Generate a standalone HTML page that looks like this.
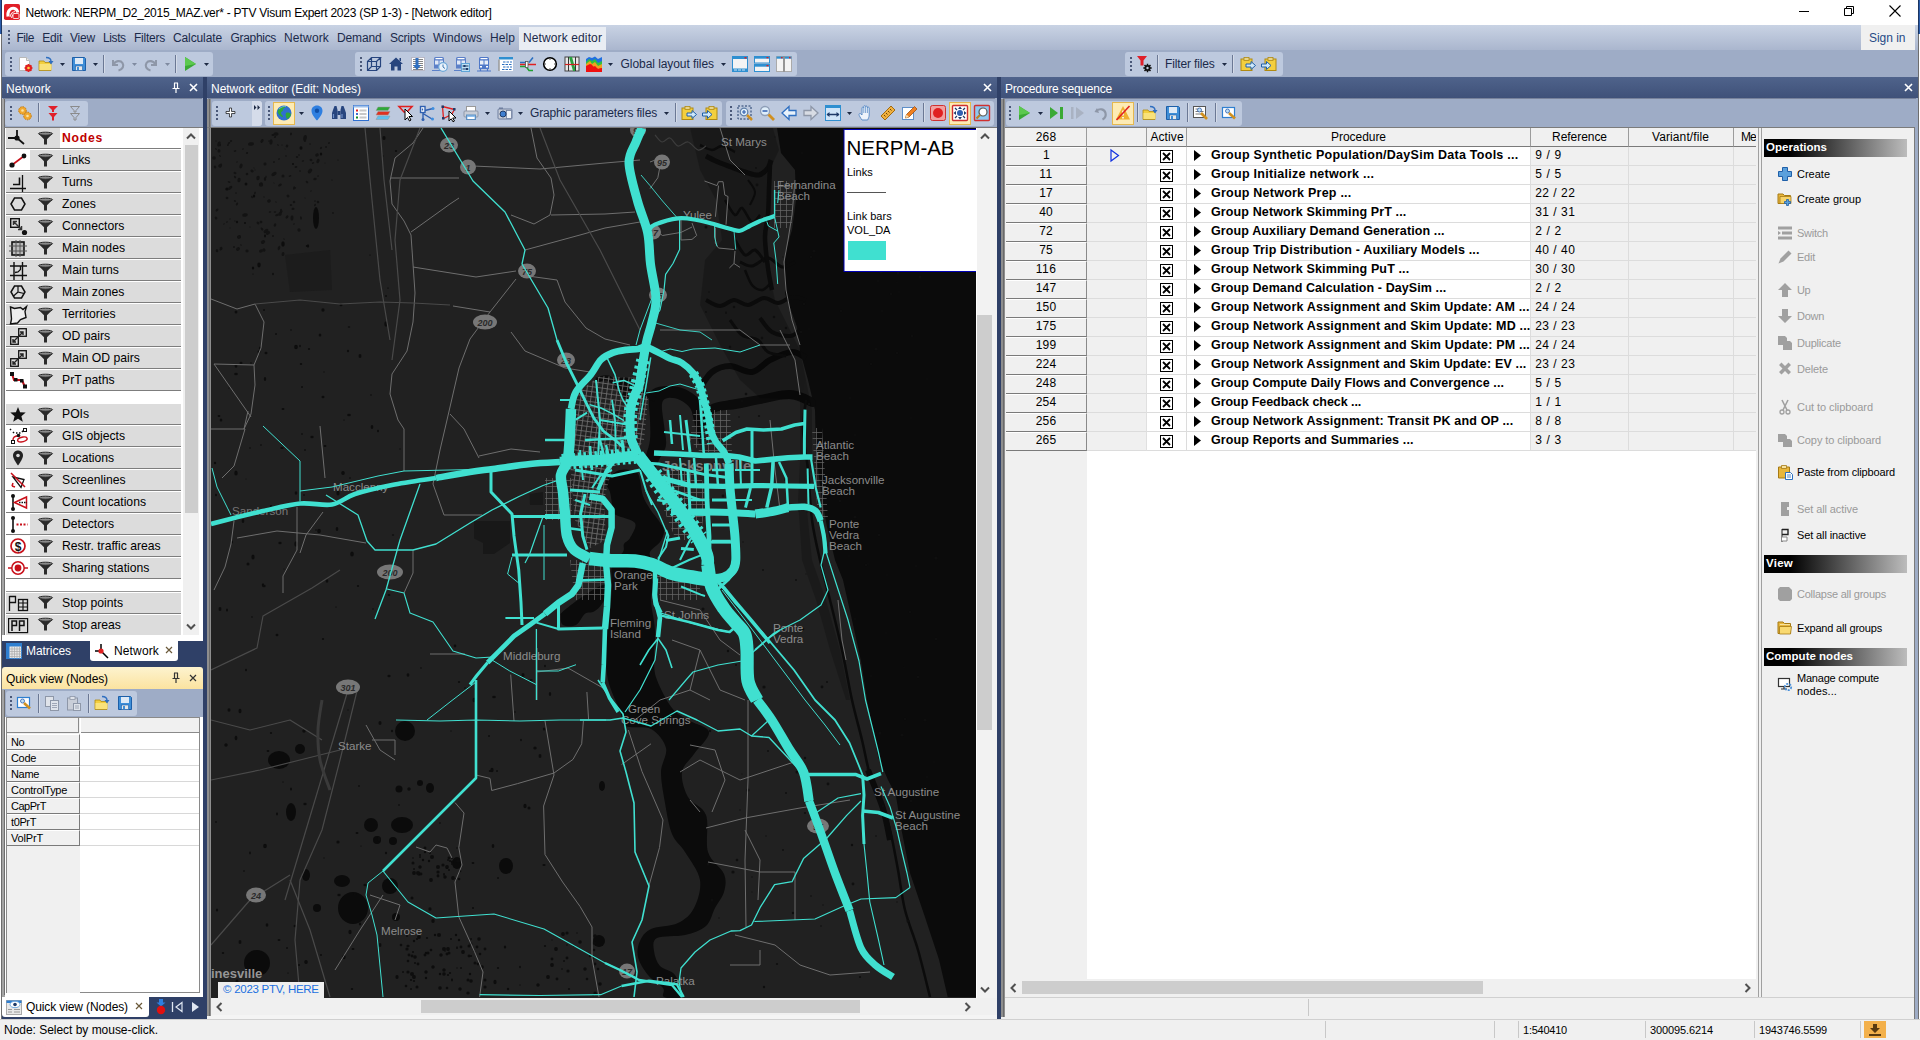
<!DOCTYPE html><html><head><meta charset="utf-8"><title>PTV Visum</title><style>
*{margin:0;padding:0;box-sizing:border-box}
html,body{width:1920px;height:1040px;overflow:hidden;background:#f0f0f0;font-family:"Liberation Sans",sans-serif;}
.t{position:absolute;white-space:pre;line-height:16px;height:16px;}
.r{position:absolute;}
.abs{position:absolute;}
svg{position:absolute;overflow:visible}
.ptitle{position:absolute;height:21px;top:77px;background:linear-gradient(#4f638b,#3f5179);}
.grp{position:absolute;background:#bdc9de;border-radius:3px;}
</style></head><body>
<div class="r" style="left:0px;top:0px;width:1920px;height:25px;background:#fff;"></div>
<div class="r" style="left:0px;top:0px;width:2px;height:33.5px;background:linear-gradient(90deg,#2a5caa 0,#2a5caa 65%,#1c3560 65%);"></div>
<div class="r" style="left:0px;top:33.5px;width:2px;height:1006.5px;background:linear-gradient(90deg,#fff 0,#fff 60%,#6e6e6e 60%);"></div>
<div class="r" style="left:1918px;top:0px;width:2px;height:33.5px;background:linear-gradient(90deg,#1c3560 0,#1c3560 30%,#2a5caa 30%);"></div>
<div class="r" style="left:1918px;top:33.5px;width:2px;height:1006.5px;background:linear-gradient(90deg,#6e6e6e 0,#6e6e6e 40%,#fff 40%);"></div>
<span class="t" style="left:25.50px;top:4.84px;font-size:12px;color:#000;letter-spacing:-0.254px;">Network: NERPM_D2_2015_MAZ.ver* - PTV Visum Expert 2023 (SP 1-3) - [Network editor]</span>
<svg style="left:4px;top:4px" width="17" height="17" viewBox="0 0 17 17"><rect x="0" y="0" width="16" height="16" rx="1.8" fill="#e01f27"/><path d="M4 12.5 C3 7 7 3.500 10.500 4.500 C12.500 5.200 13.500 6.500 13.800 8.500" stroke="#fff" stroke-width="3" fill="none"/><path d="M6 13 C6.500 10 8.500 8 11 7.500M7.500 14 C8 11.500 9.500 10 11.500 9.500" stroke="#fff" stroke-width="1.100" fill="none" opacity=".85"/><rect x="9" y="9.500" width="6" height="5" rx="1" fill="#e01f27" stroke="#fff" stroke-width=".9" opacity=".9"/></svg>
<svg style="left:1795px;top:0" width="120" height="25"><path d="M4 11.5h10" stroke="#000" stroke-width="1"/><path d="M49.5 8.5h7v7h-7z M51.5 8.5v-2h7v7h-2" stroke="#000" fill="none" stroke-width="1"/><path d="M94.5 5.5l11 11M105.5 5.5l-11 11" stroke="#000" stroke-width="1.1"/></svg>
<div class="r" style="left:2px;top:25px;width:1916px;height:25px;background:linear-gradient(#c9d3e4,#aab6ce);"></div>
<div class="r" style="left:519px;top:27px;width:87px;height:23px;background:#e9edf3;"></div>
<div class="r" style="left:1861px;top:25px;width:54px;height:25px;background:#f0f0f0;"></div>
<span class="t" style="left:16.50px;top:29.84px;font-size:12px;color:#1b2a4a;letter-spacing:-0.459px;">File</span>
<span class="t" style="left:42.30px;top:29.84px;font-size:12px;color:#1b2a4a;letter-spacing:-0.244px;">Edit</span>
<span class="t" style="left:70.00px;top:29.84px;font-size:12px;color:#1b2a4a;letter-spacing:-0.198px;">View</span>
<span class="t" style="left:103.00px;top:29.84px;font-size:12px;color:#1b2a4a;letter-spacing:-0.395px;">Lists</span>
<span class="t" style="left:134.00px;top:29.84px;font-size:12px;color:#1b2a4a;letter-spacing:-0.238px;">Filters</span>
<span class="t" style="left:173.00px;top:29.84px;font-size:12px;color:#1b2a4a;letter-spacing:-0.114px;">Calculate</span>
<span class="t" style="left:230.50px;top:29.84px;font-size:12px;color:#1b2a4a;letter-spacing:-0.315px;">Graphics</span>
<span class="t" style="left:284.00px;top:29.84px;font-size:12px;color:#1b2a4a;letter-spacing:0.141px;">Network</span>
<span class="t" style="left:337.00px;top:29.84px;font-size:12px;color:#1b2a4a;letter-spacing:-0.143px;">Demand</span>
<span class="t" style="left:390.00px;top:29.84px;font-size:12px;color:#1b2a4a;letter-spacing:-0.239px;">Scripts</span>
<span class="t" style="left:433.00px;top:29.84px;font-size:12px;color:#1b2a4a;letter-spacing:0.046px;">Windows</span>
<span class="t" style="left:490.00px;top:29.84px;font-size:12px;color:#1b2a4a;letter-spacing:0.080px;">Help</span>
<span class="t" style="left:523.00px;top:29.84px;font-size:12px;color:#1b2a4a;letter-spacing:0.117px;">Network editor</span>
<span class="t" style="left:1869.00px;top:29.84px;font-size:12px;color:#274b86;letter-spacing:-0.027px;">Sign in</span>
<div class="r" style="left:8px;top:30px;width:2px;height:2px;background:#4a5878;"></div><div class="r" style="left:8px;top:34px;width:2px;height:2px;background:#4a5878;"></div><div class="r" style="left:8px;top:38px;width:2px;height:2px;background:#4a5878;"></div><div class="r" style="left:8px;top:42px;width:2px;height:2px;background:#4a5878;"></div>
<div class="r" style="left:2px;top:50px;width:1916px;height:27px;background:#9eacc6;"></div>
<div class="grp" style="left:5px;top:52px;width:208px;height:24px"></div>
<div class="grp" style="left:355px;top:52px;width:442px;height:24px"></div>
<div class="grp" style="left:1125px;top:52px;width:158px;height:24px"></div>
<div class="r" style="left:10px;top:57px;width:2px;height:2px;background:#4a5878;"></div><div class="r" style="left:10px;top:61px;width:2px;height:2px;background:#4a5878;"></div><div class="r" style="left:10px;top:65px;width:2px;height:2px;background:#4a5878;"></div><div class="r" style="left:10px;top:69px;width:2px;height:2px;background:#4a5878;"></div>
<div class="r" style="left:360px;top:57px;width:2px;height:2px;background:#4a5878;"></div><div class="r" style="left:360px;top:61px;width:2px;height:2px;background:#4a5878;"></div><div class="r" style="left:360px;top:65px;width:2px;height:2px;background:#4a5878;"></div><div class="r" style="left:360px;top:69px;width:2px;height:2px;background:#4a5878;"></div>
<div class="r" style="left:1130px;top:57px;width:2px;height:2px;background:#4a5878;"></div><div class="r" style="left:1130px;top:61px;width:2px;height:2px;background:#4a5878;"></div><div class="r" style="left:1130px;top:65px;width:2px;height:2px;background:#4a5878;"></div><div class="r" style="left:1130px;top:69px;width:2px;height:2px;background:#4a5878;"></div>
<svg style="left:16.5px;top:56px" width="16" height="16" viewBox="0 0 16 16"><path d="M2.500 1.500h7l3 3v10h-10z" fill="#fff" stroke="#b8b8b8"/><path d="M9.500 1.500v3h3" fill="#e8e8e8" stroke="#b8b8b8"/><circle cx="11.500" cy="12" r="3.500" fill="#e02020"/><path d="M11.500 8v8M7.500 12h8M8.700 9.200l5.600 5.600M14.300 9.200l-5.600 5.600" stroke="#e02020" stroke-width="1.400"/><circle cx="11.500" cy="12" r="1.300" fill="#ffd040"/></svg>
<svg style="left:38px;top:56px" width="16" height="16" viewBox="0 0 16 16"><path d="M1 5h5l1 1.500h6v8h-12z" fill="#f3cf3f" stroke="#b08a12" stroke-width=".8"/><path d="M1.500 8h12v6h-12z" fill="#f9e27a"/><path d="M8 1.500c3 0 5 1 5 4" stroke="#2f6fc0" stroke-width="1.500" fill="none"/><path d="M10.500 5h5l-2.500 3.500z" fill="#2f6fc0"/></svg>
<svg style="left:60px;top:63px" width="5" height="3"><path d="M0 0h5l-2.500 3z" fill="#1e2a44"/></svg>
<svg style="left:71px;top:56px" width="16" height="16" viewBox="0 0 16 16"><path d="M1.500 1.500h12l1 1v12h-13z" fill="#3f8fd8" stroke="#1d5fa8"/><rect x="4" y="2" width="8" height="6" fill="#dfeaf6"/><rect x="4.500" y="10" width="7" height="4.500" fill="#e8e8e8" stroke="#1d5fa8" stroke-width=".6"/><rect x="6" y="11" width="2" height="3" fill="#3f8fd8"/></svg>
<svg style="left:93px;top:63px" width="5" height="3"><path d="M0 0h5l-2.500 3z" fill="#1e2a44"/></svg>
<div class="r" style="left:103px;top:55px;width:1px;height:18px;background:#6b7894"></div><div class="r" style="left:104px;top:55px;width:1px;height:18px;background:#d4dbe8"></div>
<svg style="left:109.5px;top:56px" width="16" height="16" viewBox="0 0 16 16"><path d="M3 4v5h5" stroke="#8e97a8" stroke-width="2" fill="none"/><path d="M3.500 8.500c2-4 7-4.500 9-1.500s0 6.500-4 7.500" stroke="#8e97a8" stroke-width="2.200" fill="none"/></svg>
<svg style="left:132px;top:63px" width="5" height="3"><path d="M0 0h5l-2.500 3z" fill="#7f8aa0"/></svg>
<svg style="left:142.5px;top:56px" width="16" height="16" viewBox="0 0 16 16"><path d="M13 4v5h-5" stroke="#8e97a8" stroke-width="2" fill="none"/><path d="M12.500 8.500c-2-4-7-4.500-9-1.500s0 6.500 4 7.500" stroke="#8e97a8" stroke-width="2.200" fill="none"/></svg>
<svg style="left:165px;top:63px" width="5" height="3"><path d="M0 0h5l-2.500 3z" fill="#7f8aa0"/></svg>
<div class="r" style="left:175px;top:55px;width:1px;height:18px;background:#6b7894"></div><div class="r" style="left:176px;top:55px;width:1px;height:18px;background:#d4dbe8"></div>
<svg style="left:182px;top:56px" width="16" height="16" viewBox="0 0 16 16"><path d="M3 1l11 7-11 7z" fill="#3aa935"/><path d="M3 1l11 7-11 2z" fill="#5cc94f"/></svg>
<svg style="left:204px;top:63px" width="5" height="3"><path d="M0 0h5l-2.500 3z" fill="#1e2a44"/></svg>
<svg style="left:366px;top:56px" width="16" height="16" viewBox="0 0 16 16"><path d="M1.500 5.500h9v9h-9zM1.500 5.500l4-4h9l-4 4M14.500 1.500v9l-4 4M1.500 14.500l4-4h9M5.500 1.500v9" stroke="#27457e" stroke-width="1.200" fill="none"/></svg>
<svg style="left:388px;top:56px" width="16" height="16" viewBox="0 0 16 16"><path d="M8 1.500l7 6.500h-2v6.500h-3.500v-4h-3v4h-3.500v-6.500h-2z" fill="#27457e"/><rect x="11.500" y="2" width="1.500" height="3" fill="#27457e"/></svg>
<svg style="left:410px;top:56px" width="16" height="16" viewBox="0 0 16 16"><rect x="1.500" y="1.500" width="13" height="13" fill="#fff" stroke="#b9b9c6"/><path d="M3 3.500h10M3 5.500h10M3 7.500h10M3 9.500h10M3 11.500h10M3 13.500h10" stroke="#666" stroke-width=".8"/><path d="M5.500 2h3v7h2.500l-4 5-4-5h2.500z" fill="#2f6fc0"/></svg>
<svg style="left:432px;top:56px" width="16" height="16" viewBox="0 0 16 16"><path d="M2 2.500q0-1.500 1.500-1.500h7q1.500 0 1.500 1.500v10h-10z" fill="#5c80c8"/><rect x="3.500" y="2" width="7" height="1.200" fill="#fff"/><rect x="3" y="4.500" width="3.500" height="4" fill="#dfe8f6"/><rect x="7.500" y="4.500" width="3.500" height="4" fill="#dfe8f6"/><path d="M0 14.500h9" stroke="#5c80c8"/><circle cx="11" cy="11" r="4.300" fill="#eaf3fb" stroke="#6fa8d8" stroke-width="1.200"/><path d="M11 8.500v2.500l2 1.500" stroke="#3f78b0" stroke-width="1" fill="none"/></svg>
<svg style="left:454px;top:56px" width="16" height="16" viewBox="0 0 16 16"><path d="M2 2.500q0-1.500 1.500-1.500h7q1.500 0 1.500 1.500v10h-10z" fill="#5c80c8"/><rect x="3.500" y="2" width="7" height="1.200" fill="#fff"/><rect x="3" y="4.500" width="3.500" height="4" fill="#dfe8f6"/><rect x="7.500" y="4.500" width="3.500" height="4" fill="#dfe8f6"/><path d="M0 14.500h9" stroke="#5c80c8"/><rect x="7.500" y="7.500" width="8" height="8" fill="#bfe0f4" stroke="#5fa4d6"/><path d="M8.500 10h6M8.500 13h6" stroke="#1e3a68" stroke-width="1"/><rect x="9.500" y="9" width="2" height="2" fill="#1e3a68"/><rect x="12" y="12" width="2" height="2" fill="#1e3a68"/></svg>
<svg style="left:476px;top:56px" width="16" height="16" viewBox="0 0 16 16"><path d="M3 2.500q0-1.500 1.500-1.500h7q1.500 0 1.500 1.500v10.500h-10z" fill="#4f78c8"/><rect x="4.500" y="2" width="7" height="1.200" fill="#fff"/><rect x="4" y="4.500" width="3.500" height="4" fill="#e8eef8"/><rect x="8.500" y="4.500" width="3.500" height="4" fill="#e8eef8"/><rect x="4" y="10" width="2" height="1.500" fill="#fff"/><rect x="10" y="10" width="2" height="1.500" fill="#fff"/><path d="M4.500 13v1.500M11.500 13v1.500M1 15h14" stroke="#4f78c8" stroke-width="1.200"/></svg>
<svg style="left:498px;top:56px" width="16" height="16" viewBox="0 0 16 16"><rect x="1" y="1" width="14" height="14" fill="#fff"/><rect x="1" y="1" width="14" height="2.500" fill="#2f8fd0"/><path d="M1 3.500v11.500" stroke="#999" stroke-width="1.500"/><path d="M5 6h9M4 8.500h10M5 11h9M4 13.500h10" stroke="#2a6fc0" stroke-width="1" stroke-dasharray="2.500 1"/></svg>
<svg style="left:520px;top:56px" width="16" height="16" viewBox="0 0 16 16"><path d="M0 6.500h6M9 6.500l4-5" stroke="#2a6fc0" stroke-width="1.500" fill="none"/><path d="M0 8.500h16" stroke="#e02020" stroke-width="1.500"/><path d="M0 10.500h6l3 4h4" stroke="#20a030" stroke-width="1.500" fill="none"/><rect x="5.500" y="5.500" width="2.500" height="6" fill="#fff" stroke="#555" stroke-width=".8"/></svg>
<svg style="left:542px;top:56px" width="16" height="16" viewBox="0 0 16 16"><circle cx="8" cy="8" r="6.300" fill="#fff" stroke="#000" stroke-width="1.600"/><path d="M8 2.500v1.500M8 12v1.500M2.500 8h1.500M12 8h1.500" stroke="#555" stroke-width="1"/></svg>
<svg style="left:564px;top:56px" width="16" height="16" viewBox="0 0 16 16"><rect x="1" y="1" width="14" height="14" fill="#e8e8e8" stroke="#444"/><path d="M5 1l4 14h3l-4-14z" fill="#2aa040"/><path d="M4.500 1v14M11.500 1v14" stroke="#333" stroke-width="1"/><path d="M1 8.500h14" stroke="#d02020" stroke-width="1.200"/></svg>
<svg style="left:586px;top:56px" width="16" height="16" viewBox="0 0 16 16"><path d="M0 3l3-2 3 1 3-1.500 3 2.500 4-2v15h-16z" fill="#1f6fe0"/><path d="M0 6l3-3 3 2 3-2 3 4 4-2v11h-16z" fill="#30c040"/><path d="M0 8l4-3 2 3 3-2 3 4 4-2v8h-16z" fill="#f0a020"/><path d="M0 10l4-2 3 3 2-1 3 3 4-1v4h-16z" fill="#f01010"/><path d="M0 11l5-3 3 3 4 2 4-1v4h-16z" fill="#f01010"/></svg>
<svg style="left:608px;top:62.5px" width="5" height="3"><path d="M0 0h5l-2.500 3z" fill="#1e2a44"/></svg>
<span class="t" style="left:620.60px;top:55.84px;font-size:12px;color:#1b2a4a;letter-spacing:-0.069px;">Global layout files</span>
<svg style="left:721px;top:62.5px" width="5" height="3"><path d="M0 0h5l-2.500 3z" fill="#1e2a44"/></svg>
<svg style="left:732px;top:56px" width="16" height="16" viewBox="0 0 16 16"><rect x=".500" y=".500" width="15" height="15" fill="#f4f4f4" stroke="#2f8fd0"/><rect x=".500" y=".500" width="15" height="2.500" fill="#2f8fd0"/><rect x="12.500" y="1" width="2" height="1.500" fill="#e02020"/><rect x=".500" y="12.500" width="15" height="3" fill="#2f8fd0"/><path d="M2 14h3M6 14h3M10 14h3" stroke="#cfe6f6" stroke-width="1"/></svg>
<svg style="left:754px;top:56px" width="16" height="16" viewBox="0 0 16 16"><rect x=".500" y=".500" width="15" height="6.500" fill="#f4f4f4" stroke="#2f8fd0"/><rect x=".500" y=".500" width="15" height="2.200" fill="#2f8fd0"/><rect x="12.500" y="1" width="2" height="1.300" fill="#e02020"/><rect x=".500" y="8.500" width="15" height="7" fill="#f4f4f4" stroke="#2f8fd0"/><rect x=".500" y="8.500" width="15" height="2.200" fill="#2f8fd0"/><rect x="12.500" y="9" width="2" height="1.300" fill="#e02020"/></svg>
<svg style="left:776px;top:56px" width="16" height="16" viewBox="0 0 16 16"><rect x=".500" y=".500" width="7" height="15" fill="#f4f4f4" stroke="#aaa"/><rect x="8.500" y=".500" width="7" height="15" fill="#f4f4f4" stroke="#aaa"/><rect x=".500" y=".500" width="7" height="2.200" fill="#2f8fd0"/><rect x="8.500" y=".500" width="7" height="2.200" fill="#2f8fd0"/><rect x="5" y="1" width="1.500" height="1.300" fill="#e02020"/><rect x="13" y="1" width="1.500" height="1.300" fill="#e02020"/><path d="M8 0v16" stroke="#888" stroke-width="1.200"/></svg>
<svg style="left:1136px;top:56px" width="16" height="16" viewBox="0 0 16 16"><path d="M1 0h10l-3.500 4.500v5h-3v-5z" fill="#e0202a"/><circle cx="11.500" cy="12" r="3" fill="#111"/><path d="M11.500 7.800v8.400M7.300 12h8.400M8.500 9l6 6M14.500 9l-6 6" stroke="#111" stroke-width="1.500"/><circle cx="11.500" cy="12" r="1.200" fill="#bdc9de"/></svg>
<div class="r" style="left:1157px;top:55px;width:1px;height:18px;background:#6b7894"></div><div class="r" style="left:1158px;top:55px;width:1px;height:18px;background:#d4dbe8"></div>
<span class="t" style="left:1165.00px;top:55.84px;font-size:12px;color:#1b2a4a;letter-spacing:-0.137px;">Filter files</span>
<svg style="left:1222px;top:62.5px" width="5" height="3"><path d="M0 0h5l-2.500 3z" fill="#1e2a44"/></svg>
<div class="r" style="left:1232px;top:55px;width:1px;height:18px;background:#6b7894"></div><div class="r" style="left:1233px;top:55px;width:1px;height:18px;background:#d4dbe8"></div>
<svg style="left:1239.5px;top:56px" width="16" height="16" viewBox="0 0 16 16"><rect x="1" y="3" width="11" height="11.500" fill="#f3cf3f" stroke="#b08a12"/><rect x="4" y="1.500" width="5" height="3" fill="#e8d48a" stroke="#b08a12" stroke-width=".8"/><path d="M6 8h5v-2.500l4.500 4-4.500 4v-2.500h-5z" fill="#cfe8fa" stroke="#1f5fa8" stroke-width="1"/></svg>
<svg style="left:1260.5px;top:56px" width="16" height="16" viewBox="0 0 16 16"><rect x="4" y="3" width="11" height="11.500" fill="#f3cf3f" stroke="#b08a12"/><rect x="7" y="1.500" width="5" height="3" fill="#e8d48a" stroke="#b08a12" stroke-width=".8"/><path d="M.500 8h5v-2.500l4.500 4-4.500 4v-2.500h-5z" fill="#cfe8fa" stroke="#1f5fa8" stroke-width="1"/></svg>
<div class="r" style="left:2px;top:77px;width:1916px;height:942px;background:#2f4067;"></div>
<div class="ptitle" style="left:2px;width:201px"></div>
<div class="ptitle" style="left:207px;width:790px"></div>
<div class="ptitle" style="left:1001px;width:917px"></div>
<span class="t" style="left:6.00px;top:81.34px;font-size:12px;color:#fff;letter-spacing:0.141px;">Network</span>
<span class="t" style="left:211.00px;top:81.34px;font-size:12px;color:#fff;letter-spacing:-0.026px;">Network editor (Edit: Nodes)</span>
<span class="t" style="left:1005.00px;top:81.34px;font-size:12px;color:#fff;letter-spacing:-0.208px;">Procedure sequence</span>
<svg style="left:171px;top:82px" width="10" height="12"><path d="M3 1h4M3.5 1v5M6.5 1v5M1.5 6.5h7M5 7v4" stroke="#fff" stroke-width="1.2" fill="none"/></svg>
<svg style="left:189px;top:83px" width="9" height="9"><path d="M1 1l7 7M8 1l-7 7" stroke="#fff" stroke-width="1.6" fill="none"/></svg>
<svg style="left:983px;top:83px" width="9" height="9"><path d="M1 1l7 7M8 1l-7 7" stroke="#fff" stroke-width="1.6" fill="none"/></svg>
<svg style="left:1904px;top:83px" width="9" height="9"><path d="M1 1l7 7M8 1l-7 7" stroke="#fff" stroke-width="1.6" fill="none"/></svg>
<div class="r" style="left:2px;top:98px;width:201px;height:540px;background:#9eacc6;"></div>
<div class="r" style="left:3px;top:98px;width:199px;height:1px;background:#77829b;"></div>
<div class="grp" style="left:5px;top:101px;width:83px;height:25px"></div>
<div class="r" style="left:10px;top:106px;width:2px;height:2px;background:#4a5878;"></div><div class="r" style="left:10px;top:110px;width:2px;height:2px;background:#4a5878;"></div><div class="r" style="left:10px;top:114px;width:2px;height:2px;background:#4a5878;"></div><div class="r" style="left:10px;top:118px;width:2px;height:2px;background:#4a5878;"></div>
<svg style="left:16.5px;top:104.5px" width="16" height="16" viewBox="0 0 16 16"><circle cx="5.500" cy="5.500" r="3.800" fill="#f0a830" stroke="#c07810" stroke-width="1" stroke-dasharray="1.500 1"/><circle cx="5.500" cy="5.500" r="1.300" fill="#fbe3a0"/><circle cx="10.500" cy="11" r="3.800" fill="#f0a830" stroke="#c07810" stroke-width="1" stroke-dasharray="1.500 1"/><circle cx="10.500" cy="11" r="1.300" fill="#fbe3a0"/></svg>
<div class="r" style="left:38px;top:103px;width:1px;height:19px;background:#6b7894"></div><div class="r" style="left:39px;top:103px;width:1px;height:19px;background:#d4dbe8"></div>
<svg style="left:45px;top:104.5px" width="16" height="16" viewBox="0 0 16 16"><path d="M3 1h10l-4 4v2h-2v-2z" fill="#e0202a"/><path d="M3.500 8h9l-3.500 4v3.500h-2v-3.500z" fill="#e0202a"/></svg>
<svg style="left:67px;top:104.5px" width="16" height="16" viewBox="0 0 16 16"><path d="M3.500 1.500h9l-3.500 4v1.500h-2v-1.500z" fill="none" stroke="#8a8a8a" stroke-width="1"/><path d="M3.500 8.500h9l-3.500 4v2.500h-2v-2.500z" fill="none" stroke="#8a8a8a" stroke-width="1"/></svg>
<div class="r" style="left:2px;top:127px;width:201px;height:511px;background:#fff;"></div>
<div class="r" style="left:2px;top:99px;width:3px;height:539px;background:#a4a4a4;"></div>
<div class="r" style="left:4px;top:99px;width:1px;height:537px;background:#6e6e6e;"></div>
<div class="r" style="left:5px;top:127px;width:1px;height:509px;background:#fff;"></div>
<div class="r" style="left:4px;top:127px;width:199px;height:1px;background:#7b7b7b;"></div>
<div class="r" style="left:6px;top:635px;width:197px;height:1px;background:#d0d0d0;"></div>
<div class="r" style="left:183px;top:128px;width:16px;height:507px;background:#f0f0f0;"></div>
<div class="r" style="left:185px;top:145px;width:13px;height:368px;background:#cdcdcd;"></div>
<svg style="left:186px;top:133px" width="10" height="7"><path d="M1 5.5l4-4 4 4" stroke="#505050" stroke-width="2" fill="none"/></svg>
<svg style="left:186px;top:623px" width="10" height="7"><path d="M1 1.5l4 4 4-4" stroke="#505050" stroke-width="2" fill="none"/></svg>
<div class="r" style="left:6px;top:128px;width:175px;height:20px;background:#dcdcdc;"></div>
<div class="r" style="left:6px;top:148px;width:175px;height:1px;background:#7d7d7d;"></div>
<div class="r" style="left:60px;top:128px;width:121px;height:20px;background:#fff;"></div>
<svg style="left:6px;top:128px" width="24" height="20" viewBox="0 0 24 20"><path d="M2 10h9M11 2v8M11 10l7 6" stroke="#111" stroke-width="1.8" fill="none"/><circle cx="11" cy="10" r="2.6" fill="#111"/></svg>
<svg style="left:37.5px;top:131.5px" width="15" height="13" viewBox="0 0 15 13"><path d="M0.3 1.6 L6 7.2 V12.5 H9 V7.2 L14.7 1.6 Z" fill="#2a2a2a"/><ellipse cx="7.5" cy="1.7" rx="7" ry="1.5" fill="#8a8a8a" stroke="#2a2a2a" stroke-width="1"/></svg>
<span class="t" style="left:62.00px;top:130.07px;font-size:12.2px;color:#c00000;letter-spacing:0.743px;font-weight:bold;">Nodes</span>
<div class="r" style="left:6px;top:150px;width:175px;height:20px;background:#dcdcdc;"></div>
<div class="r" style="left:6px;top:170px;width:175px;height:1px;background:#7d7d7d;"></div>
<div class="r" style="left:6px;top:150px;width:24px;height:20px;background:#fff;"></div>
<svg style="left:6px;top:150px" width="24" height="20" viewBox="0 0 24 20"><path d="M6 15l12-9" stroke="#c8101a" stroke-width="1.6"/><circle cx="6" cy="15" r="2.6" fill="#111"/><circle cx="18" cy="6" r="2.4" fill="#111"/></svg>
<svg style="left:37.5px;top:153.5px" width="15" height="13" viewBox="0 0 15 13"><path d="M0.3 1.6 L6 7.2 V12.5 H9 V7.2 L14.7 1.6 Z" fill="#2a2a2a"/><ellipse cx="7.5" cy="1.7" rx="7" ry="1.5" fill="#8a8a8a" stroke="#2a2a2a" stroke-width="1"/></svg>
<span class="t" style="left:62.00px;top:152.07px;font-size:12.2px;color:#000;">Links</span>
<div class="r" style="left:6px;top:172px;width:175px;height:20px;background:#dcdcdc;"></div>
<div class="r" style="left:6px;top:192px;width:175px;height:1px;background:#7d7d7d;"></div>
<svg style="left:6px;top:172px" width="24" height="20" viewBox="0 0 24 20"><path d="M4 16.5h16M16.5 3v17" stroke="#111" stroke-width="1.3" fill="none"/><path d="M7 12.5h6.5v-7" stroke="#111" stroke-width="1.6" fill="none"/></svg>
<svg style="left:37.5px;top:175.5px" width="15" height="13" viewBox="0 0 15 13"><path d="M0.3 1.6 L6 7.2 V12.5 H9 V7.2 L14.7 1.6 Z" fill="#2a2a2a"/><ellipse cx="7.5" cy="1.7" rx="7" ry="1.5" fill="#8a8a8a" stroke="#2a2a2a" stroke-width="1"/></svg>
<span class="t" style="left:62.00px;top:174.07px;font-size:12.2px;color:#000;">Turns</span>
<div class="r" style="left:6px;top:194px;width:175px;height:20px;background:#dcdcdc;"></div>
<div class="r" style="left:6px;top:214px;width:175px;height:1px;background:#7d7d7d;"></div>
<svg style="left:6px;top:194px" width="24" height="20" viewBox="0 0 24 20"><path d="M5 10l3.5-6h7l3.5 6-3.5 6h-7z" stroke="#111" stroke-width="1.5" fill="none"/></svg>
<svg style="left:37.5px;top:197.5px" width="15" height="13" viewBox="0 0 15 13"><path d="M0.3 1.6 L6 7.2 V12.5 H9 V7.2 L14.7 1.6 Z" fill="#2a2a2a"/><ellipse cx="7.5" cy="1.7" rx="7" ry="1.5" fill="#8a8a8a" stroke="#2a2a2a" stroke-width="1"/></svg>
<span class="t" style="left:62.00px;top:196.07px;font-size:12.2px;color:#000;">Zones</span>
<div class="r" style="left:6px;top:216px;width:175px;height:20px;background:#dcdcdc;"></div>
<div class="r" style="left:6px;top:236px;width:175px;height:1px;background:#7d7d7d;"></div>
<svg style="left:6px;top:216px" width="24" height="20" viewBox="0 0 24 20"><rect x="4.7" y="2.7" width="8.6" height="8.6" stroke="#111" stroke-width="1.4" fill="none"/><path d="M7.5 5.5l8 8M7.5 9v-3.5h3.5M15.5 10v3.5h-3.5" stroke="#333" stroke-width="1.5" fill="none"/><circle cx="18.5" cy="16.5" r="2.6" fill="#111"/></svg>
<svg style="left:37.5px;top:219.5px" width="15" height="13" viewBox="0 0 15 13"><path d="M0.3 1.6 L6 7.2 V12.5 H9 V7.2 L14.7 1.6 Z" fill="#2a2a2a"/><ellipse cx="7.5" cy="1.7" rx="7" ry="1.5" fill="#8a8a8a" stroke="#2a2a2a" stroke-width="1"/></svg>
<span class="t" style="left:62.00px;top:218.07px;font-size:12.2px;color:#000;">Connectors</span>
<div class="r" style="left:6px;top:238px;width:175px;height:20px;background:#dcdcdc;"></div>
<div class="r" style="left:6px;top:258px;width:175px;height:1px;background:#7d7d7d;"></div>
<svg style="left:6px;top:238px" width="24" height="20" viewBox="0 0 24 20"><rect x="6" y="4" width="12" height="13" stroke="#111" stroke-width="1.6" fill="#bbb"/><path d="M3 8h18M3 13h18M10 2v17M14 2v17" stroke="#555" stroke-width="1" fill="none"/></svg>
<svg style="left:37.5px;top:241.5px" width="15" height="13" viewBox="0 0 15 13"><path d="M0.3 1.6 L6 7.2 V12.5 H9 V7.2 L14.7 1.6 Z" fill="#2a2a2a"/><ellipse cx="7.5" cy="1.7" rx="7" ry="1.5" fill="#8a8a8a" stroke="#2a2a2a" stroke-width="1"/></svg>
<span class="t" style="left:62.00px;top:240.07px;font-size:12.2px;color:#000;">Main nodes</span>
<div class="r" style="left:6px;top:260px;width:175px;height:20px;background:#dcdcdc;"></div>
<div class="r" style="left:6px;top:280px;width:175px;height:1px;background:#7d7d7d;"></div>
<svg style="left:6px;top:260px" width="24" height="20" viewBox="0 0 24 20"><path d="M4 6h17M4 15.5h17M8 2v18M16.5 2v18" stroke="#111" stroke-width="1.4" fill="none"/><path d="M9 12.5l3-.5 2.5-2.5V6" stroke="#111" stroke-width="1.3" fill="none"/></svg>
<svg style="left:37.5px;top:263.5px" width="15" height="13" viewBox="0 0 15 13"><path d="M0.3 1.6 L6 7.2 V12.5 H9 V7.2 L14.7 1.6 Z" fill="#2a2a2a"/><ellipse cx="7.5" cy="1.7" rx="7" ry="1.5" fill="#8a8a8a" stroke="#2a2a2a" stroke-width="1"/></svg>
<span class="t" style="left:62.00px;top:262.07px;font-size:12.2px;color:#000;">Main turns</span>
<div class="r" style="left:6px;top:282px;width:175px;height:20px;background:#dcdcdc;"></div>
<div class="r" style="left:6px;top:302px;width:175px;height:1px;background:#7d7d7d;"></div>
<svg style="left:6px;top:282px" width="24" height="20" viewBox="0 0 24 20"><path d="M5 10l3.5-6h7l3.5 6-3.5 6h-7z" stroke="#111" stroke-width="1.5" fill="none"/><path d="M12 4v6l6 1.5M12 10l-5 4.5" stroke="#111" stroke-width="1.2" fill="none"/></svg>
<svg style="left:37.5px;top:285.5px" width="15" height="13" viewBox="0 0 15 13"><path d="M0.3 1.6 L6 7.2 V12.5 H9 V7.2 L14.7 1.6 Z" fill="#2a2a2a"/><ellipse cx="7.5" cy="1.7" rx="7" ry="1.5" fill="#8a8a8a" stroke="#2a2a2a" stroke-width="1"/></svg>
<span class="t" style="left:62.00px;top:284.07px;font-size:12.2px;color:#000;">Main zones</span>
<div class="r" style="left:6px;top:304px;width:175px;height:20px;background:#dcdcdc;"></div>
<div class="r" style="left:6px;top:324px;width:175px;height:1px;background:#7d7d7d;"></div>
<svg style="left:6px;top:304px" width="24" height="20" viewBox="0 0 24 20"><path d="M4.500 3l4 1.500 6-1 2.500 2 3.500-3-1.500 5 1 6-5.500 2-3 3.500-7 1 1-5z" stroke="#111" stroke-width="1.4" fill="#eee"/></svg>
<svg style="left:37.5px;top:307.5px" width="15" height="13" viewBox="0 0 15 13"><path d="M0.3 1.6 L6 7.2 V12.5 H9 V7.2 L14.7 1.6 Z" fill="#2a2a2a"/><ellipse cx="7.5" cy="1.7" rx="7" ry="1.5" fill="#8a8a8a" stroke="#2a2a2a" stroke-width="1"/></svg>
<span class="t" style="left:62.00px;top:306.07px;font-size:12.2px;color:#000;">Territories</span>
<div class="r" style="left:6px;top:326px;width:175px;height:20px;background:#dcdcdc;"></div>
<div class="r" style="left:6px;top:346px;width:175px;height:1px;background:#7d7d7d;"></div>
<svg style="left:6px;top:326px" width="24" height="20" viewBox="0 0 24 20"><rect x="4.700" y="10.700" width="7.600" height="7.600" stroke="#111" stroke-width="1.300" fill="none"/><rect x="12.700" y="2.700" width="7.600" height="7.600" stroke="#111" stroke-width="1.300" fill="none"/><path d="M7 16l10-10M14 6h3v3M10 16h-3v-3" stroke="#222" stroke-width="1.400" fill="none"/></svg>
<svg style="left:37.5px;top:329.5px" width="15" height="13" viewBox="0 0 15 13"><path d="M0.3 1.6 L6 7.2 V12.5 H9 V7.2 L14.7 1.6 Z" fill="#2a2a2a"/><ellipse cx="7.5" cy="1.7" rx="7" ry="1.5" fill="#8a8a8a" stroke="#2a2a2a" stroke-width="1"/></svg>
<span class="t" style="left:62.00px;top:328.07px;font-size:12.2px;color:#000;">OD pairs</span>
<div class="r" style="left:6px;top:348px;width:175px;height:20px;background:#dcdcdc;"></div>
<div class="r" style="left:6px;top:368px;width:175px;height:1px;background:#7d7d7d;"></div>
<svg style="left:6px;top:348px" width="24" height="20" viewBox="0 0 24 20"><rect x="4.700" y="10.700" width="7.600" height="7.600" stroke="#111" stroke-width="1.300" fill="none"/><rect x="12.700" y="2.700" width="7.600" height="7.600" stroke="#111" stroke-width="1.300" fill="none"/><path d="M7 16l10-10M14 6h3v3M10 16h-3v-3" stroke="#222" stroke-width="1.400" fill="none"/></svg>
<svg style="left:37.5px;top:351.5px" width="15" height="13" viewBox="0 0 15 13"><path d="M0.3 1.6 L6 7.2 V12.5 H9 V7.2 L14.7 1.6 Z" fill="#2a2a2a"/><ellipse cx="7.5" cy="1.7" rx="7" ry="1.5" fill="#8a8a8a" stroke="#2a2a2a" stroke-width="1"/></svg>
<span class="t" style="left:62.00px;top:350.07px;font-size:12.2px;color:#000;">Main OD pairs</span>
<div class="r" style="left:6px;top:370px;width:175px;height:20px;background:#dcdcdc;"></div>
<div class="r" style="left:6px;top:390px;width:175px;height:1px;background:#7d7d7d;"></div>
<div class="r" style="left:6px;top:370px;width:24px;height:20px;background:#fff;"></div>
<svg style="left:6px;top:370px" width="24" height="20" viewBox="0 0 24 20"><path d="M6 4l2 6h8l2.500 6" stroke="#c8101a" stroke-width="2" fill="none"/><rect x="4" y="2" width="4" height="4" fill="#111"/><rect x="8" y="8" width="3.500" height="3.500" fill="#111"/><rect x="14" y="9" width="3.500" height="3.500" fill="#111"/><rect x="17" y="14.500" width="4" height="4" fill="#111"/></svg>
<svg style="left:37.5px;top:373.5px" width="15" height="13" viewBox="0 0 15 13"><path d="M0.3 1.6 L6 7.2 V12.5 H9 V7.2 L14.7 1.6 Z" fill="#2a2a2a"/><ellipse cx="7.5" cy="1.7" rx="7" ry="1.5" fill="#8a8a8a" stroke="#2a2a2a" stroke-width="1"/></svg>
<span class="t" style="left:62.00px;top:372.07px;font-size:12.2px;color:#000;">PrT paths</span>
<div class="r" style="left:6px;top:404px;width:175px;height:20px;background:#dcdcdc;"></div>
<div class="r" style="left:6px;top:424px;width:175px;height:1px;background:#7d7d7d;"></div>
<svg style="left:6px;top:404px" width="24" height="20" viewBox="0 0 24 20"><path d="M12 3l2.100 5.200 5.600.400-4.300 3.600 1.400 5.500L12 14.700 7.200 17.700l1.400-5.500L4.300 8.600l5.600-.400z" fill="#111"/></svg>
<svg style="left:37.5px;top:407.5px" width="15" height="13" viewBox="0 0 15 13"><path d="M0.3 1.6 L6 7.2 V12.5 H9 V7.2 L14.7 1.6 Z" fill="#2a2a2a"/><ellipse cx="7.5" cy="1.7" rx="7" ry="1.5" fill="#8a8a8a" stroke="#2a2a2a" stroke-width="1"/></svg>
<span class="t" style="left:62.00px;top:406.07px;font-size:12.2px;color:#000;">POIs</span>
<div class="r" style="left:6px;top:426px;width:175px;height:20px;background:#dcdcdc;"></div>
<div class="r" style="left:6px;top:446px;width:175px;height:1px;background:#7d7d7d;"></div>
<div class="r" style="left:6px;top:426px;width:24px;height:20px;background:#fff;"></div>
<svg style="left:6px;top:426px" width="24" height="20" viewBox="0 0 24 20"><path d="M4 3l1 1M7 6l1 1M10 7h5M16 6l2-2" stroke="#111" stroke-width="1.6" stroke-dasharray="1.5 1.5" fill="none"/><rect x="17.500" y="2.500" width="3" height="3" fill="#fff" stroke="#111"/><rect x="5.500" y="14.500" width="3" height="3" fill="#fff" stroke="#111"/><path d="M7 14c0-3 2-4 5-4" stroke="#c8101a" stroke-width="1.400" fill="none"/><path d="M12 13c2-2 8-3 9-1s-3 4-6 4-4-1-3-3z" stroke="#c8101a" stroke-width="1.400" fill="none"/><circle cx="12.500" cy="9.500" r="1.800" fill="#111"/></svg>
<svg style="left:37.5px;top:429.5px" width="15" height="13" viewBox="0 0 15 13"><path d="M0.3 1.6 L6 7.2 V12.5 H9 V7.2 L14.7 1.6 Z" fill="#2a2a2a"/><ellipse cx="7.5" cy="1.7" rx="7" ry="1.5" fill="#8a8a8a" stroke="#2a2a2a" stroke-width="1"/></svg>
<span class="t" style="left:62.00px;top:428.07px;font-size:12.2px;color:#000;">GIS objects</span>
<div class="r" style="left:6px;top:448px;width:175px;height:20px;background:#dcdcdc;"></div>
<div class="r" style="left:6px;top:468px;width:175px;height:1px;background:#7d7d7d;"></div>
<svg style="left:6px;top:448px" width="24" height="20" viewBox="0 0 24 20"><path d="M12 2.500c-3 0-5 2.200-5 5 0 3.500 5 10 5 10s5-6.500 5-10c0-2.800-2-5-5-5z" fill="#222"/><circle cx="12" cy="7.500" r="1.800" fill="#dcdcdc"/></svg>
<svg style="left:37.5px;top:451.5px" width="15" height="13" viewBox="0 0 15 13"><path d="M0.3 1.6 L6 7.2 V12.5 H9 V7.2 L14.7 1.6 Z" fill="#2a2a2a"/><ellipse cx="7.5" cy="1.7" rx="7" ry="1.5" fill="#8a8a8a" stroke="#2a2a2a" stroke-width="1"/></svg>
<span class="t" style="left:62.00px;top:450.07px;font-size:12.2px;color:#000;">Locations</span>
<div class="r" style="left:6px;top:470px;width:175px;height:20px;background:#dcdcdc;"></div>
<div class="r" style="left:6px;top:490px;width:175px;height:1px;background:#7d7d7d;"></div>
<div class="r" style="left:6px;top:470px;width:24px;height:20px;background:#fff;"></div>
<svg style="left:6px;top:470px" width="24" height="20" viewBox="0 0 24 20"><path d="M7 7l11 2.500-3 8z" stroke="#111" stroke-width="1.300" fill="none"/><path d="M5 3l14 14M9 17l-3-1M6 16l1-3" stroke="#c8101a" stroke-width="1.500" fill="none"/></svg>
<svg style="left:37.5px;top:473.5px" width="15" height="13" viewBox="0 0 15 13"><path d="M0.3 1.6 L6 7.2 V12.5 H9 V7.2 L14.7 1.6 Z" fill="#2a2a2a"/><ellipse cx="7.5" cy="1.7" rx="7" ry="1.5" fill="#8a8a8a" stroke="#2a2a2a" stroke-width="1"/></svg>
<span class="t" style="left:62.00px;top:472.07px;font-size:12.2px;color:#000;">Screenlines</span>
<div class="r" style="left:6px;top:492px;width:175px;height:20px;background:#dcdcdc;"></div>
<div class="r" style="left:6px;top:512px;width:175px;height:1px;background:#7d7d7d;"></div>
<div class="r" style="left:6px;top:492px;width:24px;height:20px;background:#fff;"></div>
<svg style="left:6px;top:492px" width="24" height="20" viewBox="0 0 24 20"><path d="M7 4v13" stroke="#111" stroke-width="1.600"/><circle cx="7" cy="4" r="2" fill="#111"/><circle cx="7" cy="17" r="2" fill="#111"/><path d="M8.500 10.500l12-5.500v11z" stroke="#c8101a" stroke-width="1.500" fill="none"/><path d="M13 10.500h8" stroke="#111" stroke-width="1.500" stroke-dasharray="1.500 1"/></svg>
<svg style="left:37.5px;top:495.5px" width="15" height="13" viewBox="0 0 15 13"><path d="M0.3 1.6 L6 7.2 V12.5 H9 V7.2 L14.7 1.6 Z" fill="#2a2a2a"/><ellipse cx="7.5" cy="1.7" rx="7" ry="1.5" fill="#8a8a8a" stroke="#2a2a2a" stroke-width="1"/></svg>
<span class="t" style="left:62.00px;top:494.07px;font-size:12.2px;color:#000;">Count locations</span>
<div class="r" style="left:6px;top:514px;width:175px;height:20px;background:#dcdcdc;"></div>
<div class="r" style="left:6px;top:534px;width:175px;height:1px;background:#7d7d7d;"></div>
<div class="r" style="left:6px;top:514px;width:24px;height:20px;background:#fff;"></div>
<svg style="left:6px;top:514px" width="24" height="20" viewBox="0 0 24 20"><path d="M7 4v13" stroke="#111" stroke-width="1.600"/><circle cx="7" cy="4" r="2" fill="#111"/><circle cx="7" cy="17" r="2" fill="#111"/><path d="M10.500 10.500h11" stroke="#c8101a" stroke-width="1.800" stroke-dasharray="2 1.500"/></svg>
<svg style="left:37.5px;top:517.5px" width="15" height="13" viewBox="0 0 15 13"><path d="M0.3 1.6 L6 7.2 V12.5 H9 V7.2 L14.7 1.6 Z" fill="#2a2a2a"/><ellipse cx="7.5" cy="1.7" rx="7" ry="1.5" fill="#8a8a8a" stroke="#2a2a2a" stroke-width="1"/></svg>
<span class="t" style="left:62.00px;top:516.07px;font-size:12.2px;color:#000;">Detectors</span>
<div class="r" style="left:6px;top:536px;width:175px;height:20px;background:#dcdcdc;"></div>
<div class="r" style="left:6px;top:556px;width:175px;height:1px;background:#7d7d7d;"></div>
<div class="r" style="left:6px;top:536px;width:24px;height:20px;background:#fff;"></div>
<svg style="left:6px;top:536px" width="24" height="20" viewBox="0 0 24 20"><circle cx="12" cy="10" r="7" stroke="#c8101a" stroke-width="1.700" fill="#fff"/><text x="12" y="14.500" font-size="12" font-weight="bold" text-anchor="middle" font-family="Liberation Sans" fill="#111">$</text></svg>
<svg style="left:37.5px;top:539.5px" width="15" height="13" viewBox="0 0 15 13"><path d="M0.3 1.6 L6 7.2 V12.5 H9 V7.2 L14.7 1.6 Z" fill="#2a2a2a"/><ellipse cx="7.5" cy="1.7" rx="7" ry="1.5" fill="#8a8a8a" stroke="#2a2a2a" stroke-width="1"/></svg>
<span class="t" style="left:62.00px;top:538.07px;font-size:12.2px;color:#000;">Restr. traffic areas</span>
<div class="r" style="left:6px;top:558px;width:175px;height:20px;background:#dcdcdc;"></div>
<div class="r" style="left:6px;top:578px;width:175px;height:1px;background:#7d7d7d;"></div>
<div class="r" style="left:6px;top:558px;width:24px;height:20px;background:#fff;"></div>
<svg style="left:6px;top:558px" width="24" height="20" viewBox="0 0 24 20"><path d="M2 10h20" stroke="#c8101a" stroke-width="1.500"/><circle cx="12" cy="10" r="6.200" stroke="#c8101a" stroke-width="1.500" fill="#fff"/><circle cx="12" cy="10" r="3.400" fill="#c8101a"/></svg>
<svg style="left:37.5px;top:561.5px" width="15" height="13" viewBox="0 0 15 13"><path d="M0.3 1.6 L6 7.2 V12.5 H9 V7.2 L14.7 1.6 Z" fill="#2a2a2a"/><ellipse cx="7.5" cy="1.7" rx="7" ry="1.5" fill="#8a8a8a" stroke="#2a2a2a" stroke-width="1"/></svg>
<span class="t" style="left:62.00px;top:560.07px;font-size:12.2px;color:#000;">Sharing stations</span>
<div class="r" style="left:6px;top:592.5px;width:175px;height:20px;background:#dcdcdc;"></div>
<div class="r" style="left:6px;top:612.5px;width:175px;height:1px;background:#7d7d7d;"></div>
<svg style="left:6px;top:592.5px" width="24" height="20" viewBox="0 0 24 20"><path d="M3.500 3v15M3.500 3.500h6v6h-6" stroke="#111" stroke-width="1.300" fill="none"/><rect x="12.500" y="6.500" width="9" height="11" stroke="#111" stroke-width="1.300" fill="none"/><path d="M12.500 10h9M12.500 14h9M17 6.500v11" stroke="#111" stroke-width="1.200"/></svg>
<svg style="left:37.5px;top:596.0px" width="15" height="13" viewBox="0 0 15 13"><path d="M0.3 1.6 L6 7.2 V12.5 H9 V7.2 L14.7 1.6 Z" fill="#2a2a2a"/><ellipse cx="7.5" cy="1.7" rx="7" ry="1.5" fill="#8a8a8a" stroke="#2a2a2a" stroke-width="1"/></svg>
<span class="t" style="left:62.00px;top:594.57px;font-size:12.2px;color:#000;">Stop points</span>
<div class="r" style="left:6px;top:614.5px;width:175px;height:20px;background:#dcdcdc;"></div>
<div class="r" style="left:6px;top:634.5px;width:175px;height:1px;background:#7d7d7d;"></div>
<svg style="left:6px;top:614.5px" width="24" height="20" viewBox="0 0 24 20"><rect x="2.600" y="3.600" width="19" height="14" stroke="#111" stroke-width="1.200" fill="none"/><path d="M6 16v-10h4.500v4.500h-4.500M13.500 16v-10h4.500v4.500h-4.500" stroke="#111" stroke-width="1.500" fill="none"/></svg>
<svg style="left:37.5px;top:618.0px" width="15" height="13" viewBox="0 0 15 13"><path d="M0.3 1.6 L6 7.2 V12.5 H9 V7.2 L14.7 1.6 Z" fill="#2a2a2a"/><ellipse cx="7.5" cy="1.7" rx="7" ry="1.5" fill="#8a8a8a" stroke="#2a2a2a" stroke-width="1"/></svg>
<span class="t" style="left:62.00px;top:616.57px;font-size:12.2px;color:#000;">Stop areas</span>
<div class="r" style="left:6px;top:591px;width:175px;height:1px;background:#9a9a9a;"></div>
<div class="r" style="left:2px;top:635px;width:201px;height:6px;background:#fff;"></div>
<div class="r" style="left:2px;top:641px;width:201px;height:26px;background:#2f4067;"></div>
<div class="r" style="left:90px;top:641px;width:88px;height:20px;background:#fff;border-radius:0 0 3px 3px"></div>
<span class="t" style="left:26.00px;top:642.84px;font-size:12px;color:#fff;letter-spacing:-0.043px;">Matrices</span>
<span class="t" style="left:114.00px;top:642.84px;font-size:12px;color:#000;letter-spacing:0.141px;">Network</span>
<svg style="left:165px;top:646px" width="8" height="8"><path d="M1 1l6 6M7 1l-6 6" stroke="#6b5a3a" stroke-width="1.2" fill="none"/></svg>
<svg style="left:6px;top:642.5px" width="16" height="16" viewBox="0 0 16 16"><rect x=".500" y=".500" width="15" height="15" fill="#e8e8e8" stroke="#2f7fd0"/><rect x=".500" y=".500" width="15" height="3" fill="#2f7fd0"/><rect x=".500" y=".500" width="3" height="15" fill="#2f7fd0"/><path d="M3.500 6h12M3.500 8.500h12M3.500 11h12M3.500 13.500h12M6 3.500v12M8.500 3.500v12M11 3.500v12M13.500 3.500v12" stroke="#aaa" stroke-width=".7"/></svg>
<svg style="left:94px;top:643px" width="16" height="16" viewBox="0 0 16 16"><path d="M1 8h6M7 1v7M7 8l7 7" stroke="#000" stroke-width="1.500" fill="none"/><circle cx="7" cy="8" r="2.600" fill="#e02020"/></svg>
<div class="r" style="left:2px;top:667px;width:201px;height:22px;background:linear-gradient(#fdf3cf,#fbe3a0);border-radius:3px 3px 0 0"></div>
<span class="t" style="left:6.00px;top:670.84px;font-size:12px;color:#000;letter-spacing:-0.113px;">Quick view (Nodes)</span>
<svg style="left:171px;top:672px" width="10" height="12"><path d="M3 1h4M3.5 1v5M6.5 1v5M1.5 6.5h7M5 7v4" stroke="#333" stroke-width="1.2" fill="none"/></svg>
<svg style="left:189px;top:674px" width="8" height="8"><path d="M1 1l6 6M7 1l-6 6" stroke="#333" stroke-width="1.2" fill="none"/></svg>
<div class="r" style="left:2px;top:688.5px;width:201px;height:28.5px;background:#9eacc6;"></div>
<div class="r" style="left:2px;top:717px;width:201px;height:280px;background:#fff;"></div>
<div class="r" style="left:2px;top:690px;width:3px;height:307px;background:#a4a4a4;"></div>
<div class="r" style="left:4px;top:690px;width:1px;height:305px;background:#6e6e6e;"></div>
<div class="grp" style="left:6px;top:691px;width:131px;height:25px"></div>
<div class="r" style="left:10px;top:696px;width:2px;height:2px;background:#4a5878;"></div><div class="r" style="left:10px;top:700px;width:2px;height:2px;background:#4a5878;"></div><div class="r" style="left:10px;top:704px;width:2px;height:2px;background:#4a5878;"></div><div class="r" style="left:10px;top:708px;width:2px;height:2px;background:#4a5878;"></div>
<svg style="left:17px;top:695px" width="16" height="16" viewBox="0 0 16 16"><rect x=".500" y="2.500" width="12" height="10" fill="#fff" stroke="#2f7fd0" stroke-width="1.200"/><circle cx="5.500" cy="6" r="2" fill="#bfe0f4" stroke="#2f5fb0" stroke-width=".8"/><path d="M7 8l6 5.500" stroke="#d09020" stroke-width="2.600"/></svg>
<div class="r" style="left:38px;top:694px;width:1px;height:19px;background:#6b7894"></div><div class="r" style="left:39px;top:694px;width:1px;height:19px;background:#d4dbe8"></div>
<svg style="left:44px;top:695px" width="16" height="16" viewBox="0 0 16 16"><rect x="1.500" y="1.500" width="8" height="10" fill="#dfe3ea" stroke="#8e97a8"/><rect x="6.500" y="5.500" width="8" height="10" fill="#dfe3ea" stroke="#8e97a8"/><path d="M8 8.500h5M8 10.500h5M8 12.500h5" stroke="#8e97a8" stroke-width=".8"/></svg>
<svg style="left:66px;top:695px" width="16" height="16" viewBox="0 0 16 16"><rect x="1.500" y="3" width="10" height="12" fill="#c9ced8" stroke="#8e97a8"/><rect x="4" y="1.500" width="5" height="3" fill="#dfe3ea" stroke="#8e97a8" stroke-width=".8"/><rect x="7.500" y="8.500" width="7" height="7" fill="#dfe3ea" stroke="#8e97a8"/><path d="M9 11h4M9 13h4" stroke="#8e97a8" stroke-width=".8"/></svg>
<div class="r" style="left:88px;top:694px;width:1px;height:19px;background:#6b7894"></div><div class="r" style="left:89px;top:694px;width:1px;height:19px;background:#d4dbe8"></div>
<svg style="left:94px;top:695px" width="16" height="16" viewBox="0 0 16 16"><path d="M1 5h5l1 1.500h6v8h-12z" fill="#f3cf3f" stroke="#b08a12" stroke-width=".8"/><path d="M1.500 8h12v6h-12z" fill="#f9e27a"/><path d="M8 1.500c3 0 5 1 5 4" stroke="#2f6fc0" stroke-width="1.500" fill="none"/><path d="M10.500 5h5l-2.500 3.500z" fill="#2f6fc0"/></svg>
<svg style="left:117px;top:695px" width="16" height="16" viewBox="0 0 16 16"><path d="M1.500 1.500h12l1 1v12h-13z" fill="#3f8fd8" stroke="#1d5fa8"/><rect x="4" y="2" width="8" height="6" fill="#dfeaf6"/><rect x="4.500" y="10" width="7" height="4.500" fill="#e8e8e8" stroke="#1d5fa8" stroke-width=".6"/><rect x="6" y="11" width="2" height="3" fill="#3f8fd8"/></svg>
<div class="r" style="left:6px;top:717px;width:194px;height:276px;background:#fff;border:1px solid #8a8a8a"></div>
<div class="r" style="left:7px;top:718px;width:73px;height:275px;background:#f0f0f0;"></div>
<div class="r" style="left:7px;top:718px;width:72px;height:15px;background:#f0f0f0;border-right:1px solid #8a8a8a;border-bottom:1px solid #8a8a8a"></div>
<div class="r" style="left:81px;top:718px;width:118px;height:15px;background:#f0f0f0;border-bottom:1px solid #8a8a8a"></div>
<div class="r" style="left:7px;top:734px;width:73px;height:16px;background:#f0f0f0;border-right:1px solid #7a7a7a;border-bottom:1px solid #7a7a7a;border-top:1px solid #fff"></div>
<div class="r" style="left:80px;top:749px;width:119px;height:1px;background:#d8d8d8;"></div>
<span class="t" style="left:11.00px;top:734.19px;font-size:11px;color:#000;letter-spacing:-0.531px;">No</span>
<div class="r" style="left:7px;top:750px;width:73px;height:16px;background:#f0f0f0;border-right:1px solid #7a7a7a;border-bottom:1px solid #7a7a7a;border-top:1px solid #fff"></div>
<div class="r" style="left:80px;top:765px;width:119px;height:1px;background:#d8d8d8;"></div>
<span class="t" style="left:11.00px;top:750.19px;font-size:11px;color:#000;letter-spacing:-0.324px;">Code</span>
<div class="r" style="left:7px;top:766px;width:73px;height:16px;background:#f0f0f0;border-right:1px solid #7a7a7a;border-bottom:1px solid #7a7a7a;border-top:1px solid #fff"></div>
<div class="r" style="left:80px;top:781px;width:119px;height:1px;background:#d8d8d8;"></div>
<span class="t" style="left:11.00px;top:766.19px;font-size:11px;color:#000;letter-spacing:-0.336px;">Name</span>
<div class="r" style="left:7px;top:782px;width:73px;height:16px;background:#f0f0f0;border-right:1px solid #7a7a7a;border-bottom:1px solid #7a7a7a;border-top:1px solid #fff"></div>
<div class="r" style="left:80px;top:797px;width:119px;height:1px;background:#d8d8d8;"></div>
<span class="t" style="left:11.00px;top:782.19px;font-size:11px;color:#000;letter-spacing:-0.301px;">ControlType</span>
<div class="r" style="left:7px;top:798px;width:73px;height:16px;background:#f0f0f0;border-right:1px solid #7a7a7a;border-bottom:1px solid #7a7a7a;border-top:1px solid #fff"></div>
<div class="r" style="left:80px;top:813px;width:119px;height:1px;background:#d8d8d8;"></div>
<span class="t" style="left:11.00px;top:798.19px;font-size:11px;color:#000;letter-spacing:-0.483px;">CapPrT</span>
<div class="r" style="left:7px;top:814px;width:73px;height:16px;background:#f0f0f0;border-right:1px solid #7a7a7a;border-bottom:1px solid #7a7a7a;border-top:1px solid #fff"></div>
<div class="r" style="left:80px;top:829px;width:119px;height:1px;background:#d8d8d8;"></div>
<span class="t" style="left:11.00px;top:814.19px;font-size:11px;color:#000;letter-spacing:-0.379px;">t0PrT</span>
<div class="r" style="left:7px;top:830px;width:73px;height:16px;background:#f0f0f0;border-right:1px solid #7a7a7a;border-bottom:1px solid #7a7a7a;border-top:1px solid #fff"></div>
<div class="r" style="left:80px;top:845px;width:119px;height:1px;background:#d8d8d8;"></div>
<span class="t" style="left:11.00px;top:830.19px;font-size:11px;color:#000;letter-spacing:-0.169px;">VolPrT</span>
<div class="r" style="left:2px;top:997px;width:205px;height:22px;background:#2f4067;"></div>
<div class="r" style="left:2px;top:997px;width:147px;height:20px;background:#fff;border-radius:0 0 3px 3px"></div>
<span class="t" style="left:26.00px;top:998.84px;font-size:12px;color:#000;letter-spacing:-0.113px;">Quick view (Nodes)</span>
<svg style="left:135px;top:1002px" width="8" height="8"><path d="M1 1l6 6M7 1l-6 6" stroke="#6b5a3a" stroke-width="1.2" fill="none"/></svg>
<svg style="left:6px;top:999px" width="16" height="16" viewBox="0 0 16 16"><rect x=".500" y="1.500" width="15" height="14" fill="#e8e8e8" stroke="#aaa"/><rect x=".500" y="1.500" width="15" height="2.500" fill="#2f7fd0"/><ellipse cx="9" cy="5.500" rx="5" ry="3.200" fill="#fff" stroke="#6fa8e0"/><circle cx="9" cy="5.500" r="1.800" fill="#1e3a68"/><path d="M2 10.500h4M8 10.500h6M2 13h4M8 13h6" stroke="#999" stroke-width="1.200"/></svg>
<svg style="left:154px;top:999px" width="14" height="16" viewBox="0 0 14 16"><path d="M5 0h4v3.500h2.500l-4.500 4-4.500-4h2.500z" fill="#2f7fe0"/><circle cx="7" cy="11" r="4.200" fill="#e01010"/></svg>
<svg style="left:171px;top:1001px" width="32" height="12"><path d="M1.500 1v10" stroke="#dfe6f2" stroke-width="1.300"/><path d="M11 1.500v9l-6-4.500z" fill="none" stroke="#dfe6f2" stroke-width="1.200"/><path d="M21 1l7 5-7 5z" fill="#dfe6f2"/></svg>
<div class="r" style="left:207px;top:98px;width:790px;height:921px;background:#9eacc6;"></div>
<div class="r" style="left:208px;top:98px;width:787px;height:1px;background:#77829b;"></div>
<div class="grp" style="left:212px;top:101px;width:50px;height:25px"></div>
<div class="r" style="left:252px;top:101px;width:10px;height:25px;background:#d5dcea;border-radius:0 3px 3px 0"></div>
<div class="grp" style="left:265px;top:101px;width:457px;height:25px"></div>
<div class="grp" style="left:726px;top:101px;width:268px;height:25px"></div>
<div class="r" style="left:216px;top:106px;width:2px;height:2px;background:#4a5878;"></div><div class="r" style="left:216px;top:110px;width:2px;height:2px;background:#4a5878;"></div><div class="r" style="left:216px;top:114px;width:2px;height:2px;background:#4a5878;"></div><div class="r" style="left:216px;top:118px;width:2px;height:2px;background:#4a5878;"></div>
<div class="r" style="left:268px;top:106px;width:2px;height:2px;background:#4a5878;"></div><div class="r" style="left:268px;top:110px;width:2px;height:2px;background:#4a5878;"></div><div class="r" style="left:268px;top:114px;width:2px;height:2px;background:#4a5878;"></div><div class="r" style="left:268px;top:118px;width:2px;height:2px;background:#4a5878;"></div>
<div class="r" style="left:730px;top:106px;width:2px;height:2px;background:#4a5878;"></div><div class="r" style="left:730px;top:110px;width:2px;height:2px;background:#4a5878;"></div><div class="r" style="left:730px;top:114px;width:2px;height:2px;background:#4a5878;"></div><div class="r" style="left:730px;top:118px;width:2px;height:2px;background:#4a5878;"></div>
<svg style="left:225px;top:107px" width="11" height="11" viewBox="0 0 16 16"><path d="M6.500 1.500h3v5h5v3h-5v5h-3v-5h-5v-3h5z" fill="#fff" stroke="#000" stroke-width="1"/></svg>
<svg style="left:254px;top:105px" width="7" height="5"><path d="M0 0l2.500 2.500-2.500 2.500zM3.500 0l2.500 2.500-2.500 2.500z" fill="#1e2a44"/></svg>
<div class="r" style="left:273px;top:102px;width:22px;height:23px;background:#fdebb5;border:1px solid #e5b84f"></div>
<svg style="left:276px;top:104.5px" width="16" height="16" viewBox="0 0 16 16"><circle cx="8" cy="8" r="7.500" fill="#2f6fd0"/><path d="M3 4c2-2 5-3 7-2.500-1 1.500-3 1.500-3 3.500s-2 1-2 3 2 2 2 4c-2 0-4-2-5-4s0-3 1-4zM10 8c2-1 4 0 5 1 0 2-2 4-4 5-1-2-2-4-1-6z" fill="#2fa83a"/><path d="M3 4c2-2 5-3 7-2.500" stroke="#8fd0ff" stroke-width=".6" fill="none"/></svg>
<svg style="left:299px;top:111.5px" width="5" height="3"><path d="M0 0h5l-2.500 3z" fill="#1e2a44"/></svg>
<svg style="left:309px;top:104.5px" width="16" height="16" viewBox="0 0 16 16"><path d="M8 .5c-3.300 0-5.500 2.400-5.500 5.400 0 4 5.500 9.600 5.500 9.600s5.500-5.600 5.500-9.600c0-3-2.200-5.400-5.500-5.400z" fill="#2f7fe0"/><circle cx="8" cy="5.800" r="2.200" fill="#0f4fa8"/></svg>
<svg style="left:331px;top:104.5px" width="16" height="16" viewBox="0 0 16 16"><path d="M2 5l1.500-4h2l1 4v9h-5.500v-6zM9.500 5l1-4h2l1.500 4 1 3v6h-5.500z" fill="#27457e"/><rect x="6.500" y="6" width="3" height="4" fill="#27457e"/><path d="M2.500 9v4M11 9v4" stroke="#6f8fc8" stroke-width="1.200"/></svg>
<svg style="left:353px;top:104.5px" width="16" height="16" viewBox="0 0 16 16"><rect x=".500" y=".500" width="15" height="15" fill="#fff" stroke="#2f6fd0"/><rect x=".500" y=".500" width="15" height="2" fill="#9fc0ea"/><rect x="3" y="4.500" width="2" height="2" fill="#e02020"/><rect x="3" y="8" width="2" height="2" fill="#3f6fd0"/><rect x="3" y="11.500" width="2" height="2" fill="#108a20"/><path d="M6.500 5.500h7M6.500 9h7M6.500 12.500h7" stroke="#c8c8c8" stroke-width="1.800"/></svg>
<svg style="left:375px;top:104.5px" width="16" height="16" viewBox="0 0 16 16"><path d="M3 2h12l-2 3.500h-12z" fill="#2fa83a" stroke="#999" stroke-width=".5"/><path d="M3 6.500h12l-2 3.500h-12z" fill="#e03020" stroke="#999" stroke-width=".5"/><path d="M3 11h12l-2 3.500h-12z" fill="#5fc0f0" stroke="#999" stroke-width=".5"/></svg>
<svg style="left:397.5px;top:104.5px" width="16" height="16" viewBox="0 0 16 16"><path d="M1 1.500h13l-5 5.500h-3z" fill="none" stroke="#e02020" stroke-width="1.600"/><path d="M7 4l7.500 7.500h-3.500l2 3.500-1.500 1-2-3.500-2.500 2.500z" fill="#fff" stroke="#000" stroke-width="1"/></svg>
<svg style="left:419px;top:104.5px" width="16" height="16" viewBox="0 0 16 16"><rect x="1.500" y="1.500" width="4.500" height="6" fill="#fff" stroke="#2f5fb0" stroke-width="1.400"/><path d="M3.500 3.500v2" stroke="#2f5fb0" stroke-width="1.400"/><path d="M4 8v7M4 8.500l9 5.500M6 5.500l8-2" stroke="#2f5fb0" stroke-width="1.400" fill="none"/><circle cx="4" cy="14.500" r="1.500" fill="#2f5fb0"/><circle cx="13.500" cy="14" r="1.500" fill="#3f8fe0"/><circle cx="14" cy="3.500" r="1.500" fill="#3f8fe0"/></svg>
<svg style="left:441px;top:104.5px" width="16" height="16" viewBox="0 0 16 16"><path d="M1.500 1.500l12 3-3 5-8 4z" fill="none" stroke="#e02020" stroke-width="1.300"/><rect x=".500" y=".500" width="2.500" height="2.500" fill="#1e3a68"/><rect x="12" y="3" width="2.500" height="2.500" fill="#1e3a68"/><rect x="1" y="12" width="2.500" height="2.500" fill="#1e3a68"/><path d="M8 6l7 7h-3.300l1.800 3-1.500.800-1.800-3-2.200 2.200z" fill="#fff" stroke="#000" stroke-width="1"/></svg>
<svg style="left:463px;top:104.5px" width="16" height="16" viewBox="0 0 16 16"><rect x="3.500" y="1.500" width="9" height="5" fill="#fff" stroke="#999"/><rect x="1" y="6" width="14" height="6" rx="1" fill="#c9ced8" stroke="#8e97a8"/><rect x="3.500" y="10" width="9" height="4.500" fill="#8fc0f0" stroke="#5f8fc0"/><rect x="4.500" y="12" width="7" height="2" fill="#fff"/></svg>
<svg style="left:485px;top:111.5px" width="5" height="3"><path d="M0 0h5l-2.500 3z" fill="#1e2a44"/></svg>
<svg style="left:497px;top:104.5px" width="16" height="16" viewBox="0 0 16 16"><rect x="1" y="4" width="14" height="10" rx="1" fill="#c9ced8" stroke="#6f7f9f"/><rect x="9.500" y="5.500" width="5" height="8" fill="#eef2f8" stroke="#6f7f9f" stroke-width=".8"/><circle cx="6" cy="9" r="3" fill="#3f7fd0" stroke="#1e3a68"/><rect x="2" y="2.500" width="4" height="1.500" fill="#6f7f9f"/></svg>
<svg style="left:518px;top:111.5px" width="5" height="3"><path d="M0 0h5l-2.500 3z" fill="#1e2a44"/></svg>
<span class="t" style="left:530.00px;top:105.34px;font-size:12px;color:#1b2a4a;letter-spacing:-0.155px;">Graphic parameters files</span>
<svg style="left:664px;top:111.5px" width="5" height="3"><path d="M0 0h5l-2.500 3z" fill="#1e2a44"/></svg>
<div class="r" style="left:675px;top:103px;width:1px;height:19px;background:#6b7894"></div><div class="r" style="left:676px;top:103px;width:1px;height:19px;background:#d4dbe8"></div>
<svg style="left:681px;top:104.5px" width="16" height="16" viewBox="0 0 16 16"><rect x="1" y="3" width="11" height="11.500" fill="#f3cf3f" stroke="#b08a12"/><rect x="4" y="1.500" width="5" height="3" fill="#e8d48a" stroke="#b08a12" stroke-width=".8"/><path d="M6 8h5v-2.500l4.500 4-4.500 4v-2.500h-5z" fill="#cfe8fa" stroke="#1f5fa8" stroke-width="1"/></svg>
<svg style="left:702px;top:104.5px" width="16" height="16" viewBox="0 0 16 16"><rect x="4" y="3" width="11" height="11.500" fill="#f3cf3f" stroke="#b08a12"/><rect x="7" y="1.500" width="5" height="3" fill="#e8d48a" stroke="#b08a12" stroke-width=".8"/><path d="M.500 8h5v-2.500l4.500 4-4.500 4v-2.500h-5z" fill="#cfe8fa" stroke="#1f5fa8" stroke-width="1"/></svg>
<svg style="left:736.5px;top:104.5px" width="16" height="16" viewBox="0 0 16 16"><rect x="1" y="1" width="13" height="13" fill="none" stroke="#1e3a68" stroke-width="1" stroke-dasharray="2 1.500"/><circle cx="7" cy="7" r="3.800" fill="#dfeefa" stroke="#5f7fa8" stroke-width="1.200"/><path d="M5 7h4M7 5v4" stroke="#2f5fb0" stroke-width="1.200"/><path d="M10 10l5 5" stroke="#d09020" stroke-width="2.500"/></svg>
<svg style="left:759px;top:104.5px" width="16" height="16" viewBox="0 0 16 16"><circle cx="6" cy="6" r="4.500" fill="#dfeefa" stroke="#8f9fb8" stroke-width="1.300"/><path d="M3.500 6h5" stroke="#2f5fb0" stroke-width="1.500"/><path d="M9.500 9.500l5.500 5.500" stroke="#d09020" stroke-width="2.800"/></svg>
<svg style="left:781px;top:104.5px" width="16" height="16" viewBox="0 0 16 16"><path d="M1 8l7-6.500v4h7v5h-7v4z" fill="#e8f2fb" stroke="#2f6fc0" stroke-width="1.300"/></svg>
<svg style="left:803px;top:104.5px" width="16" height="16" viewBox="0 0 16 16"><path d="M15 8l-7-6.500v4h-7v5h7v4z" fill="#d8dce4" stroke="#8e97a8" stroke-width="1.300"/></svg>
<svg style="left:825px;top:104.5px" width="16" height="16" viewBox="0 0 16 16"><rect x=".500" y=".500" width="15" height="15" fill="#cfe4f8" stroke="#2f8fd0"/><rect x=".500" y=".500" width="15" height="2.500" fill="#2f8fd0"/><path d="M2 9.500h12" stroke="#1e3a68" stroke-width="1.500"/><path d="M1.500 9.500l3-2.500v5zM14.500 9.500l-3-2.500v5z" fill="#1e3a68"/></svg>
<svg style="left:847px;top:111.5px" width="5" height="3"><path d="M0 0h5l-2.500 3z" fill="#1e2a44"/></svg>
<svg style="left:858px;top:104.5px" width="16" height="16" viewBox="0 0 16 16"><path d="M4 15c-1.500-2-3-4.500-3-5.500s1-1.500 2-.500l1 1v-7c0-1.200 1.800-1.200 1.800 0v-1.500c0-1.200 1.800-1.200 1.800 0v.500c0-1.200 1.800-1.200 1.800 0v1c0-1.200 1.800-1.200 1.800 0v7c0 2-1 3.500-1.500 5z" fill="#eef4fb" stroke="#5f8fc8" stroke-width="1"/><path d="M5.800 3v5M7.600 2v6M9.400 2.500v5.500" stroke="#5f8fc8" stroke-width=".8"/></svg>
<svg style="left:880px;top:104.5px" width="16" height="16" viewBox="0 0 16 16"><path d="M1 11l10-10 4 4-10 10z" fill="#f0b040" stroke="#a06a10"/><path d="M4 10l1.500 1.500M6 8l1.500 1.500M8 6l1.500 1.500M10 4l1.500 1.500" stroke="#6a4400" stroke-width="1"/></svg>
<svg style="left:902px;top:104.5px" width="16" height="16" viewBox="0 0 16 16"><rect x=".500" y="2.500" width="11" height="12" fill="#fff" stroke="#5f8fc8"/><path d="M3.500 13l1-3.500 8-8 2.500 2.500-8 8z" fill="#f08020" stroke="#a05010" stroke-width=".8"/><path d="M3.500 13l1-3.500 2.500 2.500z" fill="#f8e0b0"/></svg>
<div class="r" style="left:923px;top:103px;width:1px;height:19px;background:#6b7894"></div><div class="r" style="left:924px;top:103px;width:1px;height:19px;background:#d4dbe8"></div>
<svg style="left:930px;top:104.5px" width="16" height="16" viewBox="0 0 16 16"><rect x=".500" y=".500" width="15" height="15" rx="2" fill="#f0a0a0" stroke="#d03030"/><circle cx="8" cy="8" r="5" fill="#e02020"/></svg>
<div class="r" style="left:949px;top:102px;width:22px;height:23px;background:#fdebb5;border:1px solid #e5b84f"></div>
<svg style="left:952px;top:104.5px" width="16" height="16" viewBox="0 0 16 16"><rect x=".500" y=".500" width="15" height="15" rx="1" fill="#fff" stroke="#d03030" stroke-width="1.400"/><circle cx="8" cy="8" r="3" fill="#2f5fb0"/><path d="M8 1.500l2 2.500h-4zM8 14.500l2-2.500h-4zM1.500 8l2.500-2v4zM14.500 8l-2.500-2v4z" fill="#1e3a68"/><path d="M3 3l2 2M13 3l-2 2M3 13l2-2M13 13l-2-2" stroke="#1e3a68" stroke-width="1.200"/></svg>
<svg style="left:974px;top:104.5px" width="16" height="16" viewBox="0 0 16 16"><rect x=".500" y=".500" width="15" height="15" rx="1" fill="#8fc8f0" stroke="#d03030" stroke-width="1.400"/><circle cx="9" cy="7" r="4" fill="#fff" stroke="#555" stroke-width="1.200"/><path d="M6 10l-3.500 3.500" stroke="#c08020" stroke-width="2.200"/></svg>
<div class="r" style="left:207px;top:127px;width:790px;height:892px;background:#f4f4f4;"></div>
<div class="r" style="left:207px;top:99px;width:4px;height:917px;background:#8e8e8e;"></div>
<div class="r" style="left:209px;top:99px;width:1px;height:917px;background:#6a6a6a;"></div>
<div class="r" style="left:207px;top:127px;width:790px;height:1px;background:#7b7b7b;"></div>
<svg style="left:211px;top:128px" width="765" height="870" viewBox="211 128 765 870"><g clip-path="url(#mc)"><clipPath id="mc"><rect x="211" y="128" width="765" height="870"/></clipPath><rect x="211" y="128" width="765" height="870" fill="#212121"/>
<path d="M777.0 128.0 L781.0 153.0 L795.0 170.0 L796.0 200.0 L792.0 230.0 L785.0 253.0 L785.0 294.0 L797.0 327.0 L800.0 351.0 L808.0 380.0 L815.0 410.0 L816.0 452.0 L821.0 493.0 L827.0 527.0 L835.0 560.0 L843.0 580.0 L852.0 620.0 L861.0 661.0 L867.0 700.0 L878.4 757.7 L888.0 780.0 L895.8 795.0 L901.5 829.8 L910.0 873.0 L924.6 916.0 L939.0 959.6 L947.7 997.0 L976.0 997.0 L976.0 128.0Z" fill="#0b0b0b"/>
<path d="M606.0 481.0 C607.7 477.3 615.0 471.5 620.0 470.0 C625.0 468.5 632.7 470.3 636.0 472.0 C639.3 473.7 638.8 476.0 640.0 480.0 C641.2 484.0 641.3 491.2 643.0 496.0 C644.7 500.8 647.3 504.8 650.0 509.0 C652.7 513.2 656.7 517.3 659.0 521.0 C661.3 524.7 663.8 527.5 664.0 531.0 C664.2 534.5 662.3 538.5 660.0 542.0 C657.7 545.5 651.3 548.7 650.0 552.0 C648.7 555.3 651.2 557.3 652.0 562.0 C652.8 566.7 655.2 573.7 655.0 580.0 C654.8 586.3 651.0 591.7 651.0 600.0 C651.0 608.3 654.5 620.0 655.0 630.0 C655.5 640.0 653.7 651.7 654.0 660.0 C654.3 668.3 654.0 672.0 657.0 680.0 C660.0 688.0 666.8 701.3 672.0 708.0 C677.2 714.7 681.8 716.0 688.0 720.0 C694.2 724.0 708.0 726.3 709.0 732.0 C710.0 737.7 698.5 747.3 694.0 754.0 C689.5 760.7 683.0 764.8 682.0 772.0 C681.0 779.2 684.0 789.8 688.0 797.0 C692.0 804.2 702.7 805.8 706.0 815.0 C709.3 824.2 705.0 842.2 708.0 852.0 C711.0 861.8 721.3 867.3 724.0 874.0 C726.7 880.7 725.5 886.3 724.0 892.0 C722.5 897.7 718.0 902.3 715.0 908.0 C712.0 913.7 711.0 921.5 706.0 926.0 C701.0 930.5 693.2 933.0 685.0 935.0 C676.8 937.0 662.2 935.3 657.0 938.0 C651.8 940.7 653.5 946.3 654.0 951.0 C654.5 955.7 656.5 962.0 660.0 966.0 C663.5 970.0 671.3 969.8 675.0 975.0 C678.7 980.2 683.8 993.3 682.0 997.0 C680.2 1000.7 667.2 998.5 664.0 997.0 C660.8 995.5 665.7 991.7 663.0 988.0 C660.3 984.3 652.2 980.2 648.0 975.0 C643.8 969.8 639.3 962.7 638.0 957.0 C636.7 951.3 637.8 945.7 640.0 941.0 C642.2 936.3 644.7 932.0 651.0 929.0 C657.3 926.0 670.8 926.5 678.0 923.0 C685.2 919.5 690.3 915.2 694.0 908.0 C697.7 900.8 701.5 889.3 700.0 880.0 C698.5 870.7 689.7 859.7 685.0 852.0 C680.3 844.3 675.3 842.2 672.0 834.0 C668.7 825.8 666.8 813.3 665.0 803.0 C663.2 792.7 660.8 781.2 661.0 772.0 C661.2 762.8 667.7 755.2 666.0 748.0 C664.3 740.8 657.7 732.7 651.0 729.0 C644.3 725.3 631.2 729.0 626.0 726.0 C620.8 723.0 623.0 718.7 620.0 711.0 C617.0 703.3 610.3 690.2 608.0 680.0 C605.7 669.8 606.0 660.0 606.0 650.0 C606.0 640.0 607.0 630.0 608.0 620.0 C609.0 610.0 611.3 599.2 612.0 590.0 C612.7 580.8 610.2 571.3 612.0 565.0 C613.8 558.7 621.0 555.5 623.0 552.0 C625.0 548.5 622.8 546.3 624.0 544.0 C625.2 541.7 628.2 541.5 630.0 538.0 C631.8 534.5 637.3 526.8 635.0 523.0 C632.7 519.2 619.7 517.3 616.0 515.0 C612.3 512.7 614.0 512.8 613.0 509.0 C612.0 505.2 611.2 496.7 610.0 492.0 C608.8 487.3 604.3 484.7 606.0 481.0Z" fill="#0b0b0b"/>
<path d="M640.0 470.0 C639.0 467.2 644.3 460.0 646.0 455.0 C647.7 450.0 649.3 445.8 650.0 440.0 C650.7 434.2 650.2 426.7 650.0 420.0 C649.8 413.3 648.7 405.0 649.0 400.0 C649.3 395.0 649.3 392.3 652.0 390.0 C654.7 387.7 660.0 386.3 665.0 386.0 C670.0 385.7 676.5 386.0 682.0 388.0 C687.5 390.0 694.0 394.0 698.0 398.0 C702.0 402.0 703.7 411.0 706.0 412.0 C708.3 413.0 707.0 406.2 712.0 404.0 C717.0 401.8 728.0 400.5 736.0 399.0 C744.0 397.5 751.0 396.5 760.0 395.0 C769.0 393.5 781.2 389.5 790.0 390.0 C798.8 390.5 809.2 395.2 813.0 398.0 C816.8 400.8 816.8 406.8 813.0 407.0 C809.2 407.2 798.8 399.5 790.0 399.0 C781.2 398.5 769.0 402.3 760.0 404.0 C751.0 405.7 743.3 407.7 736.0 409.0 C728.7 410.3 721.0 409.5 716.0 412.0 C711.0 414.5 708.7 418.7 706.0 424.0 C703.3 429.3 702.0 444.7 700.0 444.0 C698.0 443.3 695.7 426.0 694.0 420.0 C692.3 414.0 692.3 411.3 690.0 408.0 C687.7 404.7 683.7 401.7 680.0 400.0 C676.3 398.3 671.0 397.3 668.0 398.0 C665.0 398.7 662.7 399.5 662.0 404.0 C661.3 408.5 663.3 418.2 664.0 425.0 C664.7 431.8 666.7 439.5 666.0 445.0 C665.3 450.5 662.3 453.5 660.0 458.0 C657.7 462.5 655.3 470.0 652.0 472.0 C648.7 474.0 641.0 472.8 640.0 470.0Z" fill="#0b0b0b"/>
<path d="M615.0 380.0 C616.7 377.7 623.8 377.0 628.0 378.0 C632.2 379.0 638.3 382.7 640.0 386.0 C641.7 389.3 640.0 395.7 638.0 398.0 C636.0 400.3 631.3 401.0 628.0 400.0 C624.7 399.0 620.2 395.3 618.0 392.0 C615.8 388.7 613.3 382.3 615.0 380.0Z" fill="#0b0b0b"/>
<path d="M655.0 400.0 C652.5 398.3 645.5 392.0 640.0 390.0 C634.5 388.0 627.3 390.0 622.0 388.0 C616.7 386.0 612.3 379.3 608.0 378.0 C603.7 376.7 598.0 379.7 596.0 380.0" stroke="#0b0b0b" stroke-width="5" fill="none" stroke-linejoin="round" />
<path d="M700.0 388.0 C702.0 385.3 707.0 375.7 712.0 372.0 C717.0 368.3 723.3 366.0 730.0 366.0 C736.7 366.0 745.3 373.0 752.0 372.0 C758.7 371.0 763.3 363.3 770.0 360.0 C776.7 356.7 786.0 352.3 792.0 352.0 C798.0 351.7 803.7 357.0 806.0 358.0" stroke="#0b0b0b" stroke-width="6" fill="none" stroke-linejoin="round" />
<path d="M563.0 611.6 C566.3 608.6 574.0 602.4 580.6 598.0 C587.2 593.6 598.3 586.4 602.7 585.0 C607.1 583.6 607.0 586.5 607.0 589.5 C607.0 592.5 604.9 599.0 602.7 602.7 C600.5 606.4 597.0 609.8 594.0 611.6 C591.0 613.5 588.0 611.6 585.0 613.8 C582.0 616.0 579.7 623.1 576.0 625.0 C572.3 626.9 565.5 626.5 563.0 625.0 C560.5 623.5 560.7 618.2 560.7 616.0 C560.7 613.8 559.7 614.6 563.0 611.6Z" fill="#0b0b0b"/>
<path d="M690.0 128.0 L773.0 128.0 L779.0 150.0 L772.0 165.0 L770.0 215.0 L765.0 240.0 L768.0 268.0 L775.0 300.0 L790.0 330.0 L800.0 350.0 L806.0 380.0 L800.0 400.0 L760.0 398.0 L740.0 380.0 L720.0 345.0 L700.0 305.0 L705.0 260.0 L722.0 240.0 L716.0 200.0 L700.0 170.0Z" fill="rgba(0,0,0,0.22)"/>
<path d="M800.0 400.0 L806.0 380.0 L812.0 410.0 L812.0 460.0 L806.0 500.0 L812.0 560.0 L826.0 600.0 L840.0 650.0 L850.0 700.0 L846.0 700.0 L830.0 650.0 L816.0 600.0 L802.0 560.0 L798.0 500.0 L800.0 460.0Z" fill="rgba(0,0,0,0.2)"/>
<path d="M806.0 300.0 C803.7 299.5 796.7 296.5 792.0 297.0 C787.3 297.5 782.7 302.8 778.0 303.0 C773.3 303.2 769.0 297.7 764.0 298.0 C759.0 298.3 753.0 304.7 748.0 305.0 C743.0 305.3 738.7 299.8 734.0 300.0 C729.3 300.2 724.7 306.0 720.0 306.0 C715.3 306.0 708.3 301.0 706.0 300.0" stroke="#0b0b0b" stroke-width="4" fill="none" stroke-linejoin="round" />
<path d="M795.0 262.0 C792.8 262.8 786.5 267.7 782.0 267.0 C777.5 266.3 773.0 258.2 768.0 258.0 C763.0 257.8 756.7 265.3 752.0 266.0 C747.3 266.7 742.0 262.7 740.0 262.0" stroke="#0b0b0b" stroke-width="3" fill="none" stroke-linejoin="round" />
<path d="M706.0 156.0 C708.0 157.0 713.8 160.2 718.0 162.0 C722.2 163.8 726.5 165.3 731.0 167.0 C735.5 168.7 740.3 170.7 745.0 172.0 C749.7 173.3 755.2 175.7 759.0 175.0 C762.8 174.3 766.0 170.5 768.0 168.0 C770.0 165.5 770.5 161.3 771.0 160.0" stroke="#0b0b0b" stroke-width="5" fill="none" stroke-linejoin="round" />
<path d="M700.0 145.0 C702.0 145.8 708.3 149.8 712.0 150.0 C715.7 150.2 718.2 145.7 722.0 146.0 C725.8 146.3 732.8 151.0 735.0 152.0" stroke="#0b0b0b" stroke-width="2.5" fill="none" stroke-linejoin="round" />
<path d="M770.0 164.0 C769.8 168.3 769.3 181.5 769.0 190.0 C768.7 198.5 768.7 207.2 768.0 215.0 C767.3 222.8 765.0 228.2 765.0 237.0 C765.0 245.8 766.8 259.2 768.0 268.0 C769.2 276.8 771.3 286.3 772.0 290.0" stroke="#0b0b0b" stroke-width="4.5" fill="none" stroke-linejoin="round" />
<path d="M725.0 200.0 C726.7 202.5 732.2 213.7 735.0 215.0 C737.8 216.3 739.2 206.8 742.0 208.0 C744.8 209.2 749.0 220.8 752.0 222.0 C755.0 223.2 758.7 216.2 760.0 215.0" stroke="#0b0b0b" stroke-width="2.5" fill="none" stroke-linejoin="round" />
<path d="M735.0 240.0 C736.7 242.5 741.7 253.3 745.0 255.0 C748.3 256.7 751.7 248.8 755.0 250.0 C758.3 251.2 763.3 260.0 765.0 262.0" stroke="#0b0b0b" stroke-width="3" fill="none" stroke-linejoin="round" />
<path d="M745.0 270.0 C746.2 272.5 749.2 281.7 752.0 285.0 C754.8 288.3 759.0 290.2 762.0 290.0 C765.0 289.8 768.7 285.0 770.0 284.0" stroke="#0b0b0b" stroke-width="2.5" fill="none" stroke-linejoin="round" />
<path d="M760.0 318.0 C762.0 320.3 767.0 329.0 772.0 332.0 C777.0 335.0 785.3 336.3 790.0 336.0 C794.7 335.7 798.3 331.0 800.0 330.0" stroke="#0b0b0b" stroke-width="4" fill="none" stroke-linejoin="round" />
<path d="M730.0 320.0 C732.0 322.5 737.3 331.7 742.0 335.0 C746.7 338.3 753.7 337.2 758.0 340.0 C762.3 342.8 763.3 349.3 768.0 352.0 C772.7 354.7 783.0 355.3 786.0 356.0" stroke="#0b0b0b" stroke-width="3" fill="none" stroke-linejoin="round" />
<path d="M748.0 180.0 C749.2 182.0 754.7 187.8 755.0 192.0 C755.3 196.2 750.8 202.8 750.0 205.0" stroke="#0b0b0b" stroke-width="2" fill="none" stroke-linejoin="round" />
<path d="M655.0 135.0 C656.2 136.2 659.5 141.5 662.0 142.0 C664.5 142.5 667.3 137.3 670.0 138.0 C672.7 138.7 675.0 145.3 678.0 146.0 C681.0 146.7 684.7 141.3 688.0 142.0 C691.3 142.7 695.0 149.3 698.0 150.0 C701.0 150.7 704.7 146.7 706.0 146.0" stroke="#3c3c3c" stroke-width="1.2" fill="none" stroke-linejoin="round" />
<path d="M806.0 400.0 C805.5 405.0 802.7 418.3 803.0 430.0 C803.3 441.7 806.5 455.0 808.0 470.0 C809.5 485.0 810.0 505.0 812.0 520.0 C814.0 535.0 817.0 546.7 820.0 560.0 C823.0 573.3 826.3 585.0 830.0 600.0 C833.7 615.0 838.3 633.3 842.0 650.0 C845.7 666.7 848.7 685.0 852.0 700.0 C855.3 715.0 859.0 727.5 862.0 740.0 C865.0 752.5 867.0 765.0 870.0 775.0 C873.0 785.0 876.7 790.8 880.0 800.0 C883.3 809.2 887.0 818.3 890.0 830.0 C893.0 841.7 895.5 856.7 898.0 870.0 C900.5 883.3 901.7 896.7 905.0 910.0 C908.3 923.3 913.8 935.5 918.0 950.0 C922.2 964.5 928.0 989.2 930.0 997.0" stroke="#0b0b0b" stroke-width="2.5" fill="none" stroke-linejoin="round" />
<path d="M868.0 770.0 C869.3 773.3 873.3 783.0 876.0 790.0 C878.7 797.0 881.7 803.7 884.0 812.0 C886.3 820.3 889.0 835.3 890.0 840.0" stroke="#0b0b0b" stroke-width="6" fill="none" stroke-linejoin="round" />
<ellipse cx="316" cy="218" rx="3" ry="11" fill="#0b0b0b"/>
<ellipse cx="279" cy="760" rx="11" ry="9" fill="#0b0b0b"/>
<ellipse cx="300" cy="749" rx="5" ry="5" fill="#0b0b0b"/>
<ellipse cx="291" cy="812" rx="5" ry="9" fill="#0b0b0b"/>
<ellipse cx="405" cy="731" rx="10" ry="10" fill="#0b0b0b"/>
<ellipse cx="402" cy="825" rx="11" ry="8" fill="#0b0b0b"/>
<ellipse cx="371" cy="825" rx="7" ry="7" fill="#0b0b0b"/>
<ellipse cx="430" cy="788" rx="4" ry="5" fill="#0b0b0b"/>
<ellipse cx="420" cy="783" rx="3" ry="3" fill="#0b0b0b"/>
<ellipse cx="399" cy="789" rx="3.5" ry="3.5" fill="#0b0b0b"/>
<ellipse cx="377" cy="840" rx="4" ry="4" fill="#0b0b0b"/>
<ellipse cx="393" cy="841" rx="4" ry="4" fill="#0b0b0b"/>
<ellipse cx="353" cy="908" rx="15" ry="16" fill="#0b0b0b"/>
<ellipse cx="342" cy="881" rx="8" ry="6" fill="#0b0b0b"/>
<ellipse cx="306" cy="875" rx="4" ry="6" fill="#0b0b0b"/>
<ellipse cx="390" cy="886" rx="8" ry="8" fill="#0b0b0b"/>
<ellipse cx="257" cy="963" rx="13" ry="13" fill="#0b0b0b"/>
<ellipse cx="506" cy="866" rx="7" ry="8" fill="#0b0b0b"/>
<ellipse cx="457" cy="863" rx="5" ry="6" fill="#0b0b0b"/>
<ellipse cx="599" cy="941" rx="6" ry="6" fill="#0b0b0b"/>
<ellipse cx="602" cy="786" rx="3" ry="5" fill="#0b0b0b"/>
<ellipse cx="396" cy="917" rx="4" ry="4" fill="#0b0b0b"/>
<ellipse cx="317" cy="908" rx="4" ry="4" fill="#0b0b0b"/>
<ellipse cx="327" cy="265" rx="1.4" ry="0.9" fill="#0d0d0d"/>
<ellipse cx="400" cy="449" rx="0.7" ry="0.7" fill="#0d0d0d"/>
<ellipse cx="228" cy="508" rx="0.7" ry="0.5" fill="#0d0d0d"/>
<ellipse cx="361" cy="846" rx="0.7" ry="0.6" fill="#0d0d0d"/>
<ellipse cx="431" cy="950" rx="1.3" ry="1.3" fill="#0d0d0d"/>
<ellipse cx="265" cy="236" rx="1.0" ry="1.4" fill="#0d0d0d"/>
<ellipse cx="277" cy="635" rx="1.4" ry="1.3" fill="#0d0d0d"/>
<ellipse cx="236" cy="312" rx="1.4" ry="1.5" fill="#0d0d0d"/>
<ellipse cx="323" cy="639" rx="1.1" ry="1.0" fill="#0d0d0d"/>
<ellipse cx="489" cy="736" rx="0.9" ry="1.0" fill="#0d0d0d"/>
<ellipse cx="396" cy="888" rx="1.5" ry="1.3" fill="#0d0d0d"/>
<ellipse cx="359" cy="786" rx="0.8" ry="0.9" fill="#0d0d0d"/>
<ellipse cx="229" cy="710" rx="1.5" ry="1.8" fill="#0d0d0d"/>
<ellipse cx="455" cy="646" rx="1.3" ry="1.4" fill="#0d0d0d"/>
<ellipse cx="505" cy="947" rx="1.2" ry="1.5" fill="#0d0d0d"/>
<ellipse cx="236" cy="738" rx="1.4" ry="2.2" fill="#0d0d0d"/>
<ellipse cx="348" cy="710" rx="0.6" ry="0.7" fill="#0d0d0d"/>
<ellipse cx="273" cy="236" rx="0.7" ry="0.9" fill="#0d0d0d"/>
<ellipse cx="260" cy="348" rx="1.1" ry="1.6" fill="#0d0d0d"/>
<ellipse cx="243" cy="521" rx="1.3" ry="1.9" fill="#0d0d0d"/>
<ellipse cx="498" cy="878" rx="0.9" ry="0.9" fill="#0d0d0d"/>
<ellipse cx="339" cy="895" rx="1.7" ry="1.3" fill="#0d0d0d"/>
<ellipse cx="276" cy="334" rx="0.9" ry="1.0" fill="#0d0d0d"/>
<ellipse cx="216" cy="495" rx="1.0" ry="1.2" fill="#0d0d0d"/>
<ellipse cx="544" cy="729" rx="1.2" ry="1.5" fill="#0d0d0d"/>
<ellipse cx="525" cy="806" rx="1.6" ry="2.3" fill="#0d0d0d"/>
<ellipse cx="350" cy="478" rx="0.7" ry="0.9" fill="#0d0d0d"/>
<ellipse cx="236" cy="193" rx="0.9" ry="0.6" fill="#0d0d0d"/>
<ellipse cx="332" cy="180" rx="0.6" ry="0.5" fill="#0d0d0d"/>
<ellipse cx="250" cy="448" rx="0.6" ry="0.9" fill="#0d0d0d"/>
<ellipse cx="302" cy="434" rx="1.0" ry="0.7" fill="#0d0d0d"/>
<ellipse cx="508" cy="989" rx="1.2" ry="1.3" fill="#0d0d0d"/>
<ellipse cx="245" cy="223" rx="1.0" ry="0.9" fill="#0d0d0d"/>
<ellipse cx="223" cy="953" rx="1.2" ry="0.9" fill="#0d0d0d"/>
<ellipse cx="397" cy="977" rx="1.6" ry="2.1" fill="#0d0d0d"/>
<ellipse cx="305" cy="450" rx="0.8" ry="1.1" fill="#0d0d0d"/>
<ellipse cx="399" cy="805" rx="1.0" ry="0.8" fill="#0d0d0d"/>
<ellipse cx="495" cy="982" rx="1.6" ry="2.3" fill="#0d0d0d"/>
<ellipse cx="497" cy="771" rx="0.9" ry="1.0" fill="#0d0d0d"/>
<ellipse cx="338" cy="160" rx="0.6" ry="0.6" fill="#0d0d0d"/>
<ellipse cx="304" cy="731" rx="1.7" ry="1.8" fill="#0d0d0d"/>
<ellipse cx="538" cy="985" rx="1.7" ry="1.7" fill="#0d0d0d"/>
<ellipse cx="291" cy="330" rx="0.8" ry="0.7" fill="#0d0d0d"/>
<ellipse cx="430" cy="909" rx="1.6" ry="1.7" fill="#0d0d0d"/>
<ellipse cx="440" cy="823" rx="0.7" ry="0.9" fill="#0d0d0d"/>
<ellipse cx="529" cy="808" rx="1.5" ry="1.6" fill="#0d0d0d"/>
<ellipse cx="277" cy="814" rx="1.0" ry="1.4" fill="#0d0d0d"/>
<ellipse cx="353" cy="949" rx="1.5" ry="1.1" fill="#0d0d0d"/>
<ellipse cx="259" cy="265" rx="1.7" ry="2.4" fill="#0d0d0d"/>
<ellipse cx="265" cy="846" rx="1.8" ry="2.2" fill="#0d0d0d"/>
<ellipse cx="336" cy="607" rx="0.8" ry="0.5" fill="#0d0d0d"/>
<ellipse cx="550" cy="694" rx="1.2" ry="1.9" fill="#0d0d0d"/>
<ellipse cx="365" cy="885" rx="1.6" ry="1.3" fill="#0d0d0d"/>
<ellipse cx="302" cy="387" rx="0.9" ry="1.1" fill="#0d0d0d"/>
<ellipse cx="304" cy="495" rx="0.8" ry="1.1" fill="#0d0d0d"/>
<ellipse cx="337" cy="529" rx="1.3" ry="2.0" fill="#0d0d0d"/>
<ellipse cx="360" cy="924" rx="1.2" ry="1.4" fill="#0d0d0d"/>
<ellipse cx="396" cy="151" rx="1.1" ry="0.9" fill="#0d0d0d"/>
<ellipse cx="216" cy="822" rx="0.8" ry="0.9" fill="#0d0d0d"/>
<ellipse cx="327" cy="581" rx="1.3" ry="1.8" fill="#0d0d0d"/>
<ellipse cx="252" cy="617" rx="0.9" ry="0.8" fill="#0d0d0d"/>
<ellipse cx="409" cy="789" rx="1.7" ry="1.8" fill="#0d0d0d"/>
<ellipse cx="392" cy="731" rx="1.1" ry="1.3" fill="#0d0d0d"/>
<ellipse cx="380" cy="945" rx="1.4" ry="2.1" fill="#0d0d0d"/>
<ellipse cx="408" cy="946" rx="1.6" ry="1.2" fill="#0d0d0d"/>
<ellipse cx="257" cy="515" rx="0.7" ry="0.6" fill="#0d0d0d"/>
<ellipse cx="240" cy="711" rx="1.5" ry="2.3" fill="#0d0d0d"/>
<ellipse cx="268" cy="751" rx="1.4" ry="1.0" fill="#0d0d0d"/>
<ellipse cx="520" cy="967" rx="0.9" ry="1.3" fill="#0d0d0d"/>
<ellipse cx="352" cy="554" rx="1.8" ry="2.6" fill="#0d0d0d"/>
<ellipse cx="271" cy="506" rx="1.2" ry="1.1" fill="#0d0d0d"/>
<ellipse cx="283" cy="409" rx="1.5" ry="0.9" fill="#0d0d0d"/>
<ellipse cx="221" cy="420" rx="1.3" ry="1.5" fill="#0d0d0d"/>
<ellipse cx="237" cy="982" rx="1.5" ry="2.4" fill="#0d0d0d"/>
<ellipse cx="251" cy="363" rx="0.6" ry="0.9" fill="#0d0d0d"/>
<ellipse cx="308" cy="246" rx="1.1" ry="1.7" fill="#0d0d0d"/>
<ellipse cx="267" cy="925" rx="1.3" ry="1.7" fill="#0d0d0d"/>
<ellipse cx="246" cy="184" rx="1.4" ry="1.5" fill="#0d0d0d"/>
<ellipse cx="240" cy="942" rx="1.4" ry="1.9" fill="#0d0d0d"/>
<ellipse cx="244" cy="871" rx="0.7" ry="1.0" fill="#0d0d0d"/>
<ellipse cx="372" cy="427" rx="1.3" ry="1.9" fill="#0d0d0d"/>
<ellipse cx="307" cy="246" rx="1.2" ry="1.0" fill="#0d0d0d"/>
<ellipse cx="253" cy="274" rx="0.7" ry="0.5" fill="#0d0d0d"/>
<ellipse cx="323" cy="397" rx="1.5" ry="1.3" fill="#0d0d0d"/>
<ellipse cx="388" cy="288" rx="1.0" ry="0.6" fill="#0d0d0d"/>
<ellipse cx="301" cy="148" rx="1.5" ry="1.7" fill="#0d0d0d"/>
<ellipse cx="280" cy="543" rx="1.7" ry="1.2" fill="#0d0d0d"/>
<ellipse cx="386" cy="853" rx="1.1" ry="1.2" fill="#0d0d0d"/>
<ellipse cx="452" cy="980" rx="1.0" ry="1.4" fill="#0d0d0d"/>
<ellipse cx="459" cy="682" rx="1.1" ry="1.0" fill="#0d0d0d"/>
<ellipse cx="234" cy="247" rx="0.7" ry="0.9" fill="#0d0d0d"/>
<ellipse cx="303" cy="275" rx="0.7" ry="1.0" fill="#0d0d0d"/>
<ellipse cx="515" cy="712" rx="0.9" ry="0.8" fill="#0d0d0d"/>
<ellipse cx="316" cy="530" rx="0.8" ry="0.8" fill="#0d0d0d"/>
<ellipse cx="306" cy="962" rx="1.8" ry="2.0" fill="#0d0d0d"/>
<ellipse cx="299" cy="965" rx="1.0" ry="0.9" fill="#0d0d0d"/>
<ellipse cx="215" cy="463" rx="1.2" ry="1.3" fill="#0d0d0d"/>
<ellipse cx="284" cy="569" rx="0.6" ry="0.5" fill="#0d0d0d"/>
<ellipse cx="246" cy="479" rx="0.7" ry="0.4" fill="#0d0d0d"/>
<ellipse cx="320" cy="335" rx="1.3" ry="1.5" fill="#0d0d0d"/>
<ellipse cx="474" cy="700" rx="1.5" ry="2.2" fill="#0d0d0d"/>
<ellipse cx="349" cy="415" rx="1.8" ry="1.3" fill="#0d0d0d"/>
<ellipse cx="465" cy="688" rx="0.7" ry="0.9" fill="#0d0d0d"/>
<ellipse cx="523" cy="675" rx="1.5" ry="2.1" fill="#0d0d0d"/>
<ellipse cx="263" cy="585" rx="1.2" ry="1.7" fill="#0d0d0d"/>
<ellipse cx="493" cy="846" rx="1.3" ry="1.9" fill="#0d0d0d"/>
<ellipse cx="451" cy="731" rx="0.9" ry="0.6" fill="#0d0d0d"/>
<ellipse cx="261" cy="445" rx="0.7" ry="1.0" fill="#0d0d0d"/>
<ellipse cx="408" cy="675" rx="1.4" ry="1.7" fill="#0d0d0d"/>
<ellipse cx="384" cy="138" rx="1.6" ry="2.1" fill="#0d0d0d"/>
<ellipse cx="389" cy="595" rx="1.4" ry="0.9" fill="#0d0d0d"/>
<ellipse cx="241" cy="363" rx="1.5" ry="1.2" fill="#0d0d0d"/>
<ellipse cx="470" cy="974" rx="1.2" ry="1.2" fill="#0d0d0d"/>
<ellipse cx="380" cy="723" rx="1.5" ry="1.9" fill="#0d0d0d"/>
<ellipse cx="266" cy="353" rx="1.5" ry="1.3" fill="#0d0d0d"/>
<ellipse cx="236" cy="366" rx="1.4" ry="1.8" fill="#0d0d0d"/>
<ellipse cx="393" cy="535" rx="1.2" ry="0.8" fill="#0d0d0d"/>
<ellipse cx="552" cy="940" rx="0.6" ry="0.7" fill="#0d0d0d"/>
<ellipse cx="498" cy="968" rx="1.1" ry="1.0" fill="#0d0d0d"/>
<ellipse cx="287" cy="948" rx="0.9" ry="1.0" fill="#0d0d0d"/>
<ellipse cx="264" cy="586" rx="1.7" ry="1.3" fill="#0d0d0d"/>
<ellipse cx="521" cy="740" rx="0.9" ry="1.3" fill="#0d0d0d"/>
<ellipse cx="383" cy="156" rx="0.6" ry="0.7" fill="#0d0d0d"/>
<ellipse cx="371" cy="395" rx="0.8" ry="0.7" fill="#0d0d0d"/>
<ellipse cx="324" cy="858" rx="0.6" ry="0.8" fill="#0d0d0d"/>
<ellipse cx="535" cy="748" rx="1.7" ry="1.5" fill="#0d0d0d"/>
<ellipse cx="343" cy="473" rx="1.8" ry="2.1" fill="#0d0d0d"/>
<ellipse cx="339" cy="503" rx="0.9" ry="0.6" fill="#0d0d0d"/>
<ellipse cx="250" cy="853" rx="0.9" ry="1.4" fill="#0d0d0d"/>
<ellipse cx="301" cy="364" rx="1.2" ry="1.0" fill="#0d0d0d"/>
<ellipse cx="344" cy="957" rx="1.7" ry="2.3" fill="#0d0d0d"/>
<ellipse cx="433" cy="921" rx="1.7" ry="2.0" fill="#0d0d0d"/>
<ellipse cx="475" cy="689" rx="0.9" ry="0.6" fill="#0d0d0d"/>
<ellipse cx="378" cy="431" rx="1.0" ry="1.3" fill="#0d0d0d"/>
<ellipse cx="273" cy="274" rx="0.8" ry="1.3" fill="#0d0d0d"/>
<ellipse cx="386" cy="324" rx="1.7" ry="2.7" fill="#0d0d0d"/>
<ellipse cx="370" cy="255" rx="0.8" ry="0.6" fill="#0d0d0d"/>
<ellipse cx="333" cy="213" rx="0.9" ry="0.8" fill="#0d0d0d"/>
<ellipse cx="412" cy="898" rx="1.5" ry="1.5" fill="#0d0d0d"/>
<ellipse cx="358" cy="586" rx="1.1" ry="1.0" fill="#0d0d0d"/>
<ellipse cx="236" cy="374" rx="1.8" ry="1.3" fill="#0d0d0d"/>
<ellipse cx="389" cy="676" rx="1.6" ry="1.3" fill="#0d0d0d"/>
<ellipse cx="309" cy="349" rx="1.1" ry="1.1" fill="#0d0d0d"/>
<ellipse cx="544" cy="865" rx="1.6" ry="1.0" fill="#0d0d0d"/>
<ellipse cx="226" cy="745" rx="1.7" ry="1.8" fill="#0d0d0d"/>
<ellipse cx="350" cy="932" rx="1.6" ry="2.3" fill="#0d0d0d"/>
<ellipse cx="253" cy="268" rx="1.2" ry="1.6" fill="#0d0d0d"/>
<ellipse cx="540" cy="756" rx="1.4" ry="1.9" fill="#0d0d0d"/>
<ellipse cx="373" cy="609" rx="0.6" ry="0.9" fill="#0d0d0d"/>
<ellipse cx="295" cy="926" rx="1.4" ry="1.2" fill="#0d0d0d"/>
<ellipse cx="259" cy="352" rx="1.4" ry="1.8" fill="#0d0d0d"/>
<ellipse cx="254" cy="196" rx="1.2" ry="1.5" fill="#0d0d0d"/>
<ellipse cx="349" cy="327" rx="1.3" ry="0.8" fill="#0d0d0d"/>
<ellipse cx="319" cy="531" rx="1.8" ry="2.2" fill="#0d0d0d"/>
<ellipse cx="296" cy="347" rx="1.8" ry="2.3" fill="#0d0d0d"/>
<ellipse cx="321" cy="154" rx="1.2" ry="1.5" fill="#0d0d0d"/>
<ellipse cx="360" cy="356" rx="1.4" ry="2.1" fill="#0d0d0d"/>
<ellipse cx="293" cy="164" rx="1.0" ry="1.0" fill="#0d0d0d"/>
<ellipse cx="490" cy="771" rx="1.2" ry="1.0" fill="#0d0d0d"/>
<ellipse cx="291" cy="789" rx="1.0" ry="1.5" fill="#0d0d0d"/>
<ellipse cx="386" cy="296" rx="0.9" ry="0.9" fill="#0d0d0d"/>
<ellipse cx="445" cy="951" rx="0.8" ry="0.8" fill="#0d0d0d"/>
<ellipse cx="288" cy="973" rx="0.8" ry="0.5" fill="#0d0d0d"/>
<ellipse cx="236" cy="473" rx="1.7" ry="2.5" fill="#0d0d0d"/>
<ellipse cx="468" cy="993" rx="1.7" ry="1.6" fill="#0d0d0d"/>
<ellipse cx="279" cy="940" rx="1.5" ry="0.9" fill="#0d0d0d"/>
<ellipse cx="344" cy="420" rx="0.8" ry="0.5" fill="#0d0d0d"/>
<ellipse cx="312" cy="437" rx="1.7" ry="1.3" fill="#0d0d0d"/>
<ellipse cx="338" cy="842" rx="1.6" ry="1.6" fill="#0d0d0d"/>
<ellipse cx="232" cy="542" rx="1.0" ry="1.6" fill="#0d0d0d"/>
<ellipse cx="282" cy="448" rx="1.7" ry="1.1" fill="#0d0d0d"/>
<ellipse cx="357" cy="833" rx="1.5" ry="1.0" fill="#0d0d0d"/>
<ellipse cx="227" cy="189" rx="1.7" ry="1.5" fill="#0d0d0d"/>
<ellipse cx="473" cy="908" rx="1.0" ry="0.9" fill="#0d0d0d"/>
<ellipse cx="545" cy="666" rx="0.9" ry="1.2" fill="#0d0d0d"/>
<ellipse cx="324" cy="372" rx="0.6" ry="0.8" fill="#0d0d0d"/>
<ellipse cx="531" cy="680" rx="1.7" ry="1.1" fill="#0d0d0d"/>
<ellipse cx="296" cy="544" rx="1.7" ry="2.7" fill="#0d0d0d"/>
<ellipse cx="348" cy="351" rx="1.1" ry="1.2" fill="#0d0d0d"/>
<ellipse cx="492" cy="770" rx="1.6" ry="2.2" fill="#0d0d0d"/>
<ellipse cx="325" cy="446" rx="1.5" ry="1.0" fill="#0d0d0d"/>
<ellipse cx="283" cy="782" rx="0.9" ry="0.6" fill="#0d0d0d"/>
<ellipse cx="227" cy="610" rx="1.0" ry="1.6" fill="#0d0d0d"/>
<ellipse cx="520" cy="985" rx="0.9" ry="0.6" fill="#0d0d0d"/>
<ellipse cx="248" cy="564" rx="1.5" ry="1.5" fill="#0d0d0d"/>
<ellipse cx="296" cy="493" rx="1.3" ry="1.7" fill="#0d0d0d"/>
<ellipse cx="473" cy="863" rx="1.4" ry="1.0" fill="#0d0d0d"/>
<ellipse cx="300" cy="346" rx="0.8" ry="1.2" fill="#0d0d0d"/>
<ellipse cx="352" cy="989" rx="1.2" ry="1.0" fill="#0d0d0d"/>
<ellipse cx="494" cy="697" rx="1.8" ry="1.3" fill="#0d0d0d"/>
<ellipse cx="379" cy="839" rx="1.6" ry="2.4" fill="#0d0d0d"/>
<ellipse cx="229" cy="388" rx="0.7" ry="0.6" fill="#0d0d0d"/>
<ellipse cx="305" cy="804" rx="1.7" ry="1.2" fill="#0d0d0d"/>
<ellipse cx="421" cy="668" rx="0.9" ry="0.8" fill="#0d0d0d"/>
<ellipse cx="264" cy="310" rx="0.9" ry="1.1" fill="#0d0d0d"/>
<ellipse cx="219" cy="416" rx="1.4" ry="1.1" fill="#0d0d0d"/>
<ellipse cx="323" cy="310" rx="1.6" ry="1.8" fill="#0d0d0d"/>
<ellipse cx="237" cy="222" rx="1.1" ry="1.2" fill="#0d0d0d"/>
<ellipse cx="271" cy="733" rx="1.1" ry="1.0" fill="#0d0d0d"/>
<ellipse cx="321" cy="955" rx="1.0" ry="1.1" fill="#0d0d0d"/>
<ellipse cx="338" cy="493" rx="1.6" ry="2.6" fill="#0d0d0d"/>
<ellipse cx="341" cy="305" rx="1.5" ry="1.2" fill="#0d0d0d"/>
<ellipse cx="217" cy="910" rx="1.1" ry="1.6" fill="#0d0d0d"/>
<ellipse cx="355" cy="894" rx="1.2" ry="0.9" fill="#0d0d0d"/>
<ellipse cx="220" cy="609" rx="1.4" ry="2.1" fill="#0d0d0d"/>
<ellipse cx="246" cy="670" rx="1.0" ry="1.2" fill="#0d0d0d"/>
<ellipse cx="265" cy="379" rx="1.2" ry="1.9" fill="#0d0d0d"/>
<ellipse cx="253" cy="557" rx="1.6" ry="2.5" fill="#0d0d0d"/>
<ellipse cx="283" cy="244" rx="1.7" ry="2.7" fill="#0d0d0d"/>
<ellipse cx="816" cy="181" rx="1.5" ry="1.5" fill="#0f0f0f"/>
<ellipse cx="793" cy="913" rx="1.2" ry="1.2" fill="#0f0f0f"/>
<ellipse cx="898" cy="273" rx="1.4" ry="1.4" fill="#0f0f0f"/>
<ellipse cx="753" cy="483" rx="1.4" ry="1.4" fill="#0f0f0f"/>
<ellipse cx="899" cy="292" rx="0.8" ry="0.8" fill="#0f0f0f"/>
<ellipse cx="796" cy="580" rx="1.0" ry="1.0" fill="#0f0f0f"/>
<ellipse cx="730" cy="347" rx="1.3" ry="1.3" fill="#0f0f0f"/>
<ellipse cx="915" cy="170" rx="1.2" ry="1.2" fill="#0f0f0f"/>
<ellipse cx="882" cy="168" rx="1.4" ry="1.4" fill="#0f0f0f"/>
<ellipse cx="728" cy="651" rx="1.2" ry="1.2" fill="#0f0f0f"/>
<ellipse cx="850" cy="398" rx="1.0" ry="1.0" fill="#0f0f0f"/>
<ellipse cx="840" cy="501" rx="1.3" ry="1.3" fill="#0f0f0f"/>
<ellipse cx="807" cy="512" rx="0.6" ry="0.6" fill="#0f0f0f"/>
<ellipse cx="849" cy="556" rx="0.8" ry="0.8" fill="#0f0f0f"/>
<ellipse cx="883" cy="806" rx="1.1" ry="1.1" fill="#0f0f0f"/>
<ellipse cx="743" cy="542" rx="0.7" ry="0.7" fill="#0f0f0f"/>
<ellipse cx="731" cy="505" rx="0.7" ry="0.7" fill="#0f0f0f"/>
<ellipse cx="806" cy="574" rx="0.6" ry="0.6" fill="#0f0f0f"/>
<ellipse cx="853" cy="206" rx="1.3" ry="1.3" fill="#0f0f0f"/>
<ellipse cx="887" cy="575" rx="0.7" ry="0.7" fill="#0f0f0f"/>
<ellipse cx="821" cy="460" rx="1.6" ry="1.6" fill="#0f0f0f"/>
<ellipse cx="733" cy="872" rx="1.6" ry="1.6" fill="#0f0f0f"/>
<ellipse cx="876" cy="836" rx="0.8" ry="0.8" fill="#0f0f0f"/>
<ellipse cx="936" cy="558" rx="1.6" ry="1.6" fill="#0f0f0f"/>
<ellipse cx="920" cy="277" rx="1.4" ry="1.4" fill="#0f0f0f"/>
<ellipse cx="923" cy="191" rx="1.0" ry="1.0" fill="#0f0f0f"/>
<ellipse cx="881" cy="272" rx="1.5" ry="1.5" fill="#0f0f0f"/>
<ellipse cx="766" cy="836" rx="0.7" ry="0.7" fill="#0f0f0f"/>
<ellipse cx="821" cy="926" rx="0.8" ry="0.8" fill="#0f0f0f"/>
<ellipse cx="763" cy="570" rx="0.9" ry="0.9" fill="#0f0f0f"/>
<ellipse cx="709" cy="292" rx="0.8" ry="0.8" fill="#0f0f0f"/>
<ellipse cx="925" cy="720" rx="1.5" ry="1.5" fill="#0f0f0f"/>
<ellipse cx="740" cy="810" rx="0.7" ry="0.7" fill="#0f0f0f"/>
<ellipse cx="827" cy="682" rx="1.0" ry="1.0" fill="#0f0f0f"/>
<ellipse cx="910" cy="612" rx="1.2" ry="1.2" fill="#0f0f0f"/>
<ellipse cx="912" cy="225" rx="1.6" ry="1.6" fill="#0f0f0f"/>
<ellipse cx="851" cy="474" rx="1.4" ry="1.4" fill="#0f0f0f"/>
<ellipse cx="764" cy="987" rx="1.2" ry="1.2" fill="#0f0f0f"/>
<ellipse cx="786" cy="793" rx="1.0" ry="1.0" fill="#0f0f0f"/>
<ellipse cx="742" cy="774" rx="0.6" ry="0.6" fill="#0f0f0f"/>
<ellipse cx="897" cy="353" rx="1.2" ry="1.2" fill="#0f0f0f"/>
<ellipse cx="936" cy="639" rx="1.3" ry="1.3" fill="#0f0f0f"/>
<ellipse cx="775" cy="137" rx="0.6" ry="0.6" fill="#0f0f0f"/>
<ellipse cx="736" cy="665" rx="1.0" ry="1.0" fill="#0f0f0f"/>
<ellipse cx="823" cy="905" rx="0.7" ry="0.7" fill="#0f0f0f"/>
<ellipse cx="755" cy="697" rx="0.6" ry="0.6" fill="#0f0f0f"/>
<ellipse cx="701" cy="440" rx="0.7" ry="0.7" fill="#0f0f0f"/>
<ellipse cx="786" cy="328" rx="1.2" ry="1.2" fill="#0f0f0f"/>
<ellipse cx="841" cy="311" rx="1.2" ry="1.2" fill="#0f0f0f"/>
<ellipse cx="814" cy="251" rx="1.5" ry="1.5" fill="#0f0f0f"/>
<ellipse cx="758" cy="263" rx="0.7" ry="0.7" fill="#0f0f0f"/>
<ellipse cx="853" cy="884" rx="1.4" ry="1.4" fill="#0f0f0f"/>
<ellipse cx="796" cy="362" rx="0.6" ry="0.6" fill="#0f0f0f"/>
<ellipse cx="855" cy="619" rx="1.0" ry="1.0" fill="#0f0f0f"/>
<ellipse cx="855" cy="517" rx="1.5" ry="1.5" fill="#0f0f0f"/>
<ellipse cx="876" cy="349" rx="1.5" ry="1.5" fill="#0f0f0f"/>
<ellipse cx="711" cy="592" rx="1.0" ry="1.0" fill="#0f0f0f"/>
<ellipse cx="757" cy="185" rx="1.4" ry="1.4" fill="#0f0f0f"/>
<ellipse cx="703" cy="609" rx="1.5" ry="1.5" fill="#0f0f0f"/>
<ellipse cx="734" cy="307" rx="1.2" ry="1.2" fill="#0f0f0f"/>
<ellipse cx="822" cy="687" rx="1.4" ry="1.4" fill="#0f0f0f"/>
<ellipse cx="742" cy="401" rx="0.9" ry="0.9" fill="#0f0f0f"/>
<ellipse cx="712" cy="900" rx="1.4" ry="1.4" fill="#0f0f0f"/>
<ellipse cx="872" cy="140" rx="1.4" ry="1.4" fill="#0f0f0f"/>
<ellipse cx="879" cy="535" rx="1.3" ry="1.3" fill="#0f0f0f"/>
<ellipse cx="809" cy="329" rx="0.7" ry="0.7" fill="#0f0f0f"/>
<ellipse cx="756" cy="168" rx="0.9" ry="0.9" fill="#0f0f0f"/>
<ellipse cx="880" cy="733" rx="1.4" ry="1.4" fill="#0f0f0f"/>
<ellipse cx="871" cy="364" rx="1.2" ry="1.2" fill="#0f0f0f"/>
<ellipse cx="805" cy="813" rx="1.1" ry="1.1" fill="#0f0f0f"/>
<ellipse cx="764" cy="687" rx="1.6" ry="1.6" fill="#0f0f0f"/>
<ellipse cx="752" cy="892" rx="0.6" ry="0.6" fill="#0f0f0f"/>
<ellipse cx="762" cy="338" rx="1.3" ry="1.3" fill="#0f0f0f"/>
<ellipse cx="927" cy="777" rx="0.9" ry="0.9" fill="#0f0f0f"/>
<ellipse cx="911" cy="418" rx="0.8" ry="0.8" fill="#0f0f0f"/>
<ellipse cx="918" cy="677" rx="1.3" ry="1.3" fill="#0f0f0f"/>
<ellipse cx="860" cy="977" rx="1.1" ry="1.1" fill="#0f0f0f"/>
<ellipse cx="902" cy="735" rx="1.5" ry="1.5" fill="#0f0f0f"/>
<ellipse cx="805" cy="758" rx="1.2" ry="1.2" fill="#0f0f0f"/>
<ellipse cx="774" cy="317" rx="1.2" ry="1.2" fill="#0f0f0f"/>
<ellipse cx="719" cy="918" rx="0.7" ry="0.7" fill="#0f0f0f"/>
<ellipse cx="706" cy="227" rx="1.5" ry="1.5" fill="#0f0f0f"/>
<ellipse cx="783" cy="257" rx="0.6" ry="0.6" fill="#0f0f0f"/>
<ellipse cx="710" cy="731" rx="1.2" ry="1.2" fill="#0f0f0f"/>
<ellipse cx="867" cy="769" rx="0.7" ry="0.7" fill="#0f0f0f"/>
<ellipse cx="842" cy="448" rx="1.4" ry="1.4" fill="#0f0f0f"/>
<ellipse cx="897" cy="902" rx="0.7" ry="0.7" fill="#0f0f0f"/>
<ellipse cx="908" cy="921" rx="1.5" ry="1.5" fill="#0f0f0f"/>
<ellipse cx="726" cy="312" rx="0.7" ry="0.7" fill="#0f0f0f"/>
<ellipse cx="708" cy="864" rx="1.4" ry="1.4" fill="#0f0f0f"/>
<ellipse cx="852" cy="845" rx="1.2" ry="1.2" fill="#0f0f0f"/>
<ellipse cx="769" cy="221" rx="0.7" ry="0.7" fill="#0f0f0f"/>
<ellipse cx="882" cy="311" rx="0.9" ry="0.9" fill="#0f0f0f"/>
<ellipse cx="802" cy="153" rx="0.9" ry="0.9" fill="#0f0f0f"/>
<ellipse cx="768" cy="751" rx="1.0" ry="1.0" fill="#0f0f0f"/>
<ellipse cx="777" cy="964" rx="1.1" ry="1.1" fill="#0f0f0f"/>
<ellipse cx="904" cy="667" rx="0.6" ry="0.6" fill="#0f0f0f"/>
<ellipse cx="799" cy="510" rx="1.4" ry="1.4" fill="#0f0f0f"/>
<ellipse cx="783" cy="741" rx="1.1" ry="1.1" fill="#0f0f0f"/>
<ellipse cx="752" cy="877" rx="0.7" ry="0.7" fill="#0f0f0f"/>
<ellipse cx="897" cy="282" rx="0.6" ry="0.6" fill="#0f0f0f"/>
<ellipse cx="748" cy="790" rx="1.6" ry="1.6" fill="#0f0f0f"/>
<ellipse cx="701" cy="557" rx="1.1" ry="1.1" fill="#0f0f0f"/>
<ellipse cx="891" cy="294" rx="1.1" ry="1.1" fill="#0f0f0f"/>
<ellipse cx="783" cy="850" rx="0.9" ry="0.9" fill="#0f0f0f"/>
<ellipse cx="927" cy="379" rx="0.8" ry="0.8" fill="#0f0f0f"/>
<ellipse cx="868" cy="564" rx="0.7" ry="0.7" fill="#0f0f0f"/>
<ellipse cx="853" cy="205" rx="1.4" ry="1.4" fill="#0f0f0f"/>
<ellipse cx="867" cy="812" rx="1.2" ry="1.2" fill="#0f0f0f"/>
<ellipse cx="785" cy="480" rx="1.0" ry="1.0" fill="#0f0f0f"/>
<ellipse cx="914" cy="209" rx="1.5" ry="1.5" fill="#0f0f0f"/>
<ellipse cx="706" cy="312" rx="0.9" ry="0.9" fill="#0f0f0f"/>
<ellipse cx="916" cy="566" rx="1.0" ry="1.0" fill="#0f0f0f"/>
<ellipse cx="912" cy="336" rx="1.1" ry="1.1" fill="#0f0f0f"/>
<ellipse cx="828" cy="784" rx="1.4" ry="1.4" fill="#0f0f0f"/>
<ellipse cx="855" cy="435" rx="0.9" ry="0.9" fill="#0f0f0f"/>
<ellipse cx="737" cy="860" rx="1.3" ry="1.3" fill="#0f0f0f"/>
<ellipse cx="878" cy="281" rx="1.0" ry="1.0" fill="#0f0f0f"/>
<ellipse cx="886" cy="633" rx="0.7" ry="0.7" fill="#0f0f0f"/>
<ellipse cx="811" cy="896" rx="0.8" ry="0.8" fill="#0f0f0f"/>
<ellipse cx="746" cy="394" rx="1.3" ry="1.3" fill="#0f0f0f"/>
<ellipse cx="902" cy="268" rx="0.8" ry="0.8" fill="#0f0f0f"/>
<ellipse cx="759" cy="416" rx="1.1" ry="1.1" fill="#0f0f0f"/>
<ellipse cx="739" cy="417" rx="0.8" ry="0.8" fill="#0f0f0f"/>
<ellipse cx="934" cy="762" rx="0.7" ry="0.7" fill="#0f0f0f"/>
<ellipse cx="931" cy="222" rx="1.0" ry="1.0" fill="#0f0f0f"/>
<ellipse cx="936" cy="819" rx="1.3" ry="1.3" fill="#0f0f0f"/>
<ellipse cx="804" cy="304" rx="1.2" ry="1.2" fill="#0f0f0f"/>
<ellipse cx="726" cy="313" rx="1.0" ry="1.0" fill="#0f0f0f"/>
<ellipse cx="708" cy="478" rx="1.4" ry="1.4" fill="#0f0f0f"/>
<ellipse cx="866" cy="565" rx="1.2" ry="1.2" fill="#0f0f0f"/>
<ellipse cx="811" cy="257" rx="1.2" ry="1.2" fill="#0f0f0f"/>
<ellipse cx="797" cy="772" rx="1.5" ry="1.5" fill="#0f0f0f"/>
<ellipse cx="803" cy="629" rx="1.3" ry="1.3" fill="#0f0f0f"/>
<ellipse cx="801" cy="332" rx="1.3" ry="1.3" fill="#0f0f0f"/>
<ellipse cx="911" cy="801" rx="1.3" ry="1.3" fill="#0f0f0f"/>
<ellipse cx="905" cy="719" rx="1.2" ry="1.2" fill="#0f0f0f"/>
<ellipse cx="809" cy="404" rx="1.2" ry="1.2" fill="#0f0f0f"/>
<ellipse cx="723" cy="496" rx="1.4" ry="1.4" fill="#0f0f0f"/>
<ellipse cx="871" cy="676" rx="0.9" ry="0.9" fill="#0f0f0f"/>
<ellipse cx="269" cy="201" rx="1.7" ry="1.9" fill="#131313" transform="rotate(65 269 201)"/>
<ellipse cx="317" cy="155" rx="1.6" ry="1.8" fill="#131313" transform="rotate(78 317 155)"/>
<ellipse cx="310" cy="144" rx="1.0" ry="0.6" fill="#131313" transform="rotate(88 310 144)"/>
<ellipse cx="291" cy="205" rx="1.1" ry="1.2" fill="#131313" transform="rotate(78 291 205)"/>
<ellipse cx="293" cy="209" rx="1.6" ry="0.9" fill="#131313" transform="rotate(4 293 209)"/>
<ellipse cx="237" cy="162" rx="0.6" ry="0.7" fill="#131313" transform="rotate(56 237 162)"/>
<ellipse cx="286" cy="156" rx="0.9" ry="0.8" fill="#131313" transform="rotate(0 286 156)"/>
<ellipse cx="294" cy="188" rx="0.9" ry="1.7" fill="#131313" transform="rotate(10 294 188)"/>
<ellipse cx="300" cy="171" rx="0.9" ry="0.8" fill="#131313" transform="rotate(8 300 171)"/>
<ellipse cx="282" cy="145" rx="0.7" ry="0.6" fill="#131313" transform="rotate(8 282 145)"/>
<ellipse cx="214" cy="158" rx="1.7" ry="1.9" fill="#131313" transform="rotate(90 214 158)"/>
<ellipse cx="262" cy="141" rx="1.4" ry="2.0" fill="#131313" transform="rotate(34 262 141)"/>
<ellipse cx="255" cy="170" rx="0.6" ry="0.6" fill="#131313" transform="rotate(15 255 170)"/>
<ellipse cx="230" cy="219" rx="0.6" ry="0.7" fill="#131313" transform="rotate(62 230 219)"/>
<ellipse cx="235" cy="201" rx="1.1" ry="0.9" fill="#131313" transform="rotate(16 235 201)"/>
<ellipse cx="265" cy="179" rx="1.1" ry="1.9" fill="#131313" transform="rotate(0 265 179)"/>
<ellipse cx="247" cy="251" rx="1.6" ry="1.4" fill="#131313" transform="rotate(2 247 251)"/>
<ellipse cx="239" cy="180" rx="1.6" ry="2.2" fill="#131313" transform="rotate(12 239 180)"/>
<ellipse cx="219" cy="150" rx="1.1" ry="0.6" fill="#131313" transform="rotate(78 219 150)"/>
<ellipse cx="254" cy="168" rx="0.7" ry="0.4" fill="#131313" transform="rotate(74 254 168)"/>
<ellipse cx="291" cy="134" rx="1.0" ry="1.4" fill="#131313" transform="rotate(16 291 134)"/>
<ellipse cx="284" cy="239" rx="0.8" ry="0.6" fill="#131313" transform="rotate(29 284 239)"/>
<ellipse cx="313" cy="163" rx="0.8" ry="1.2" fill="#131313" transform="rotate(70 313 163)"/>
<ellipse cx="238" cy="249" rx="1.7" ry="2.1" fill="#131313" transform="rotate(53 238 249)"/>
<ellipse cx="220" cy="145" rx="1.2" ry="1.0" fill="#131313" transform="rotate(90 220 145)"/>
<ellipse cx="261" cy="184" rx="1.7" ry="1.9" fill="#131313" transform="rotate(66 261 184)"/>
<ellipse cx="235" cy="221" rx="0.7" ry="0.5" fill="#131313" transform="rotate(71 235 221)"/>
<ellipse cx="293" cy="208" rx="0.7" ry="0.5" fill="#131313" transform="rotate(26 293 208)"/>
<ellipse cx="305" cy="141" rx="1.1" ry="0.9" fill="#131313" transform="rotate(5 305 141)"/>
<ellipse cx="235" cy="177" rx="1.3" ry="0.9" fill="#131313" transform="rotate(46 235 177)"/>
<ellipse cx="231" cy="187" rx="1.0" ry="1.4" fill="#131313" transform="rotate(66 231 187)"/>
<ellipse cx="285" cy="149" rx="0.6" ry="0.3" fill="#131313" transform="rotate(45 285 149)"/>
<ellipse cx="217" cy="210" rx="1.2" ry="1.7" fill="#131313" transform="rotate(40 217 210)"/>
<ellipse cx="231" cy="141" rx="1.1" ry="1.1" fill="#131313" transform="rotate(5 231 141)"/>
<ellipse cx="299" cy="230" rx="1.7" ry="1.6" fill="#131313" transform="rotate(87 299 230)"/>
<ellipse cx="271" cy="142" rx="1.6" ry="2.8" fill="#131313" transform="rotate(3 271 142)"/>
<ellipse cx="318" cy="202" rx="1.3" ry="1.3" fill="#131313" transform="rotate(74 318 202)"/>
<ellipse cx="216" cy="141" rx="0.7" ry="0.5" fill="#131313" transform="rotate(32 216 141)"/>
<ellipse cx="261" cy="222" rx="1.3" ry="1.4" fill="#131313" transform="rotate(69 261 222)"/>
<ellipse cx="224" cy="224" rx="0.6" ry="0.8" fill="#131313" transform="rotate(61 224 224)"/>
<ellipse cx="217" cy="250" rx="0.7" ry="1.1" fill="#131313" transform="rotate(84 217 250)"/>
<ellipse cx="325" cy="163" rx="0.6" ry="0.5" fill="#131313" transform="rotate(86 325 163)"/>
<ellipse cx="288" cy="196" rx="1.5" ry="1.4" fill="#131313" transform="rotate(56 288 196)"/>
<ellipse cx="274" cy="162" rx="1.1" ry="0.9" fill="#131313" transform="rotate(81 274 162)"/>
<ellipse cx="266" cy="231" rx="1.7" ry="2.8" fill="#131313" transform="rotate(49 266 231)"/>
<ellipse cx="241" cy="245" rx="0.9" ry="0.6" fill="#131313" transform="rotate(44 241 245)"/>
<ellipse cx="247" cy="153" rx="1.1" ry="1.0" fill="#131313" transform="rotate(27 247 153)"/>
<ellipse cx="315" cy="179" rx="1.2" ry="1.7" fill="#131313" transform="rotate(79 315 179)"/>
<ellipse cx="269" cy="141" rx="0.6" ry="1.0" fill="#131313" transform="rotate(5 269 141)"/>
<ellipse cx="296" cy="167" rx="1.0" ry="1.4" fill="#131313" transform="rotate(72 296 167)"/>
<ellipse cx="216" cy="149" rx="1.1" ry="0.6" fill="#131313" transform="rotate(34 216 149)"/>
<ellipse cx="243" cy="149" rx="0.7" ry="0.9" fill="#131313" transform="rotate(57 243 149)"/>
<ellipse cx="227" cy="198" rx="1.4" ry="1.3" fill="#131313" transform="rotate(9 227 198)"/>
<ellipse cx="297" cy="157" rx="1.2" ry="0.9" fill="#131313" transform="rotate(1 297 157)"/>
<ellipse cx="305" cy="198" rx="0.6" ry="0.5" fill="#131313" transform="rotate(44 305 198)"/>
<ellipse cx="279" cy="248" rx="1.2" ry="2.2" fill="#131313" transform="rotate(20 279 248)"/>
<ellipse cx="262" cy="229" rx="1.7" ry="1.0" fill="#131313" transform="rotate(49 262 229)"/>
<ellipse cx="230" cy="188" rx="1.4" ry="2.3" fill="#131313" transform="rotate(48 230 188)"/>
<ellipse cx="281" cy="212" rx="1.2" ry="1.9" fill="#131313" transform="rotate(43 281 212)"/>
<ellipse cx="270" cy="212" rx="0.8" ry="1.2" fill="#131313" transform="rotate(82 270 212)"/>
<ellipse cx="326" cy="147" rx="0.9" ry="0.9" fill="#131313" transform="rotate(11 326 147)"/>
<ellipse cx="310" cy="171" rx="1.7" ry="2.7" fill="#131313" transform="rotate(44 310 171)"/>
<ellipse cx="275" cy="137" rx="1.0" ry="1.1" fill="#131313" transform="rotate(35 275 137)"/>
<ellipse cx="273" cy="135" rx="1.6" ry="0.9" fill="#131313" transform="rotate(4 273 135)"/>
<ellipse cx="235" cy="173" rx="1.5" ry="1.1" fill="#131313" transform="rotate(19 235 173)"/>
<ellipse cx="277" cy="215" rx="1.1" ry="1.9" fill="#131313" transform="rotate(74 277 215)"/>
<ellipse cx="329" cy="143" rx="0.9" ry="1.0" fill="#131313" transform="rotate(37 329 143)"/>
<ellipse cx="315" cy="201" rx="0.8" ry="0.9" fill="#131313" transform="rotate(71 315 201)"/>
<ellipse cx="245" cy="215" rx="1.7" ry="2.8" fill="#131313" transform="rotate(78 245 215)"/>
<ellipse cx="239" cy="237" rx="1.8" ry="2.1" fill="#131313" transform="rotate(73 239 237)"/>
<ellipse cx="274" cy="183" rx="0.7" ry="0.4" fill="#131313" transform="rotate(48 274 183)"/>
<ellipse cx="217" cy="251" rx="1.2" ry="1.2" fill="#131313" transform="rotate(72 217 251)"/>
<ellipse cx="229" cy="143" rx="0.8" ry="1.4" fill="#131313" transform="rotate(58 229 143)"/>
<ellipse cx="264" cy="250" rx="1.7" ry="1.5" fill="#131313" transform="rotate(60 264 250)"/>
<ellipse cx="274" cy="174" rx="1.7" ry="2.9" fill="#131313" transform="rotate(60 274 174)"/>
<ellipse cx="278" cy="145" rx="1.1" ry="0.6" fill="#131313" transform="rotate(33 278 145)"/>
<ellipse cx="230" cy="228" rx="0.6" ry="0.5" fill="#131313" transform="rotate(29 230 228)"/>
<ellipse cx="215" cy="167" rx="1.5" ry="1.2" fill="#131313" transform="rotate(63 215 167)"/>
<ellipse cx="227" cy="222" rx="0.7" ry="0.9" fill="#131313" transform="rotate(32 227 222)"/>
<ellipse cx="301" cy="218" rx="1.7" ry="0.9" fill="#131313" transform="rotate(81 301 218)"/>
<ellipse cx="264" cy="197" rx="0.8" ry="0.6" fill="#131313" transform="rotate(80 264 197)"/>
<ellipse cx="279" cy="159" rx="0.9" ry="1.0" fill="#131313" transform="rotate(75 279 159)"/>
<ellipse cx="318" cy="161" rx="1.5" ry="2.3" fill="#131313" transform="rotate(23 318 161)"/>
<ellipse cx="252" cy="171" rx="1.7" ry="1.3" fill="#131313" transform="rotate(24 252 171)"/>
<ellipse cx="321" cy="148" rx="0.9" ry="1.3" fill="#131313" transform="rotate(33 321 148)"/>
<ellipse cx="261" cy="185" rx="1.7" ry="2.1" fill="#131313" transform="rotate(90 261 185)"/>
<ellipse cx="229" cy="182" rx="1.4" ry="0.7" fill="#131313" transform="rotate(25 229 182)"/>
<ellipse cx="283" cy="176" rx="1.6" ry="1.5" fill="#131313" transform="rotate(90 283 176)"/>
<ellipse cx="275" cy="225" rx="1.2" ry="1.7" fill="#131313" transform="rotate(24 275 225)"/>
<ellipse cx="311" cy="191" rx="0.6" ry="0.9" fill="#131313" transform="rotate(78 311 191)"/>
<ellipse cx="276" cy="202" rx="0.8" ry="0.6" fill="#131313" transform="rotate(26 276 202)"/>
<ellipse cx="235" cy="151" rx="0.9" ry="1.3" fill="#131313" transform="rotate(74 235 151)"/>
<ellipse cx="221" cy="249" rx="1.2" ry="1.7" fill="#131313" transform="rotate(41 221 249)"/>
<ellipse cx="261" cy="184" rx="1.0" ry="0.8" fill="#131313" transform="rotate(47 261 184)"/>
<ellipse cx="216" cy="218" rx="1.6" ry="1.2" fill="#131313" transform="rotate(58 216 218)"/>
<ellipse cx="258" cy="178" rx="1.7" ry="2.2" fill="#131313" transform="rotate(12 258 178)"/>
<ellipse cx="276" cy="134" rx="1.7" ry="2.6" fill="#131313" transform="rotate(90 276 134)"/>
<ellipse cx="237" cy="204" rx="1.0" ry="1.5" fill="#131313" transform="rotate(35 237 204)"/>
<ellipse cx="263" cy="242" rx="1.7" ry="2.3" fill="#131313" transform="rotate(55 263 242)"/>
<ellipse cx="307" cy="182" rx="1.5" ry="0.9" fill="#131313" transform="rotate(43 307 182)"/>
<ellipse cx="251" cy="144" rx="1.7" ry="3.0" fill="#131313" transform="rotate(79 251 144)"/>
<ellipse cx="220" cy="166" rx="1.8" ry="1.6" fill="#131313" transform="rotate(27 220 166)"/>
<ellipse cx="294" cy="202" rx="1.2" ry="1.2" fill="#131313" transform="rotate(63 294 202)"/>
<ellipse cx="292" cy="218" rx="1.5" ry="2.7" fill="#131313" transform="rotate(2 292 218)"/>
<ellipse cx="228" cy="145" rx="0.9" ry="1.0" fill="#131313" transform="rotate(64 228 145)"/>
<ellipse cx="220" cy="156" rx="1.1" ry="0.7" fill="#131313" transform="rotate(32 220 156)"/>
<ellipse cx="247" cy="174" rx="1.2" ry="1.3" fill="#131313" transform="rotate(66 247 174)"/>
<ellipse cx="283" cy="254" rx="1.4" ry="2.1" fill="#131313" transform="rotate(9 283 254)"/>
<ellipse cx="280" cy="214" rx="1.7" ry="1.8" fill="#131313" transform="rotate(20 280 214)"/>
<ellipse cx="261" cy="251" rx="1.6" ry="2.0" fill="#131313" transform="rotate(76 261 251)"/>
<ellipse cx="221" cy="248" rx="1.1" ry="1.3" fill="#131313" transform="rotate(76 221 248)"/>
<ellipse cx="252" cy="197" rx="1.2" ry="1.0" fill="#131313" transform="rotate(36 252 197)"/>
<ellipse cx="294" cy="224" rx="0.6" ry="1.0" fill="#131313" transform="rotate(74 294 224)"/>
<ellipse cx="219" cy="151" rx="1.5" ry="1.5" fill="#131313" transform="rotate(40 219 151)"/>
<ellipse cx="305" cy="138" rx="1.8" ry="3.1" fill="#131313" transform="rotate(9 305 138)"/>
<ellipse cx="311" cy="160" rx="1.5" ry="1.2" fill="#131313" transform="rotate(31 311 160)"/>
<ellipse cx="219" cy="144" rx="1.6" ry="2.6" fill="#131313" transform="rotate(18 219 144)"/>
<ellipse cx="287" cy="146" rx="1.3" ry="1.5" fill="#131313" transform="rotate(26 287 146)"/>
<ellipse cx="318" cy="176" rx="0.8" ry="0.8" fill="#131313" transform="rotate(17 318 176)"/>
<ellipse cx="295" cy="188" rx="0.9" ry="1.1" fill="#131313" transform="rotate(53 295 188)"/>
<ellipse cx="258" cy="223" rx="1.6" ry="1.1" fill="#131313" transform="rotate(37 258 223)"/>
<ellipse cx="303" cy="161" rx="0.7" ry="1.2" fill="#131313" transform="rotate(64 303 161)"/>
<ellipse cx="290" cy="176" rx="0.9" ry="1.3" fill="#131313" transform="rotate(72 290 176)"/>
<ellipse cx="299" cy="155" rx="0.9" ry="0.8" fill="#131313" transform="rotate(31 299 155)"/>
<ellipse cx="275" cy="212" rx="0.8" ry="1.2" fill="#131313" transform="rotate(80 275 212)"/>
<ellipse cx="221" cy="165" rx="1.1" ry="1.5" fill="#131313" transform="rotate(13 221 165)"/>
<ellipse cx="241" cy="166" rx="1.5" ry="2.5" fill="#131313" transform="rotate(20 241 166)"/>
<ellipse cx="281" cy="210" rx="1.0" ry="1.2" fill="#131313" transform="rotate(26 281 210)"/>
<ellipse cx="255" cy="193" rx="0.8" ry="1.2" fill="#131313" transform="rotate(15 255 193)"/>
<ellipse cx="268" cy="233" rx="1.6" ry="2.4" fill="#131313" transform="rotate(56 268 233)"/>
<ellipse cx="265" cy="164" rx="1.6" ry="1.5" fill="#131313" transform="rotate(83 265 164)"/>
<ellipse cx="315" cy="205" rx="0.9" ry="1.4" fill="#131313" transform="rotate(23 315 205)"/>
<ellipse cx="266" cy="177" rx="0.7" ry="1.2" fill="#131313" transform="rotate(10 266 177)"/>
<ellipse cx="280" cy="185" rx="1.3" ry="2.0" fill="#131313" transform="rotate(59 280 185)"/>
<ellipse cx="250" cy="227" rx="0.7" ry="0.5" fill="#131313" transform="rotate(84 250 227)"/>
<ellipse cx="287" cy="217" rx="1.2" ry="1.8" fill="#131313" transform="rotate(41 287 217)"/>
<ellipse cx="425" cy="852" rx="1.2" ry="1.2" fill="#0d0d0d"/>
<ellipse cx="448" cy="860" rx="0.9" ry="0.9" fill="#0d0d0d"/>
<ellipse cx="447" cy="867" rx="1.9" ry="1.9" fill="#0d0d0d"/>
<ellipse cx="459" cy="879" rx="1.3" ry="1.3" fill="#0d0d0d"/>
<ellipse cx="452" cy="858" rx="1.1" ry="1.1" fill="#0d0d0d"/>
<ellipse cx="431" cy="880" rx="1.9" ry="1.9" fill="#0d0d0d"/>
<ellipse cx="423" cy="860" rx="1.2" ry="1.2" fill="#0d0d0d"/>
<ellipse cx="429" cy="861" rx="1.2" ry="1.2" fill="#0d0d0d"/>
<ellipse cx="420" cy="867" rx="1.7" ry="1.7" fill="#0d0d0d"/>
<ellipse cx="438" cy="876" rx="1.4" ry="1.4" fill="#0d0d0d"/>
<ellipse cx="419" cy="874" rx="1.8" ry="1.8" fill="#0d0d0d"/>
<ellipse cx="425" cy="848" rx="1.4" ry="1.4" fill="#0d0d0d"/>
<ellipse cx="438" cy="867" rx="2.0" ry="2.0" fill="#0d0d0d"/>
<ellipse cx="444" cy="875" rx="0.8" ry="0.8" fill="#0d0d0d"/>
<ellipse cx="438" cy="875" rx="0.8" ry="0.8" fill="#0d0d0d"/>
<ellipse cx="414" cy="873" rx="1.9" ry="1.9" fill="#0d0d0d"/>
<ellipse cx="414" cy="869" rx="0.9" ry="0.9" fill="#0d0d0d"/>
<ellipse cx="449" cy="870" rx="1.0" ry="1.0" fill="#0d0d0d"/>
<ellipse cx="421" cy="874" rx="1.4" ry="1.4" fill="#0d0d0d"/>
<ellipse cx="450" cy="861" rx="1.1" ry="1.1" fill="#0d0d0d"/>
<ellipse cx="460" cy="871" rx="1.3" ry="1.3" fill="#0d0d0d"/>
<ellipse cx="438" cy="872" rx="1.6" ry="1.6" fill="#0d0d0d"/>
<ellipse cx="458" cy="861" rx="1.8" ry="1.8" fill="#0d0d0d"/>
<ellipse cx="445" cy="877" rx="1.7" ry="1.7" fill="#0d0d0d"/>
<ellipse cx="453" cy="878" rx="1.9" ry="1.9" fill="#0d0d0d"/>
<ellipse cx="443" cy="865" rx="1.6" ry="1.6" fill="#0d0d0d"/>
<ellipse cx="452" cy="862" rx="1.2" ry="1.2" fill="#0d0d0d"/>
<ellipse cx="418" cy="873" rx="2.0" ry="2.0" fill="#0d0d0d"/>
<ellipse cx="430" cy="853" rx="1.0" ry="1.0" fill="#0d0d0d"/>
<ellipse cx="432" cy="857" rx="2.0" ry="2.0" fill="#0d0d0d"/>
<ellipse cx="413" cy="858" rx="0.8" ry="0.8" fill="#0d0d0d"/>
<ellipse cx="444" cy="874" rx="0.9" ry="0.9" fill="#0d0d0d"/>
<ellipse cx="413" cy="863" rx="1.5" ry="1.5" fill="#0d0d0d"/>
<ellipse cx="457" cy="848" rx="0.8" ry="0.8" fill="#0d0d0d"/>
<ellipse cx="420" cy="855" rx="1.0" ry="1.0" fill="#0d0d0d"/>
<ellipse cx="447" cy="868" rx="1.0" ry="1.0" fill="#0d0d0d"/>
<ellipse cx="420" cy="857" rx="0.9" ry="0.9" fill="#0d0d0d"/>
<ellipse cx="449" cy="858" rx="1.4" ry="1.4" fill="#0d0d0d"/>
<ellipse cx="452" cy="864" rx="1.0" ry="1.0" fill="#0d0d0d"/>
<ellipse cx="456" cy="879" rx="1.1" ry="1.1" fill="#0d0d0d"/>
<ellipse cx="447" cy="988" rx="1.3" ry="1.3" fill="#0d0d0d"/>
<ellipse cx="419" cy="937" rx="1.9" ry="1.9" fill="#0d0d0d"/>
<ellipse cx="469" cy="956" rx="1.4" ry="1.4" fill="#0d0d0d"/>
<ellipse cx="444" cy="949" rx="2.0" ry="2.0" fill="#0d0d0d"/>
<ellipse cx="457" cy="947" rx="0.7" ry="0.7" fill="#0d0d0d"/>
<ellipse cx="441" cy="955" rx="1.7" ry="1.7" fill="#0d0d0d"/>
<ellipse cx="461" cy="968" rx="0.9" ry="0.9" fill="#0d0d0d"/>
<ellipse cx="413" cy="952" rx="1.0" ry="1.0" fill="#0d0d0d"/>
<ellipse cx="475" cy="963" rx="1.5" ry="1.5" fill="#0d0d0d"/>
<ellipse cx="485" cy="949" rx="1.4" ry="1.4" fill="#0d0d0d"/>
<ellipse cx="413" cy="977" rx="0.7" ry="0.7" fill="#0d0d0d"/>
<ellipse cx="471" cy="981" rx="1.8" ry="1.8" fill="#0d0d0d"/>
<ellipse cx="407" cy="949" rx="1.6" ry="1.6" fill="#0d0d0d"/>
<ellipse cx="408" cy="961" rx="1.3" ry="1.3" fill="#0d0d0d"/>
<ellipse cx="482" cy="967" rx="1.8" ry="1.8" fill="#0d0d0d"/>
<ellipse cx="426" cy="978" rx="1.2" ry="1.2" fill="#0d0d0d"/>
<ellipse cx="479" cy="939" rx="1.8" ry="1.8" fill="#0d0d0d"/>
<ellipse cx="418" cy="964" rx="1.4" ry="1.4" fill="#0d0d0d"/>
<ellipse cx="414" cy="981" rx="1.1" ry="1.1" fill="#0d0d0d"/>
<ellipse cx="427" cy="938" rx="1.1" ry="1.1" fill="#0d0d0d"/>
<ellipse cx="440" cy="974" rx="1.2" ry="1.2" fill="#0d0d0d"/>
<ellipse cx="459" cy="940" rx="1.2" ry="1.2" fill="#0d0d0d"/>
<ellipse cx="440" cy="988" rx="1.8" ry="1.8" fill="#0d0d0d"/>
<ellipse cx="456" cy="935" rx="1.2" ry="1.2" fill="#0d0d0d"/>
<ellipse cx="461" cy="947" rx="1.4" ry="1.4" fill="#0d0d0d"/>
<ellipse cx="439" cy="935" rx="2.0" ry="2.0" fill="#0d0d0d"/>
<ellipse cx="469" cy="946" rx="1.5" ry="1.5" fill="#0d0d0d"/>
<ellipse cx="425" cy="955" rx="1.4" ry="1.4" fill="#0d0d0d"/>
<ellipse cx="426" cy="953" rx="1.2" ry="1.2" fill="#0d0d0d"/>
<ellipse cx="457" cy="948" rx="1.0" ry="1.0" fill="#0d0d0d"/>
<ellipse cx="463" cy="952" rx="1.9" ry="1.9" fill="#0d0d0d"/>
<ellipse cx="448" cy="975" rx="1.1" ry="1.1" fill="#0d0d0d"/>
<ellipse cx="471" cy="939" rx="0.9" ry="0.9" fill="#0d0d0d"/>
<ellipse cx="408" cy="972" rx="1.6" ry="1.6" fill="#0d0d0d"/>
<ellipse cx="415" cy="957" rx="1.8" ry="1.8" fill="#0d0d0d"/>
<ellipse cx="451" cy="939" rx="1.0" ry="1.0" fill="#0d0d0d"/>
<ellipse cx="414" cy="941" rx="1.2" ry="1.2" fill="#0d0d0d"/>
<ellipse cx="406" cy="986" rx="1.3" ry="1.3" fill="#0d0d0d"/>
<ellipse cx="444" cy="970" rx="1.7" ry="1.7" fill="#0d0d0d"/>
<ellipse cx="471" cy="956" rx="1.1" ry="1.1" fill="#0d0d0d"/>
<ellipse cx="435" cy="935" rx="1.2" ry="1.2" fill="#0d0d0d"/>
<ellipse cx="460" cy="989" rx="1.7" ry="1.7" fill="#0d0d0d"/>
<ellipse cx="457" cy="968" rx="0.7" ry="0.7" fill="#0d0d0d"/>
<ellipse cx="428" cy="953" rx="1.5" ry="1.5" fill="#0d0d0d"/>
<ellipse cx="409" cy="955" rx="1.4" ry="1.4" fill="#0d0d0d"/>
<ellipse cx="468" cy="980" rx="1.5" ry="1.5" fill="#0d0d0d"/>
<ellipse cx="414" cy="977" rx="1.9" ry="1.9" fill="#0d0d0d"/>
<ellipse cx="447" cy="954" rx="1.4" ry="1.4" fill="#0d0d0d"/>
<ellipse cx="412" cy="974" rx="2.0" ry="2.0" fill="#0d0d0d"/>
<ellipse cx="444" cy="974" rx="1.8" ry="1.8" fill="#0d0d0d"/>
<ellipse cx="417" cy="987" rx="1.5" ry="1.5" fill="#0d0d0d"/>
<ellipse cx="417" cy="939" rx="1.0" ry="1.0" fill="#0d0d0d"/>
<ellipse cx="450" cy="973" rx="1.1" ry="1.1" fill="#0d0d0d"/>
<ellipse cx="480" cy="954" rx="1.3" ry="1.3" fill="#0d0d0d"/>
<ellipse cx="411" cy="989" rx="0.9" ry="0.9" fill="#0d0d0d"/>
<ellipse cx="478" cy="964" rx="1.4" ry="1.4" fill="#0d0d0d"/>
<ellipse cx="448" cy="949" rx="1.9" ry="1.9" fill="#0d0d0d"/>
<ellipse cx="485" cy="980" rx="1.5" ry="1.5" fill="#0d0d0d"/>
<ellipse cx="411" cy="980" rx="1.1" ry="1.1" fill="#0d0d0d"/>
<ellipse cx="477" cy="947" rx="1.4" ry="1.4" fill="#0d0d0d"/>
<ellipse cx="471" cy="944" rx="1.4" ry="1.4" fill="#0d0d0d"/>
<ellipse cx="407" cy="936" rx="0.9" ry="0.9" fill="#0d0d0d"/>
<ellipse cx="485" cy="987" rx="1.6" ry="1.6" fill="#0d0d0d"/>
<ellipse cx="426" cy="972" rx="1.7" ry="1.7" fill="#0d0d0d"/>
<ellipse cx="433" cy="967" rx="1.7" ry="1.7" fill="#0d0d0d"/>
<ellipse cx="401" cy="945" rx="1.3" ry="1.3" fill="#0d0d0d"/>
<ellipse cx="412" cy="956" rx="1.4" ry="1.4" fill="#0d0d0d"/>
<ellipse cx="415" cy="963" rx="1.0" ry="1.0" fill="#0d0d0d"/>
<ellipse cx="449" cy="953" rx="1.5" ry="1.5" fill="#0d0d0d"/>
<ellipse cx="403" cy="972" rx="0.9" ry="0.9" fill="#0d0d0d"/>
<ellipse cx="598" cy="969" rx="1.3" ry="1.3" fill="#0d0d0d"/>
<ellipse cx="568" cy="971" rx="1.6" ry="1.6" fill="#0d0d0d"/>
<ellipse cx="587" cy="979" rx="1.3" ry="1.3" fill="#0d0d0d"/>
<ellipse cx="600" cy="984" rx="1.8" ry="1.8" fill="#0d0d0d"/>
<ellipse cx="567" cy="958" rx="1.4" ry="1.4" fill="#0d0d0d"/>
<ellipse cx="595" cy="964" rx="1.4" ry="1.4" fill="#0d0d0d"/>
<ellipse cx="569" cy="989" rx="1.1" ry="1.1" fill="#0d0d0d"/>
<ellipse cx="548" cy="977" rx="1.9" ry="1.9" fill="#0d0d0d"/>
<ellipse cx="585" cy="969" rx="1.7" ry="1.7" fill="#0d0d0d"/>
<ellipse cx="562" cy="969" rx="0.8" ry="0.8" fill="#0d0d0d"/>
<ellipse cx="552" cy="959" rx="1.4" ry="1.4" fill="#0d0d0d"/>
<ellipse cx="567" cy="933" rx="1.6" ry="1.6" fill="#0d0d0d"/>
<ellipse cx="574" cy="946" rx="1.1" ry="1.1" fill="#0d0d0d"/>
<ellipse cx="567" cy="945" rx="0.8" ry="0.8" fill="#0d0d0d"/>
<ellipse cx="595" cy="993" rx="1.6" ry="1.6" fill="#0d0d0d"/>
<ellipse cx="593" cy="957" rx="1.7" ry="1.7" fill="#0d0d0d"/>
<ellipse cx="557" cy="979" rx="1.4" ry="1.4" fill="#0d0d0d"/>
<ellipse cx="595" cy="936" rx="1.7" ry="1.7" fill="#0d0d0d"/>
<ellipse cx="552" cy="965" rx="1.9" ry="1.9" fill="#0d0d0d"/>
<ellipse cx="545" cy="946" rx="1.1" ry="1.1" fill="#0d0d0d"/>
<ellipse cx="563" cy="934" rx="1.9" ry="1.9" fill="#0d0d0d"/>
<ellipse cx="590" cy="956" rx="1.2" ry="1.2" fill="#0d0d0d"/>
<ellipse cx="577" cy="933" rx="0.7" ry="0.7" fill="#0d0d0d"/>
<ellipse cx="594" cy="950" rx="1.3" ry="1.3" fill="#0d0d0d"/>
<ellipse cx="596" cy="994" rx="1.3" ry="1.3" fill="#0d0d0d"/>
<ellipse cx="556" cy="949" rx="1.9" ry="1.9" fill="#0d0d0d"/>
<ellipse cx="594" cy="943" rx="1.8" ry="1.8" fill="#0d0d0d"/>
<ellipse cx="564" cy="961" rx="0.9" ry="0.9" fill="#0d0d0d"/>
<ellipse cx="593" cy="995" rx="1.0" ry="1.0" fill="#0d0d0d"/>
<ellipse cx="580" cy="942" rx="1.8" ry="1.8" fill="#0d0d0d"/>
<path d="M474.0 521.0 L510.0 521.0 L510.0 543.0 L494.0 554.0 L483.0 554.0 L483.0 543.0 L474.0 538.6Z" fill="#181818"/>
<path d="M529.7 494.0 L543.0 492.0 L543.0 505.0 L530.0 505.0Z" fill="#181818"/>
<path d="M285.0 255.0 L330.0 250.0 L332.0 290.0 L290.0 292.0Z" fill="#1c1c1c"/>
<defs><pattern id="grid" width="5" height="5" patternUnits="userSpaceOnUse" patternTransform="rotate(8)"><path d="M0 .5h5M.5 0v5" stroke="#707070" stroke-width=".8"/></pattern><pattern id="grid2" width="6" height="6" patternUnits="userSpaceOnUse"><path d="M0 .5h6M.5 0v6" stroke="#686868" stroke-width=".7"/></pattern></defs>
<path d="M578.0 392.0 L600.0 376.0 L640.0 378.0 L648.0 400.0 L644.0 440.0 L636.0 452.0 L612.0 468.0 L604.0 500.0 L606.0 540.0 L590.0 548.0 L575.0 520.0 L570.0 460.0 L572.0 420.0Z" fill="url(#grid)"/>
<path d="M694.0 410.0 L730.0 410.0 L732.0 452.0 L700.0 452.0 L690.0 440.0Z" fill="url(#grid2)"/>
<path d="M652.0 470.0 L700.0 470.0 L706.0 500.0 L700.0 540.0 L676.0 540.0 L660.0 500.0Z" fill="url(#grid2)"/>
<path d="M812.0 428.0 L822.0 428.0 L828.0 520.0 L818.0 520.0Z" fill="url(#grid2)"/>
<path d="M774.0 181.0 L792.0 181.0 L792.0 228.0 L774.0 228.0Z" fill="url(#grid2)"/>
<path d="M545.0 478.0 L572.0 478.0 L572.0 520.0 L545.0 520.0Z" fill="url(#grid2)"/>
<path d="M570.0 560.0 L610.0 560.0 L606.0 600.0 L575.0 600.0Z" fill="url(#grid2)"/>
<path d="M655.0 565.0 L700.0 575.0 L700.0 600.0 L660.0 600.0Z" fill="url(#grid2)"/>
<path d="M211.0 299.0 L237.0 309.0 L255.0 304.0" stroke="#6e6e6e" stroke-width="1" fill="none" stroke-linejoin="round" />
<path d="M255.0 304.0 L264.0 322.0 L261.0 348.0 L254.0 365.0 L255.0 385.0 L251.0 414.0 L244.0 429.0" stroke="#6e6e6e" stroke-width="1" fill="none" stroke-linejoin="round" />
<path d="M214.0 364.0 L254.0 365.0" stroke="#6e6e6e" stroke-width="1" fill="none" stroke-linejoin="round" />
<path d="M214.0 364.0 L251.0 417.0" stroke="#6e6e6e" stroke-width="1" fill="none" stroke-linejoin="round" />
<path d="M423.0 128.0 L413.0 143.0 L395.0 158.0 L390.0 181.0 L392.0 204.0 L404.0 221.0 L411.0 235.0 L413.0 264.0 L415.0 293.0 L413.0 322.0 L407.0 351.0 L392.0 374.0 L390.0 394.0 L398.0 420.0 L404.0 429.0 L404.0 471.0" stroke="#6e6e6e" stroke-width="1" fill="none" stroke-linejoin="round" />
<path d="M391.0 178.0 L459.0 178.0" stroke="#6e6e6e" stroke-width="1" fill="none" stroke-linejoin="round" />
<path d="M411.0 232.0 L450.0 204.0 L459.0 198.0" stroke="#6e6e6e" stroke-width="1" fill="none" stroke-linejoin="round" />
<path d="M413.0 267.0 L476.0 277.0 L516.0 271.0" stroke="#6e6e6e" stroke-width="1" fill="none" stroke-linejoin="round" />
<path d="M453.0 306.0 L490.0 312.0 L516.0 279.0" stroke="#6e6e6e" stroke-width="1" fill="none" stroke-linejoin="round" />
<path d="M490.0 312.0 L470.0 339.0 L459.0 368.0 L447.0 420.0 L440.0 450.0 L433.0 484.0" stroke="#6e6e6e" stroke-width="1" fill="none" stroke-linejoin="round" />
<path d="M473.0 166.0 L540.0 169.0 L605.0 163.0 L640.0 160.0" stroke="#6e6e6e" stroke-width="1" fill="none" stroke-linejoin="round" />
<path d="M531.0 128.0 L537.0 158.0 L551.0 178.0 L554.0 195.0 L550.0 215.0 L534.0 224.0 L511.0 215.0" stroke="#6e6e6e" stroke-width="1" fill="none" stroke-linejoin="round" />
<path d="M525.0 250.0 L580.0 235.0 L605.0 228.0 L640.0 222.0" stroke="#6e6e6e" stroke-width="1" fill="none" stroke-linejoin="round" />
<path d="M551.0 215.0 L605.0 214.0 L635.0 212.0" stroke="#6e6e6e" stroke-width="1" fill="none" stroke-linejoin="round" />
<path d="M528.0 276.0 L557.0 280.0 L565.0 302.0 L586.0 328.0 L605.0 339.0 L630.0 345.0" stroke="#6e6e6e" stroke-width="1" fill="none" stroke-linejoin="round" />
<path d="M511.0 332.0 L525.0 351.0 L565.0 368.0 L590.0 372.0" stroke="#6e6e6e" stroke-width="1" fill="none" stroke-linejoin="round" />
<path d="M211.0 429.0 L245.0 429.0 L234.0 466.0 L222.0 478.0" stroke="#6e6e6e" stroke-width="1" fill="none" stroke-linejoin="round" />
<path d="M248.0 411.0 L244.0 429.0" stroke="#6e6e6e" stroke-width="1" fill="none" stroke-linejoin="round" />
<path d="M237.0 538.0 L277.0 531.0 L320.0 535.0 L366.0 543.0" stroke="#6e6e6e" stroke-width="1" fill="none" stroke-linejoin="round" />
<path d="M234.0 521.0 L231.0 544.0 L225.0 567.0 L214.0 590.0" stroke="#6e6e6e" stroke-width="1" fill="none" stroke-linejoin="round" />
<path d="M297.0 507.0 L297.0 550.0 L283.0 576.0 L283.0 593.0" stroke="#6e6e6e" stroke-width="1" fill="none" stroke-linejoin="round" />
<path d="M323.0 512.0 L306.0 535.0 L300.0 553.0" stroke="#6e6e6e" stroke-width="1" fill="none" stroke-linejoin="round" />
<path d="M320.0 426.0 L325.0 478.0" stroke="#6e6e6e" stroke-width="1" fill="none" stroke-linejoin="round" />
<path d="M450.0 414.0 L464.0 429.0 L479.0 458.0" stroke="#6e6e6e" stroke-width="1" fill="none" stroke-linejoin="round" />
<path d="M479.0 456.0 L511.0 449.0 L540.0 452.0" stroke="#6e6e6e" stroke-width="1" fill="none" stroke-linejoin="round" />
<path d="M433.0 484.0 L444.0 515.0 L482.0 515.0" stroke="#6e6e6e" stroke-width="1" fill="none" stroke-linejoin="round" />
<path d="M413.0 550.0 L413.0 573.0 L404.0 593.0" stroke="#6e6e6e" stroke-width="1" fill="none" stroke-linejoin="round" />
<path d="M430.0 654.0 L465.0 654.0" stroke="#6e6e6e" stroke-width="1" fill="none" stroke-linejoin="round" />
<path d="M537.0 648.0 L537.0 700.0" stroke="#6e6e6e" stroke-width="1" fill="none" stroke-linejoin="round" />
<path d="M537.0 672.0 L568.0 668.0 L603.0 688.0" stroke="#6e6e6e" stroke-width="1" fill="none" stroke-linejoin="round" />
<path d="M455.0 802.6 L464.0 813.0 L458.8 847.6 L462.0 865.0 L455.0 882.0 L458.8 916.8 L474.4 951.4 L483.0 972.0 L479.6 997.0" stroke="#6e6e6e" stroke-width="1" fill="none" stroke-linejoin="round" />
<path d="M545.0 721.0 L554.0 775.0 L543.6 806.0 L545.0 854.5 L562.6 882.0 L580.0 906.4 L592.0 927.0 L592.0 958.0 L599.0 997.0" stroke="#6e6e6e" stroke-width="1" fill="none" stroke-linejoin="round" />
<path d="M476.0 775.0 L490.0 778.4 L491.7 790.5 L517.6 783.6 L554.0 773.0 L573.0 759.4 L581.7 743.8 L583.4 721.0" stroke="#6e6e6e" stroke-width="1" fill="none" stroke-linejoin="round" />
<path d="M510.7 674.6 L514.0 721.0" stroke="#6e6e6e" stroke-width="1" fill="none" stroke-linejoin="round" />
<path d="M586.9 692.0 L588.6 719.6" stroke="#6e6e6e" stroke-width="1" fill="none" stroke-linejoin="round" />
<path d="M651.0 743.8 L621.5 764.6" stroke="#6e6e6e" stroke-width="1" fill="none" stroke-linejoin="round" />
<path d="M628.4 730.0 L642.0 771.5 L663.0 820.0 L659.5 847.6 L649.0 885.7" stroke="#6e6e6e" stroke-width="1" fill="none" stroke-linejoin="round" />
<path d="M416.0 847.0 L430.0 852.0 L436.0 845.0 L447.0 848.0 L452.0 858.0" stroke="#6e6e6e" stroke-width="1" fill="none" stroke-linejoin="round" />
<path d="M366.0 725.0 L380.0 750.0 L395.0 760.0" stroke="#6e6e6e" stroke-width="1" fill="none" stroke-linejoin="round" />
<path d="M372.0 740.0 L395.0 740.0 L395.0 755.0" stroke="#6e6e6e" stroke-width="1" fill="none" stroke-linejoin="round" />
<path d="M335.0 970.0 L360.0 930.0 L383.0 895.0" stroke="#6e6e6e" stroke-width="1" fill="none" stroke-linejoin="round" />
<path d="M370.0 895.0 L400.0 905.0 L395.0 920.0" stroke="#6e6e6e" stroke-width="1" fill="none" stroke-linejoin="round" />
<path d="M680.0 772.0 L700.0 760.0 L740.0 780.0 L770.0 770.0 L800.0 760.0" stroke="#6e6e6e" stroke-width="1" fill="none" stroke-linejoin="round" />
<path d="M748.0 700.0 L748.0 780.0 L745.0 860.0 L746.0 927.0" stroke="#6e6e6e" stroke-width="1" fill="none" stroke-linejoin="round" />
<path d="M706.0 828.0 L745.0 818.0 L800.0 808.0 L850.0 800.0" stroke="#6e6e6e" stroke-width="1" fill="none" stroke-linejoin="round" />
<path d="M708.0 862.0 L760.0 872.0 L795.0 872.0 L795.0 920.0" stroke="#6e6e6e" stroke-width="1" fill="none" stroke-linejoin="round" />
<path d="M690.0 745.0 L715.0 750.0 L725.0 780.0 L712.0 812.0" stroke="#6e6e6e" stroke-width="1" fill="none" stroke-linejoin="round" />
<path d="M745.0 830.0 L760.0 860.0 L758.0 900.0" stroke="#6e6e6e" stroke-width="1" fill="none" stroke-linejoin="round" />
<path d="M735.0 935.0 L775.0 945.0 L800.0 965.0 L830.0 975.0 L870.0 972.0" stroke="#6e6e6e" stroke-width="1" fill="none" stroke-linejoin="round" />
<path d="M730.0 965.0 L760.0 965.0 L760.0 950.0" stroke="#6e6e6e" stroke-width="1" fill="none" stroke-linejoin="round" />
<path d="M700.0 812.0 L690.0 800.0" stroke="#6e6e6e" stroke-width="1" fill="none" stroke-linejoin="round" />
<path d="M660.0 600.0 L700.0 610.0 L720.0 640.0 L740.0 655.0" stroke="#6e6e6e" stroke-width="1" fill="none" stroke-linejoin="round" />
<path d="M672.0 640.0 L700.0 650.0 L720.0 690.0 L745.0 700.0" stroke="#6e6e6e" stroke-width="1" fill="none" stroke-linejoin="round" />
<path d="M635.0 720.0 L660.0 700.0 L690.0 690.0 L710.0 700.0" stroke="#6e6e6e" stroke-width="1" fill="none" stroke-linejoin="round" />
<path d="M690.0 690.0 L700.0 650.0" stroke="#6e6e6e" stroke-width="1" fill="none" stroke-linejoin="round" />
<path d="M704.5 181.0 L717.0 185.6 L718.5 181.7 L723.0 181.7 L724.8 195.0 L728.0 196.5 L726.0 224.6" stroke="#6e6e6e" stroke-width="1" fill="none" stroke-linejoin="round" />
<path d="M715.4 216.8 L718.5 185.6" stroke="#6e6e6e" stroke-width="1" fill="none" stroke-linejoin="round" />
<path d="M650.0 162.0 L661.7 157.6 L657.8 177.8 L650.0 188.7" stroke="#6e6e6e" stroke-width="1" fill="none" stroke-linejoin="round" />
<path d="M656.0 230.8 L662.5 235.5 L681.0 232.4 L692.0 227.0" stroke="#6e6e6e" stroke-width="1" fill="none" stroke-linejoin="round" />
<path d="M681.0 220.0 L681.0 240.0 L692.0 239.4 L696.7 235.5 L692.0 223.0" stroke="#6e6e6e" stroke-width="1" fill="none" stroke-linejoin="round" />
<path d="M715.4 227.7 L715.4 243.0 L718.5 248.0 L734.0 249.5" stroke="#6e6e6e" stroke-width="1" fill="none" stroke-linejoin="round" />
<path d="M735.0 251.0 L734.0 263.5 L729.4 268.0" stroke="#6e6e6e" stroke-width="1" fill="none" stroke-linejoin="round" />
<path d="M734.0 263.5 L740.0 267.4" stroke="#6e6e6e" stroke-width="1" fill="none" stroke-linejoin="round" />
<path d="M795.0 180.0 L792.0 215.0 L788.0 240.0 L784.0 262.0 L786.0 290.0 L792.0 320.0 L800.0 345.0" stroke="#6e6e6e" stroke-width="1" fill="none" stroke-linejoin="round" />
<path d="M700.0 330.0 L740.0 330.0 L760.0 345.0 L790.0 345.0" stroke="#6e6e6e" stroke-width="1" fill="none" stroke-linejoin="round" />
<path d="M660.0 330.0 L700.0 330.0" stroke="#6e6e6e" stroke-width="1" fill="none" stroke-linejoin="round" />
<path d="M720.0 128.0 L730.0 160.0 L745.0 175.0" stroke="#6e6e6e" stroke-width="1" fill="none" stroke-linejoin="round" />
<path d="M780.0 330.0 L795.0 360.0 L800.0 395.0" stroke="#6e6e6e" stroke-width="1" fill="none" stroke-linejoin="round" />
<path d="M770.0 420.0 L775.0 470.0 L780.0 510.0" stroke="#6e6e6e" stroke-width="1" fill="none" stroke-linejoin="round" />
<path d="M838.0 600.0 L842.0 640.0 L846.0 660.0" stroke="#6e6e6e" stroke-width="1" fill="none" stroke-linejoin="round" />
<path d="M255.0 304.0 L300.0 300.0 L340.0 304.0 L380.0 302.0 L413.0 303.0 L450.0 305.0" stroke="#4a4a4a" stroke-width="1.2" fill="none" stroke-linejoin="round" />
<path d="M211.0 670.0 L257.0 648.0 L263.0 616.0 L312.0 588.0 L340.0 570.0" stroke="#4a4a4a" stroke-width="1.2" fill="none" stroke-linejoin="round" />
<path d="M358.0 687.0 L340.0 760.0 L322.0 830.0 L300.0 880.0 L295.0 940.0 L300.0 997.0" stroke="#4a4a4a" stroke-width="1.2" fill="none" stroke-linejoin="round" />
<path d="M348.0 690.0 L330.0 750.0 L300.0 850.0 L285.0 900.0" stroke="#4a4a4a" stroke-width="1.2" fill="none" stroke-linejoin="round" />
<path d="M211.0 780.0 L260.0 770.0 L300.0 760.0 L340.0 750.0" stroke="#4a4a4a" stroke-width="1.2" fill="none" stroke-linejoin="round" />
<path d="M290.0 880.0 L310.0 930.0 L330.0 997.0" stroke="#4a4a4a" stroke-width="1.2" fill="none" stroke-linejoin="round" />
<path d="M211.0 945.0 L250.0 900.0 L290.0 875.0" stroke="#4a4a4a" stroke-width="1.2" fill="none" stroke-linejoin="round" />
<path d="M365.0 128.0 L372.0 200.0 L380.0 280.0 L390.0 340.0" stroke="#4a4a4a" stroke-width="1.2" fill="none" stroke-linejoin="round" />
<path d="M380.0 128.0 L384.0 180.0 L392.0 250.0" stroke="#4a4a4a" stroke-width="1.2" fill="none" stroke-linejoin="round" />
<path d="M211.0 720.0 L250.0 730.0 L290.0 720.0 L322.0 740.0" stroke="#4a4a4a" stroke-width="1.2" fill="none" stroke-linejoin="round" />
<path d="M540.0 128.0 L560.0 180.0 L600.0 250.0 L640.0 330.0" stroke="#4a4a4a" stroke-width="1.2" fill="none" stroke-linejoin="round" />
<path d="M420.0 128.0 L400.0 180.0 L395.0 240.0 L400.0 300.0 L392.0 360.0" stroke="#4a4a4a" stroke-width="1.2" fill="none" stroke-linejoin="round" />
<path d="M322.0 700.0 C321.3 705.0 318.3 720.0 318.0 730.0 C317.7 740.0 318.0 750.0 320.0 760.0 C322.0 770.0 328.3 785.0 330.0 790.0" stroke="#3a3a3a" stroke-width="3" fill="none" stroke-linejoin="round" />
<text x="721" y="146" font-size="11.6" fill="#8c8c8c"  opacity="1" font-family="Liberation Sans,sans-serif">St Marys</text>
<text x="777" y="189" font-size="11.6" fill="#8c8c8c"  opacity="1" font-family="Liberation Sans,sans-serif">Fernandina</text>
<text x="777" y="200" font-size="11.6" fill="#8c8c8c"  opacity="1" font-family="Liberation Sans,sans-serif">Beach</text>
<text x="683" y="219" font-size="11.6" fill="#8c8c8c"  opacity="1" font-family="Liberation Sans,sans-serif">Yulee</text>
<text x="333" y="491" font-size="11.6" fill="#8c8c8c"  opacity="1" font-family="Liberation Sans,sans-serif">Macclenny</text>
<text x="232" y="515" font-size="11.6" fill="#777"  opacity="1" font-family="Liberation Sans,sans-serif">Sanderson</text>
<text x="816" y="449" font-size="11.6" fill="#8c8c8c"  opacity="1" font-family="Liberation Sans,sans-serif">Atlantic</text>
<text x="816" y="460" font-size="11.6" fill="#8c8c8c"  opacity="1" font-family="Liberation Sans,sans-serif">Beach</text>
<text x="822" y="484" font-size="11.6" fill="#8c8c8c"  opacity="1" font-family="Liberation Sans,sans-serif">Jacksonville</text>
<text x="822" y="495" font-size="11.6" fill="#8c8c8c"  opacity="1" font-family="Liberation Sans,sans-serif">Beach</text>
<text x="829" y="528" font-size="11.6" fill="#8c8c8c"  opacity="1" font-family="Liberation Sans,sans-serif">Ponte</text>
<text x="829" y="539" font-size="11.6" fill="#8c8c8c"  opacity="1" font-family="Liberation Sans,sans-serif">Vedra</text>
<text x="829" y="550" font-size="11.6" fill="#8c8c8c"  opacity="1" font-family="Liberation Sans,sans-serif">Beach</text>
<text x="614" y="579" font-size="11.6" fill="#8c8c8c"  opacity="1" font-family="Liberation Sans,sans-serif">Orange</text>
<text x="614" y="590" font-size="11.6" fill="#8c8c8c"  opacity="1" font-family="Liberation Sans,sans-serif">Park</text>
<text x="610" y="627" font-size="11.6" fill="#8c8c8c"  opacity="1" font-family="Liberation Sans,sans-serif">Fleming</text>
<text x="610" y="638" font-size="11.6" fill="#8c8c8c"  opacity="1" font-family="Liberation Sans,sans-serif">Island</text>
<text x="503" y="660" font-size="11.6" fill="#8c8c8c"  opacity="1" font-family="Liberation Sans,sans-serif">Middleburg</text>
<text x="664" y="619" font-size="11.6" fill="#8c8c8c"  opacity="1" font-family="Liberation Sans,sans-serif">St Johns</text>
<text x="773" y="632" font-size="11.6" fill="#8c8c8c"  opacity="1" font-family="Liberation Sans,sans-serif">Ponte</text>
<text x="773" y="643" font-size="11.6" fill="#8c8c8c"  opacity="1" font-family="Liberation Sans,sans-serif">Vedra</text>
<text x="628" y="713" font-size="11.6" fill="#8c8c8c"  opacity="1" font-family="Liberation Sans,sans-serif">Green</text>
<text x="621" y="724" font-size="11.6" fill="#8c8c8c"  opacity="1" font-family="Liberation Sans,sans-serif">Cove Springs</text>
<text x="338" y="750" font-size="11.6" fill="#8c8c8c"  opacity="1" font-family="Liberation Sans,sans-serif">Starke</text>
<text x="381" y="935" font-size="11.6" fill="#8c8c8c"  opacity="1" font-family="Liberation Sans,sans-serif">Melrose</text>
<text x="874" y="796" font-size="11.6" fill="#8c8c8c"  opacity="1" font-family="Liberation Sans,sans-serif">St Augustine</text>
<text x="895" y="819" font-size="11.6" fill="#8c8c8c"  opacity="1" font-family="Liberation Sans,sans-serif">St Augustine</text>
<text x="895" y="830" font-size="11.6" fill="#8c8c8c"  opacity="1" font-family="Liberation Sans,sans-serif">Beach</text>
<text x="656" y="985" font-size="11.6" fill="#8c8c8c"  opacity="1" font-family="Liberation Sans,sans-serif">Palatka</text>
<text x="211" y="978" font-size="13" fill="#959595" font-weight="bold" opacity="1" font-family="Liberation Sans,sans-serif">inesville</text>
<ellipse cx="449" cy="145" rx="9.0" ry="7.5" fill="#777"/><text x="449" y="148.5" font-size="9" font-style="italic" font-weight="bold" text-anchor="middle" fill="#2a2a2a" font-family="Liberation Sans,sans-serif">23</text>
<ellipse cx="468" cy="167" rx="8.0" ry="7.5" fill="#777"/><text x="468" y="170.5" font-size="9" font-style="italic" font-weight="bold" text-anchor="middle" fill="#2a2a2a" font-family="Liberation Sans,sans-serif">1</text>
<ellipse cx="527" cy="271" rx="9.0" ry="7.5" fill="#777"/><text x="527" y="274.5" font-size="9" font-style="italic" font-weight="bold" text-anchor="middle" fill="#2a2a2a" font-family="Liberation Sans,sans-serif">75</text>
<ellipse cx="485" cy="322" rx="12.0" ry="7.5" fill="#777"/><text x="485" y="325.5" font-size="9" font-style="italic" font-weight="bold" text-anchor="middle" fill="#2a2a2a" font-family="Liberation Sans,sans-serif">200</text>
<ellipse cx="566" cy="360" rx="9.0" ry="7.5" fill="#777"/><text x="566" y="363.5" font-size="9" font-style="italic" font-weight="bold" text-anchor="middle" fill="#2a2a2a" font-family="Liberation Sans,sans-serif">23</text>
<ellipse cx="390" cy="572" rx="13.0" ry="7.5" fill="#777"/><text x="390" y="575.5" font-size="9" font-style="italic" font-weight="bold" text-anchor="middle" fill="#2a2a2a" font-family="Liberation Sans,sans-serif">200</text>
<ellipse cx="348" cy="687" rx="12.0" ry="7.5" fill="#777"/><text x="348" y="690.5" font-size="9" font-style="italic" font-weight="bold" text-anchor="middle" fill="#2a2a2a" font-family="Liberation Sans,sans-serif">301</text>
<ellipse cx="256" cy="895" rx="10.0" ry="7.5" fill="#777"/><text x="256" y="898.5" font-size="9" font-style="italic" font-weight="bold" text-anchor="middle" fill="#2a2a2a" font-family="Liberation Sans,sans-serif">24</text>
<ellipse cx="627" cy="971" rx="8.0" ry="7.5" fill="#777"/><text x="627" y="974.5" font-size="9" font-style="italic" font-weight="bold" text-anchor="middle" fill="#2a2a2a" font-family="Liberation Sans,sans-serif">17</text>
<ellipse cx="638" cy="130" rx="8.0" ry="7.5" fill="#777"/><text x="638" y="133.5" font-size="9" font-style="italic" font-weight="bold" text-anchor="middle" fill="#2a2a2a" font-family="Liberation Sans,sans-serif">95</text>
<ellipse cx="662" cy="162" rx="8.0" ry="7.5" fill="#777"/><text x="662" y="165.5" font-size="9" font-style="italic" font-weight="bold" text-anchor="middle" fill="#2a2a2a" font-family="Liberation Sans,sans-serif">95</text>
<ellipse cx="653" cy="232" rx="8.0" ry="7.5" fill="#777"/><text x="653" y="235.5" font-size="9" font-style="italic" font-weight="bold" text-anchor="middle" fill="#2a2a2a" font-family="Liberation Sans,sans-serif">17</text>
<ellipse cx="658" cy="295" rx="9.0" ry="7.5" fill="#777"/><text x="658" y="298.5" font-size="9" font-style="italic" font-weight="bold" text-anchor="middle" fill="#2a2a2a" font-family="Liberation Sans,sans-serif">95</text>
<ellipse cx="818" cy="826" rx="11.0" ry="7.5" fill="#777"/><text x="818" y="829.5" font-size="9" font-style="italic" font-weight="bold" text-anchor="middle" fill="#2a2a2a" font-family="Liberation Sans,sans-serif">95</text>
<text x="662" y="471" font-size="15" fill="#7a7a7a" font-weight="bold" font-family="Liberation Sans,sans-serif">Jacksonville</text>
<path d="M441.0 128.0 L473.0 181.0 L505.0 212.0 L525.0 250.0 L522.0 264.0 L548.0 308.0 L557.0 340.0" stroke="#40e0d0" stroke-width="1.3" fill="none" stroke-linejoin="round" />
<path d="M557.0 340.0 L566.5 363.0 L578.0 386.0 L587.0 404.6 L594.0 418.4 L603.4 431.0 L615.0 440.0 L624.0 448.0" stroke="#40e0d0" stroke-width="2.8" fill="none" stroke-linejoin="round" />
<path d="M420.0 484.0 L400.0 540.0 L386.0 590.0 L375.0 619.0" stroke="#40e0d0" stroke-width="1.3" fill="none" stroke-linejoin="round" />
<path d="M387.0 589.0 L404.0 593.0 L410.0 613.0 L433.0 622.0 L453.0 651.0 L476.0 658.0 L493.0 657.0" stroke="#40e0d0" stroke-width="1.1" fill="none" stroke-linejoin="round" />
<path d="M263.0 426.0 L300.0 461.0 L300.0 501.0" stroke="#40e0d0" stroke-width="1.0" fill="none" stroke-linejoin="round" />
<path d="M212.0 468.0 L217.0 487.0 L231.0 515.0" stroke="#40e0d0" stroke-width="1.0" fill="none" stroke-linejoin="round" />
<path d="M300.0 491.0 L332.0 487.0 L378.0 476.0 L404.0 471.0 L450.0 470.0 L493.0 469.0" stroke="#40e0d0" stroke-width="1.0" fill="none" stroke-linejoin="round" />
<path d="M326.0 495.0 L358.0 515.0 L367.0 541.0 L375.0 550.0 L413.0 550.0 L436.0 544.0 L470.0 523.0 L492.0 510.0 L519.0 496.5 L543.0 485.5 L556.0 481.0" stroke="#40e0d0" stroke-width="1.3" fill="none" stroke-linejoin="round" />
<path d="M396.0 720.0 L440.0 721.0 L476.0 720.0 L520.0 721.0 L560.0 720.0 L606.0 720.0" stroke="#40e0d0" stroke-width="1.2" fill="none" stroke-linejoin="round" />
<path d="M476.0 680.0 L476.0 778.0 L383.0 871.0" stroke="#40e0d0" stroke-width="2.6" fill="none" stroke-linejoin="round" />
<path d="M476.0 682.0 L450.0 702.0 L427.0 720.0" stroke="#40e0d0" stroke-width="1.0" fill="none" stroke-linejoin="round" />
<path d="M383.0 871.0 L368.0 883.0 L366.0 895.0 L372.0 915.0 L377.0 935.0 L383.0 997.0" stroke="#40e0d0" stroke-width="1.0" fill="none" stroke-linejoin="round" />
<path d="M383.0 871.0 L408.0 902.0 L436.0 918.0 L465.0 916.0 L494.0 914.0 L544.0 929.0 L605.0 963.0 L620.0 970.0 L637.0 978.0" stroke="#40e0d0" stroke-width="1.1" fill="none" stroke-linejoin="round" />
<path d="M479.6 994.7 L540.0 995.5 L600.7 994.7 L621.5 986.0" stroke="#40e0d0" stroke-width="1.2" fill="none" stroke-linejoin="round" />
<path d="M621.5 986.0 L649.0 980.8 L676.8 984.3 L683.7 997.0" stroke="#40e0d0" stroke-width="2.4" fill="none" stroke-linejoin="round" />
<path d="M598.0 680.0 L608.0 695.0 L623.0 714.0 L626.0 732.0 L620.0 751.0 L626.0 772.0 L634.0 803.0 L635.0 852.0 L649.0 886.0 L642.0 920.0 L632.0 942.0 L637.0 972.0 L634.0 997.0" stroke="#40e0d0" stroke-width="1.6" fill="none" stroke-linejoin="round" />
<path d="M580.0 720.0 L610.0 720.0 L623.0 718.0 L651.0 726.0 L677.0 711.0 L697.0 720.0 L718.0 731.0 L740.0 729.0 L751.5 736.0 L769.0 737.5 L803.5 774.4" stroke="#40e0d0" stroke-width="1.4" fill="none" stroke-linejoin="round" />
<path d="M751.5 736.0 L769.0 720.0" stroke="#40e0d0" stroke-width="1.2" fill="none" stroke-linejoin="round" />
<path d="M803.5 774.4 L830.0 774.4 L855.4 774.4 L867.0 779.0 L881.0 773.5" stroke="#40e0d0" stroke-width="3.5" fill="none" stroke-linejoin="round" />
<path d="M669.0 700.0 L686.0 680.0 L693.0 672.0 L718.0 665.0 L742.0 661.0 L752.0 653.0 L774.0 633.0 L800.0 620.0 L821.0 605.0 L828.0 590.0 L821.0 565.0 L826.0 544.0 L824.0 530.0" stroke="#40e0d0" stroke-width="1.2" fill="none" stroke-linejoin="round" />
<path d="M661.0 613.0 L688.0 622.0 L728.0 632.0" stroke="#40e0d0" stroke-width="1.3" fill="none" stroke-linejoin="round" />
<path d="M716.0 579.0 L735.0 603.0 L762.0 632.0 L794.0 670.0 L815.0 700.0 L835.0 720.0 L849.6 743.0 L858.0 763.5 L862.6 775.0" stroke="#40e0d0" stroke-width="1.8" fill="none" stroke-linejoin="round" />
<path d="M722.0 590.0 L745.0 620.0 L775.0 660.0 L805.0 700.0 L825.0 725.0 L840.0 745.0" stroke="#40e0d0" stroke-width="1.0" fill="none" stroke-linejoin="round" />
<path d="M862.6 775.0 L864.0 795.0 L862.6 815.4 L864.0 844.0" stroke="#40e0d0" stroke-width="3.0" fill="none" stroke-linejoin="round" />
<path d="M864.0 844.0 L867.0 873.0 L869.8 902.0 L878.4 939.4 L884.0 965.0" stroke="#40e0d0" stroke-width="1.1" fill="none" stroke-linejoin="round" />
<path d="M826.0 552.0 L835.0 580.0 L848.0 620.0 L859.0 661.0 L865.5 700.0 L872.7 729.0 L878.4 752.0 L882.8 772.0" stroke="#40e0d0" stroke-width="1.2" fill="none" stroke-linejoin="round" />
<path d="M881.0 786.5 L890.0 806.7 L897.0 829.8 L901.5 850.0 L907.0 873.0 L910.0 887.5" stroke="#40e0d0" stroke-width="1.2" fill="none" stroke-linejoin="round" />
<path d="M862.6 811.0 L878.4 812.5 L893.0 818.0" stroke="#40e0d0" stroke-width="3.6" fill="none" stroke-linejoin="round" />
<path d="M812.0 815.4 L838.0 798.0 L861.0 793.7" stroke="#40e0d0" stroke-width="1.2" fill="none" stroke-linejoin="round" />
<path d="M861.0 801.0 L846.7 815.4 L826.5 838.5 L803.5 858.6 L792.0 881.7 L774.6 884.6 L760.0 907.7 L751.5 925.0 L740.0 930.7 L731.0 931.0 L710.0 940.0 L695.0 952.0 L681.0 968.0 L679.0 982.0 L682.0 997.0" stroke="#40e0d0" stroke-width="1.3" fill="none" stroke-linejoin="round" />
<path d="M754.4 921.5 L815.0 919.0 L843.8 906.0 L861.0 899.0 L895.8 897.6 L910.0 887.5" stroke="#40e0d0" stroke-width="1.1" fill="none" stroke-linejoin="round" />
<path d="M605.0 963.0 L620.0 970.0 L639.0 980.0 L672.0 985.0 L682.0 997.0" stroke="#40e0d0" stroke-width="2.4" fill="none" stroke-linejoin="round" />
<path d="M774.6 216.0 L774.6 190.0" stroke="#40e0d0" stroke-width="1.4" fill="none" stroke-linejoin="round" />
<path d="M777.7 203.0 L779.0 190.0" stroke="#40e0d0" stroke-width="1.0" fill="none" stroke-linejoin="round" />
<path d="M774.6 217.0 L779.0 237.0 L773.8 243.0 L776.0 260.0 L777.7 284.0" stroke="#40e0d0" stroke-width="1.0" fill="none" stroke-linejoin="round" />
<path d="M766.8 221.5 L768.4 226.0 L777.7 231.0" stroke="#40e0d0" stroke-width="1.0" fill="none" stroke-linejoin="round" />
<path d="M679.6 220.0 L679.6 249.5 L673.0 263.5 L665.6 274.4 L664.0 290.0 L660.0 310.0 L652.0 322.0" stroke="#40e0d0" stroke-width="1.2" fill="none" stroke-linejoin="round" />
<path d="M676.5 217.0 L662.5 201.0 L650.0 185.6 L641.0 175.0" stroke="#40e0d0" stroke-width="0.9" fill="none" stroke-linejoin="round" />
<path d="M714.6 224.6 L714.6 237.0 L717.0 246.4" stroke="#40e0d0" stroke-width="0.9" fill="none" stroke-linejoin="round" />
<path d="M734.0 231.0 L735.7 249.5" stroke="#40e0d0" stroke-width="0.9" fill="none" stroke-linejoin="round" />
<path d="M655.0 290.0 L640.0 330.0 L636.0 345.0" stroke="#40e0d0" stroke-width="1.0" fill="none" stroke-linejoin="round" />
<path d="M652.0 322.0 L680.0 330.0 L700.0 332.0 L712.0 340.0" stroke="#40e0d0" stroke-width="0.9" fill="none" stroke-linejoin="round" />
<path d="M659.0 352.0 L670.0 349.0 L682.0 351.5 L693.0 349.0 L715.0 348.0 L740.0 352.0 L760.0 345.0" stroke="#40e0d0" stroke-width="1.0" fill="none" stroke-linejoin="round" />
<path d="M646.0 393.0 L659.0 391.0 L670.0 386.0 L680.0 384.0 L693.0 388.0 L704.0 391.0" stroke="#40e0d0" stroke-width="1.0" fill="none" stroke-linejoin="round" />
<path d="M722.7 440.7 L735.8 432.5 L747.0 429.0 L763.5 430.0 L781.5 429.0 L794.6 425.0 L804.4 423.5" stroke="#40e0d0" stroke-width="3.6" fill="none" stroke-linejoin="round" />
<path d="M658.0 562.0 L667.0 533.0 L658.0 512.0 L646.0 491.0" stroke="#40e0d0" stroke-width="1.4" fill="none" stroke-linejoin="round" />
<path d="M655.0 565.0 L655.0 598.0 L660.0 618.0 L658.0 637.0" stroke="#40e0d0" stroke-width="4.5" fill="none" stroke-linejoin="round" />
<path d="M658.0 637.0 L655.0 660.0 L640.0 690.0 L625.0 712.0" stroke="#40e0d0" stroke-width="1.2" fill="none" stroke-linejoin="round" />
<path d="M612.0 470.0 L600.0 476.0 L592.0 488.0" stroke="#40e0d0" stroke-width="2" fill="none" stroke-linejoin="round" />
<path d="M585.0 494.0 L580.6 514.0 L582.8 536.0 L587.0 549.6" stroke="#40e0d0" stroke-width="3.0" fill="none" stroke-linejoin="round" />
<path d="M589.5 496.5 L602.7 498.8 L611.6 509.8 L611.6 527.5 L607.0 545.0 L606.0 563.0 L608.0 585.0 L607.0 607.0 L605.0 629.0" stroke="#40e0d0" stroke-width="6.5" fill="none" stroke-linejoin="round" />
<path d="M605.0 629.0 L603.8 664.7 L602.7 682.4" stroke="#40e0d0" stroke-width="4.6" fill="none" stroke-linejoin="round" />
<path d="M602.7 682.4 L609.4 698.0 L618.0 712.0" stroke="#40e0d0" stroke-width="3.4" fill="none" stroke-linejoin="round" />
<path d="M582.8 563.0 L578.4 585.0 L571.8 594.0 L558.5 602.7 L545.0 613.8" stroke="#40e0d0" stroke-width="6.5" fill="none" stroke-linejoin="round" />
<path d="M545.0 613.8 L529.7 625.0 L514.0 636.0 L498.8 651.4 L487.7 662.5" stroke="#40e0d0" stroke-width="4.8" fill="none" stroke-linejoin="round" />
<path d="M487.7 662.5 L476.6 675.8 L470.0 684.6" stroke="#40e0d0" stroke-width="3.2" fill="none" stroke-linejoin="round" />
<path d="M512.0 516.5 L545.0 516.5" stroke="#40e0d0" stroke-width="3.0" fill="none" stroke-linejoin="round" />
<path d="M545.0 516.5 L565.0 516.5" stroke="#40e0d0" stroke-width="5.0" fill="none" stroke-linejoin="round" />
<path d="M565.0 516.5 L611.6 516.5" stroke="#40e0d0" stroke-width="3.0" fill="none" stroke-linejoin="round" />
<path d="M512.0 555.0 L543.0 555.0 L567.0 555.0" stroke="#40e0d0" stroke-width="3.0" fill="none" stroke-linejoin="round" />
<path d="M491.0 470.0 L491.0 492.0 L512.0 514.0 L514.0 536.0 L518.7 569.6 L521.0 602.7 L522.0 625.0" stroke="#40e0d0" stroke-width="3.0" fill="none" stroke-linejoin="round" />
<path d="M543.0 516.5 L536.0 536.0 L529.7 554.0 L525.0 563.0" stroke="#40e0d0" stroke-width="1.2" fill="none" stroke-linejoin="round" />
<path d="M544.0 525.0 L544.0 580.0" stroke="#40e0d0" stroke-width="1.0" fill="none" stroke-linejoin="round" />
<path d="M512.0 557.0 L507.6 574.0 L518.7 583.0" stroke="#40e0d0" stroke-width="1.0" fill="none" stroke-linejoin="round" />
<path d="M558.5 605.0 L558.5 629.0 L602.7 628.0" stroke="#40e0d0" stroke-width="3.0" fill="none" stroke-linejoin="round" />
<path d="M576.0 580.6 L607.0 579.5" stroke="#40e0d0" stroke-width="2.6" fill="none" stroke-linejoin="round" />
<path d="M505.4 618.0 L534.0 618.0" stroke="#40e0d0" stroke-width="2.0" fill="none" stroke-linejoin="round" />
<path d="M536.4 629.0 L536.4 700.0" stroke="#40e0d0" stroke-width="1.3" fill="none" stroke-linejoin="round" />
<path d="M536.4 622.6 L558.5 629.0" stroke="#40e0d0" stroke-width="2.0" fill="none" stroke-linejoin="round" />
<path d="M492.0 660.0 L509.8 671.0 L536.4 684.6" stroke="#40e0d0" stroke-width="1.0" fill="none" stroke-linejoin="round" />
<path d="M536.4 671.0 L558.5 671.0 L576.0 664.7" stroke="#40e0d0" stroke-width="1.0" fill="none" stroke-linejoin="round" />
<path d="M560.0 400.0 L575.0 400.0" stroke="#40e0d0" stroke-width="2" fill="none" stroke-linejoin="round" />
<path d="M545.0 440.0 L568.0 440.0" stroke="#40e0d0" stroke-width="2.5" fill="none" stroke-linejoin="round" />
<path d="M706.3 463.5 L707.0 500.0 L709.0 537.0 L709.0 569.0" stroke="#40e0d0" stroke-width="4.8" fill="none" stroke-linejoin="round" />
<path d="M711.0 542.0 L731.0 542.0" stroke="#40e0d0" stroke-width="3" fill="none" stroke-linejoin="round" />
<path d="M752.0 431.0 L752.0 486.4" stroke="#40e0d0" stroke-width="3.0" fill="none" stroke-linejoin="round" />
<path d="M773.0 462.0 L771.7 486.4 L766.8 507.6" stroke="#40e0d0" stroke-width="3.5" fill="none" stroke-linejoin="round" />
<path d="M779.0 462.0 L786.4 478.0 L788.0 507.6" stroke="#40e0d0" stroke-width="2.5" fill="none" stroke-linejoin="round" />
<path d="M750.5 488.0 L745.5 507.6" stroke="#40e0d0" stroke-width="3.0" fill="none" stroke-linejoin="round" />
<path d="M807.6 468.4 L808.5 504.4" stroke="#40e0d0" stroke-width="2.0" fill="none" stroke-linejoin="round" />
<path d="M811.0 458.6 L815.8 488.0 L820.7 507.6" stroke="#40e0d0" stroke-width="2.2" fill="none" stroke-linejoin="round" />
<path d="M805.0 409.6 L804.4 439.0 L804.4 457.0" stroke="#40e0d0" stroke-width="3.0" fill="none" stroke-linejoin="round" />
<path d="M671.0 512.0 L709.0 513.0" stroke="#40e0d0" stroke-width="6" fill="none" stroke-linejoin="round" />
<path d="M662.0 478.0 L690.0 485.6 L722.7 486.4 L755.4 485.6 L788.0 486.0 L814.0 486.4" stroke="#40e0d0" stroke-width="5.2" fill="none" stroke-linejoin="round" />
<path d="M654.0 453.0 L679.0 454.0 L704.0 455.5 L724.0 455.4 L739.0 457.0 L755.4 461.0 L771.7 459.4 L788.0 457.8 L804.4 457.0 L812.5 457.0" stroke="#40e0d0" stroke-width="5.6" fill="none" stroke-linejoin="round" />
<path d="M645.0 463.0 L659.0 464.0 L682.0 469.0 L705.0 474.6 L731.0 478.0" stroke="#40e0d0" stroke-width="3.0" fill="none" stroke-linejoin="round" />
<path d="M686.0 420.0 L690.0 452.0" stroke="#40e0d0" stroke-width="3" fill="none" stroke-linejoin="round" />
<path d="M700.0 400.0 L704.0 456.0" stroke="#40e0d0" stroke-width="2.5" fill="none" stroke-linejoin="round" />
<path d="M575.8 419.6 L587.0 412.7" stroke="#40e0d0" stroke-width="2" fill="none" stroke-linejoin="round" />
<path d="M589.6 404.6 L601.0 408.0 L612.7 413.8 L624.0 420.7" stroke="#40e0d0" stroke-width="1.5" fill="none" stroke-linejoin="round" />
<path d="M605.7 355.0 L615.0 374.6 L619.6 392.0 L623.0 400.0 L628.8 409.0" stroke="#40e0d0" stroke-width="1.5" fill="none" stroke-linejoin="round" />
<path d="M612.7 382.7 L624.0 380.4 L635.7 386.0" stroke="#40e0d0" stroke-width="1.5" fill="none" stroke-linejoin="round" />
<path d="M650.7 357.3 L646.0 386.0 L643.8 397.7 L640.0 420.0" stroke="#40e0d0" stroke-width="1.5" fill="none" stroke-linejoin="round" />
<path d="M600.0 420.0 L630.0 425.0" stroke="#40e0d0" stroke-width="2.0" fill="none" stroke-linejoin="round" />
<path d="M585.0 440.0 L630.0 438.0" stroke="#40e0d0" stroke-width="2.5" fill="none" stroke-linejoin="round" />
<path d="M596.0 380.0 L600.0 420.0 L598.0 458.0" stroke="#40e0d0" stroke-width="2.0" fill="none" stroke-linejoin="round" />
<path d="M612.0 400.0 L615.0 420.0 L616.0 456.0" stroke="#40e0d0" stroke-width="1.8" fill="none" stroke-linejoin="round" />
<path d="M575.0 470.0 L612.0 476.0 L640.0 470.0" stroke="#40e0d0" stroke-width="3" fill="none" stroke-linejoin="round" />
<path d="M570.0 490.0 L600.0 492.0" stroke="#40e0d0" stroke-width="3" fill="none" stroke-linejoin="round" />
<path d="M620.0 452.0 L606.0 472.0 L598.0 490.0" stroke="#40e0d0" stroke-width="4" fill="none" stroke-linejoin="round" />
<path d="M688.0 470.0 L690.0 512.0" stroke="#40e0d0" stroke-width="3" fill="none" stroke-linejoin="round" />
<path d="M672.0 490.0 L700.0 500.0" stroke="#40e0d0" stroke-width="2.5" fill="none" stroke-linejoin="round" />
<path d="M735.0 470.0 L760.0 470.0" stroke="#40e0d0" stroke-width="2" fill="none" stroke-linejoin="round" />
<path d="M680.0 560.0 L690.0 540.0 L700.0 530.0" stroke="#40e0d0" stroke-width="2" fill="none" stroke-linejoin="round" />
<path d="M715.0 592.0 L728.0 580.0 L736.0 570.0" stroke="#40e0d0" stroke-width="3" fill="none" stroke-linejoin="round" />
<path d="M689.0 530.0 L700.7 553.0 L710.0 573.8 L723.8 587.7 L735.3 601.5 L752.6 622.0 L770.0 643.0" stroke="#40e0d0" stroke-width="3.5" fill="none" stroke-linejoin="round" />
<path d="M655.8 578.4 L654.6 594.6 L655.8 603.8 L660.4 613.0" stroke="#40e0d0" stroke-width="5.0" fill="none" stroke-linejoin="round" />
<path d="M660.4 613.0 L659.0 622.0 L658.0 637.0" stroke="#40e0d0" stroke-width="3.2" fill="none" stroke-linejoin="round" />
<path d="M658.0 558.8 L666.0 547.0 L668.4 535.8 L666.0 530.0" stroke="#40e0d0" stroke-width="2.0" fill="none" stroke-linejoin="round" />
<path d="M660.4 615.4 L689.0 622.0 L718.0 630.0 L729.6 632.0 L735.3 627.0" stroke="#40e0d0" stroke-width="2.5" fill="none" stroke-linejoin="round" />
<path d="M672.0 568.0 L689.0 560.0 L700.7 555.4" stroke="#40e0d0" stroke-width="2.0" fill="none" stroke-linejoin="round" />
<path d="M666.0 540.4 L680.0 538.0" stroke="#40e0d0" stroke-width="3.0" fill="none" stroke-linejoin="round" />
<path d="M681.0 548.5 L693.8 549.6" stroke="#40e0d0" stroke-width="3.0" fill="none" stroke-linejoin="round" />
<path d="M712.0 541.5 L730.7 541.5" stroke="#40e0d0" stroke-width="3.5" fill="none" stroke-linejoin="round" />
<path d="M681.0 586.5 L700.7 594.6 L705.0 596.0" stroke="#40e0d0" stroke-width="2.0" fill="none" stroke-linejoin="round" />
<path d="M658.0 638.4 L648.8 650.0 L640.0 665.0" stroke="#40e0d0" stroke-width="1.6" fill="none" stroke-linejoin="round" />
<path d="M658.0 638.4 L666.0 650.0 L672.0 668.0" stroke="#40e0d0" stroke-width="1.6" fill="none" stroke-linejoin="round" />
<path d="M755.0 650.0 L770.0 637.0 L780.0 630.0" stroke="#40e0d0" stroke-width="1.8" fill="none" stroke-linejoin="round" />
<path d="M640.0 470.0 L646.0 490.0 L652.0 505.0" stroke="#40e0d0" stroke-width="2.0" fill="none" stroke-linejoin="round" />
<path d="M646.0 466.5 L670.0 495.0 L693.4 526.5 L705.0 541.5" stroke="#40e0d0" stroke-width="4.0" fill="none" stroke-linejoin="round" />
<path d="M600.0 440.0 L604.0 456.0" stroke="#40e0d0" stroke-width="2.5" fill="none" stroke-linejoin="round" />
<path d="M590.0 446.0 L592.0 470.0" stroke="#40e0d0" stroke-width="2.5" fill="none" stroke-linejoin="round" />
<path d="M580.0 450.0 L583.0 480.0" stroke="#40e0d0" stroke-width="2.0" fill="none" stroke-linejoin="round" />
<path d="M606.0 445.0 L610.0 462.0" stroke="#40e0d0" stroke-width="2.5" fill="none" stroke-linejoin="round" />
<path d="M622.0 440.0 L624.0 456.0" stroke="#40e0d0" stroke-width="3" fill="none" stroke-linejoin="round" />
<path d="M575.0 500.0 L590.0 505.0" stroke="#40e0d0" stroke-width="2.0" fill="none" stroke-linejoin="round" />
<path d="M567.0 528.0 L582.0 530.0" stroke="#40e0d0" stroke-width="2.5" fill="none" stroke-linejoin="round" />
<path d="M668.0 470.0 L670.0 490.0" stroke="#40e0d0" stroke-width="2.5" fill="none" stroke-linejoin="round" />
<path d="M680.0 458.0 L682.0 486.0" stroke="#40e0d0" stroke-width="2.0" fill="none" stroke-linejoin="round" />
<path d="M694.0 458.0 L696.0 486.0" stroke="#40e0d0" stroke-width="2.5" fill="none" stroke-linejoin="round" />
<path d="M716.0 458.0 L718.0 486.0" stroke="#40e0d0" stroke-width="2.5" fill="none" stroke-linejoin="round" />
<path d="M740.0 458.0 L741.0 486.0" stroke="#40e0d0" stroke-width="2.0" fill="none" stroke-linejoin="round" />
<path d="M657.0 500.0 L672.0 502.0" stroke="#40e0d0" stroke-width="2.5" fill="none" stroke-linejoin="round" />
<path d="M690.0 500.0 L708.0 500.0" stroke="#40e0d0" stroke-width="2.5" fill="none" stroke-linejoin="round" />
<path d="M712.0 470.0 L729.0 470.0" stroke="#40e0d0" stroke-width="2.5" fill="none" stroke-linejoin="round" />
<path d="M712.0 500.0 L731.0 500.0" stroke="#40e0d0" stroke-width="3.0" fill="none" stroke-linejoin="round" />
<path d="M712.0 525.0 L733.0 525.0" stroke="#40e0d0" stroke-width="3.0" fill="none" stroke-linejoin="round" />
<path d="M735.0 500.0 L752.0 500.0" stroke="#40e0d0" stroke-width="2.0" fill="none" stroke-linejoin="round" />
<path d="M670.0 420.0 L672.0 444.0" stroke="#40e0d0" stroke-width="2.5" fill="none" stroke-linejoin="round" />
<path d="M680.0 415.0 L683.0 450.0" stroke="#40e0d0" stroke-width="2.0" fill="none" stroke-linejoin="round" />
<path d="M664.0 432.0 L700.0 436.0" stroke="#40e0d0" stroke-width="2.0" fill="none" stroke-linejoin="round" />
<path d="M211.0 524.0 C214.8 523.0 225.3 520.2 234.0 518.0 C242.7 515.8 252.0 513.4 263.0 511.0 C274.0 508.6 288.5 504.6 300.0 503.5 C311.5 502.4 322.8 506.1 332.0 504.5 C341.2 502.9 345.0 497.2 355.0 494.0 C365.0 490.8 378.5 487.7 392.0 485.0 C405.5 482.3 428.7 479.2 436.0 478.0" stroke="#40e0d0" stroke-width="4.6" fill="none" stroke-linejoin="round" />
<path d="M436.0 478.0 C441.7 477.0 460.5 473.5 470.0 472.0 C479.5 470.5 483.0 470.3 493.0 469.0 C503.0 467.7 518.8 465.2 530.0 464.0 C541.2 462.8 555.0 462.3 560.0 462.0" stroke="#40e0d0" stroke-width="6.5" fill="none" stroke-linejoin="round" />
<path d="M560.0 462.0 C562.1 461.8 565.2 461.4 572.7 461.0 C580.2 460.6 596.3 460.2 605.0 459.5 C613.7 458.8 619.5 457.8 625.0 457.0 C630.5 456.2 635.8 455.3 638.0 455.0" stroke="#40e0d0" stroke-width="10.5" fill="none" stroke-linejoin="round" />
<path d="M562.0 462.0 L638.0 455.5" stroke="#40e0d0" stroke-width="16" fill="none" stroke-linejoin="round" stroke-dasharray="2.5 3"/>
<path d="M642.0 128.0 C641.0 130.3 638.2 136.2 636.0 142.0 C633.8 147.8 628.8 153.2 629.0 163.0 C629.2 172.8 634.4 189.4 637.5 201.0 C640.6 212.6 645.4 222.0 647.6 232.5 C649.8 243.0 649.1 252.9 650.5 264.0 C651.9 275.1 655.8 289.3 656.0 299.0 C656.2 308.7 653.5 315.2 652.0 322.0 C650.5 328.8 648.4 334.2 647.0 340.0 C645.6 345.8 644.8 351.2 643.8 357.0 C642.8 362.8 641.8 369.8 641.0 374.6 C640.2 379.4 640.1 382.6 639.0 386.0 C637.9 389.4 635.9 391.5 634.6 395.0 C633.3 398.5 631.8 402.7 631.0 407.0 C630.2 411.3 630.0 415.5 630.0 420.7 C630.0 425.9 630.0 433.2 631.0 438.0 C632.0 442.8 634.5 446.8 635.7 449.6 C636.9 452.4 637.6 454.1 638.0 455.0" stroke="#40e0d0" stroke-width="9" fill="none" stroke-linejoin="round" />
<path d="M643.0 360.0 L634.6 395.0 L631.0 407.0 L630.0 420.7 L631.0 440.0" stroke="#40e0d0" stroke-width="13.5" fill="none" stroke-linejoin="round" stroke-dasharray="3 4"/>
<path d="M649.0 230.0 C650.0 229.1 649.9 226.5 654.7 224.6 C659.5 222.7 671.0 219.1 678.0 218.3 C685.0 217.5 690.5 218.9 696.7 220.0 C702.9 221.1 709.7 223.1 715.4 224.6 C721.1 226.1 726.9 228.0 731.0 229.0 C735.1 230.0 736.9 231.3 740.0 230.8 C743.1 230.3 746.5 227.6 749.7 226.0 C752.9 224.4 756.0 222.8 759.0 221.5 C762.0 220.2 765.4 219.2 768.0 218.3 C770.6 217.4 773.5 216.4 774.6 216.0" stroke="#40e0d0" stroke-width="4.2" fill="none" stroke-linejoin="round" />
<path d="M571.0 409.0 C571.8 406.2 572.5 397.7 575.8 392.0 C579.1 386.3 586.6 380.0 590.8 374.6 C595.0 369.2 597.4 363.2 601.0 359.6 C604.6 356.0 608.5 354.3 612.7 352.7 C617.0 351.1 622.3 350.4 626.5 349.8 C630.7 349.2 634.8 349.5 638.0 349.0 C641.2 348.5 642.5 346.4 646.0 347.0 C649.5 347.6 654.8 350.8 658.8 352.7 C662.8 354.6 666.1 356.8 670.0 358.5 C673.9 360.2 678.1 360.5 682.0 363.0 C685.9 365.5 690.4 369.6 693.4 373.4 C696.4 377.2 698.3 381.6 700.0 386.0 C701.7 390.4 702.5 395.2 703.8 400.0 C705.1 404.8 706.8 409.3 708.0 414.5 C709.2 419.7 709.7 426.4 711.0 431.0 C712.3 435.6 713.8 438.5 716.0 442.0 C718.2 445.5 721.8 448.4 724.0 452.0 C726.2 455.6 728.2 461.6 729.0 463.5" stroke="#40e0d0" stroke-width="6.8" fill="none" stroke-linejoin="round" />
<path d="M729.0 463.5 C729.2 467.6 729.4 479.8 730.0 488.0 C730.6 496.2 731.7 504.3 732.5 512.5 C733.3 520.7 734.5 529.1 735.0 537.0 C735.5 544.9 736.1 554.5 735.8 560.0 C735.5 565.5 735.0 567.2 733.0 570.0 C731.0 572.8 728.3 575.4 724.0 577.0 C719.7 578.6 709.8 579.0 707.0 579.4" stroke="#40e0d0" stroke-width="9" fill="none" stroke-linejoin="round" />
<path d="M693.4 373.4 L700.0 386.0 L703.8 400.0 L707.0 415.0 L709.6 427.7 L711.9 443.8" stroke="#40e0d0" stroke-width="10" fill="none" stroke-linejoin="round" stroke-dasharray="3 3"/>
<path d="M571.0 409.0 C570.8 412.8 570.5 423.5 570.0 432.0 C569.5 440.5 569.2 452.8 567.7 460.0 C566.2 467.2 561.8 469.7 561.0 475.0 C560.2 480.3 562.3 485.5 563.0 492.0 C563.7 498.5 564.3 506.7 565.0 514.0 C565.7 521.3 565.5 530.1 567.0 536.0 C568.5 541.9 570.2 545.9 574.0 549.6 C577.8 553.4 586.9 557.0 589.5 558.5" stroke="#40e0d0" stroke-width="10.5" fill="none" stroke-linejoin="round" />
<path d="M589.5 558.5 C593.2 558.9 604.0 560.3 611.6 560.7 C619.2 561.1 628.3 560.4 635.0 561.0 C641.7 561.6 646.0 562.6 652.0 564.6 C658.0 566.6 664.3 570.9 671.0 573.0 C677.7 575.1 686.0 575.9 692.0 577.0 C698.0 578.1 704.5 579.0 707.0 579.4" stroke="#40e0d0" stroke-width="13.5" fill="none" stroke-linejoin="round" />
<path d="M638.0 455.0 C640.5 458.3 648.6 468.8 653.0 474.6 C657.4 480.4 660.8 484.6 664.6 489.6 C668.4 494.6 672.2 499.4 676.0 504.6 C679.8 509.8 683.8 515.1 687.6 520.7 C691.4 526.3 695.8 532.3 699.0 538.0 C702.2 543.7 705.5 550.6 707.0 555.0 C708.5 559.4 707.6 563.0 707.7 564.6" stroke="#40e0d0" stroke-width="12.5" fill="none" stroke-linejoin="round" />
<path d="M707.7 564.6 C708.4 568.5 709.3 580.4 712.0 587.7 C714.7 595.0 720.0 602.7 723.8 608.4 C727.6 614.1 731.5 617.8 735.0 622.0 C738.5 626.2 742.6 629.1 744.6 633.8 C746.6 638.5 746.4 642.1 747.0 650.0 C747.6 657.9 746.3 672.7 748.0 681.0 C749.7 689.3 755.5 696.8 757.0 700.0" stroke="#40e0d0" stroke-width="13.2" fill="none" stroke-linejoin="round" />
<path d="M757.0 700.0 C759.5 703.3 766.4 711.8 771.7 720.0 C777.0 728.2 783.7 740.3 789.0 749.0 C794.3 757.7 800.2 763.3 803.5 772.0 C806.8 780.7 808.1 796.2 809.0 801.0" stroke="#40e0d0" stroke-width="9.5" fill="none" stroke-linejoin="round" />
<path d="M809.0 801.0 C811.0 806.3 816.5 820.7 820.8 832.7 C825.1 844.7 830.2 860.0 835.0 873.0 C839.8 886.0 847.2 904.3 849.6 910.6" stroke="#40e0d0" stroke-width="8.4" fill="none" stroke-linejoin="round" />
<path d="M849.6 910.6 C851.5 916.8 856.7 938.9 861.0 948.0 C865.3 957.1 870.3 960.6 875.6 965.4 C880.9 970.2 890.1 975.1 893.0 977.0" stroke="#40e0d0" stroke-width="7.0" fill="none" stroke-linejoin="round" />
<path d="M653.0 474.6 L699.0 538.0" stroke="#40e0d0" stroke-width="19" fill="none" stroke-linejoin="round" stroke-dasharray="3 4"/>
<path d="M688.0 512.0 C691.5 512.0 701.8 511.9 709.0 512.0 C716.2 512.1 723.3 512.2 731.0 512.5 C738.7 512.8 751.3 513.8 755.4 514.0" stroke="#40e0d0" stroke-width="7" fill="none" stroke-linejoin="round" />
<path d="M755.4 514.0 C758.1 513.6 766.3 512.8 771.7 511.7 C777.1 510.6 785.3 508.3 788.0 507.6" stroke="#40e0d0" stroke-width="9" fill="none" stroke-linejoin="round" />
<path d="M788.0 507.6 C790.7 507.5 799.8 506.2 804.4 506.8 C809.0 507.4 813.1 508.7 815.8 511.0 C818.5 513.3 819.9 519.1 820.7 520.7" stroke="#40e0d0" stroke-width="6.5" fill="none" stroke-linejoin="round" />
<path d="M820.7 520.7 C821.2 523.4 823.2 531.5 824.0 537.0 C824.8 542.5 825.3 550.7 825.6 553.4" stroke="#40e0d0" stroke-width="4.2" fill="none" stroke-linejoin="round" />
<rect x="218" y="982" width="106" height="16" fill="#efefef"/>
<text x="223" y="992.7" font-size="11.5" fill="#1a6fe0" font-family="Liberation Sans,sans-serif" textLength="96">© 2023 PTV, HERE</text>
<rect x="844" y="129.5" width="133" height="142" fill="#fff" stroke="#0000b4" stroke-width="1"/>
<text x="846.5" y="155" font-size="20.5" fill="#000" font-family="Liberation Sans,sans-serif" textLength="108">NERPM-AB</text>
<text x="847" y="176" font-size="11" fill="#000" font-family="Liberation Sans,sans-serif">Links</text>
<path d="M847 192.5h39" stroke="#555" stroke-width="1"/>
<text x="847" y="220" font-size="11" fill="#000" font-family="Liberation Sans,sans-serif">Link bars</text>
<text x="847" y="234" font-size="11" fill="#000" font-family="Liberation Sans,sans-serif">VOL_DA</text>
<rect x="848" y="241" width="38" height="19" fill="#40e0d0"/></g></svg>
<div class="r" style="left:976px;top:128px;width:21px;height:870px;background:#f2f2f2;"></div>
<div class="r" style="left:976px;top:128px;width:1px;height:870px;background:#fff;"></div>
<div class="r" style="left:977px;top:315px;width:15px;height:415px;background:#cdcdcd;"></div>
<svg style="left:980px;top:133px" width="10" height="7"><path d="M1 5.5l4-4 4 4" stroke="#505050" stroke-width="2" fill="none"/></svg>
<svg style="left:980px;top:986px" width="10" height="7"><path d="M1 1.5l4 4 4-4" stroke="#505050" stroke-width="2" fill="none"/></svg>
<div class="r" style="left:211px;top:998px;width:786px;height:17px;background:#f0f0f0;"></div>
<div class="r" style="left:421px;top:1000px;width:439px;height:13px;background:#cdcdcd;"></div>
<svg style="left:216px;top:1002px" width="7" height="10"><path d="M5.5 1l-4 4 4 4" stroke="#505050" stroke-width="2" fill="none"/></svg>
<svg style="left:964px;top:1002px" width="7" height="10"><path d="M1.5 1l4 4-4 4" stroke="#505050" stroke-width="2" fill="none"/></svg>
<div class="r" style="left:1001px;top:98px;width:917px;height:921px;background:#9eacc6;"></div>
<div class="r" style="left:1003px;top:98px;width:913px;height:1px;background:#77829b;"></div>
<div class="grp" style="left:1005.5px;top:101px;width:236.5px;height:25px"></div>
<div class="r" style="left:1009px;top:106px;width:2px;height:2px;background:#4a5878;"></div><div class="r" style="left:1009px;top:110px;width:2px;height:2px;background:#4a5878;"></div><div class="r" style="left:1009px;top:114px;width:2px;height:2px;background:#4a5878;"></div><div class="r" style="left:1009px;top:118px;width:2px;height:2px;background:#4a5878;"></div>
<svg style="left:1016px;top:104.5px" width="16" height="16" viewBox="0 0 16 16"><path d="M3 1l11 7-11 7z" fill="#3aa935"/><path d="M3 1l11 7-11 2z" fill="#5cc94f"/></svg>
<svg style="left:1038px;top:111.5px" width="5" height="3"><path d="M0 0h5l-2.500 3z" fill="#1e2a44"/></svg>
<svg style="left:1049px;top:104.5px" width="16" height="16" viewBox="0 0 16 16"><path d="M1 2l8 6-8 6z" fill="#3aa935"/><rect x="11" y="2" width="3" height="12" fill="#3aa935"/></svg>
<svg style="left:1070px;top:104.5px" width="16" height="16" viewBox="0 0 16 16"><rect x="1" y="2" width="2.500" height="12" fill="#a9b2c2"/><path d="M6 2l8 6-8 6z" fill="#a9b2c2"/></svg>
<svg style="left:1093px;top:104.5px" width="16" height="16" viewBox="0 0 16 16"><path d="M4 3l-2.500 4 4.500 1z" fill="#8e97a8"/><path d="M3.500 6c3-3 8-2 9 2s-1 5.500-3 6.500" stroke="#8e97a8" stroke-width="2.200" fill="none"/></svg>
<div class="r" style="left:1112px;top:102px;width:22px;height:23px;background:#fdebb5;border:1px solid #e5b84f"></div>
<svg style="left:1115px;top:104.5px" width="16" height="16" viewBox="0 0 16 16"><path d="M8 1l7 13.500h-14z" fill="#f0b030"/><path d="M8 5.500v5M8 12v1.500" stroke="#fff" stroke-width="1.600"/><path d="M14.500 1l-13 14" stroke="#e02020" stroke-width="1.600"/></svg>
<div class="r" style="left:1137px;top:103px;width:1px;height:19px;background:#6b7894"></div><div class="r" style="left:1138px;top:103px;width:1px;height:19px;background:#d4dbe8"></div>
<svg style="left:1142px;top:104.5px" width="16" height="16" viewBox="0 0 16 16"><path d="M1 5h5l1 1.500h6v8h-12z" fill="#f3cf3f" stroke="#b08a12" stroke-width=".8"/><path d="M1.500 8h12v6h-12z" fill="#f9e27a"/><path d="M8 1.500c3 0 5 1 5 4" stroke="#2f6fc0" stroke-width="1.500" fill="none"/><path d="M10.500 5h5l-2.500 3.500z" fill="#2f6fc0"/></svg>
<svg style="left:1165px;top:104.5px" width="16" height="16" viewBox="0 0 16 16"><path d="M1.500 1.500h12l1 1v12h-13z" fill="#3f8fd8" stroke="#1d5fa8"/><rect x="4" y="2" width="8" height="6" fill="#dfeaf6"/><rect x="4.500" y="10" width="7" height="4.500" fill="#e8e8e8" stroke="#1d5fa8" stroke-width=".6"/><rect x="6" y="11" width="2" height="3" fill="#3f8fd8"/></svg>
<div class="r" style="left:1187px;top:103px;width:1px;height:19px;background:#6b7894"></div><div class="r" style="left:1188px;top:103px;width:1px;height:19px;background:#d4dbe8"></div>
<svg style="left:1193px;top:104.5px" width="16" height="16" viewBox="0 0 16 16"><rect x=".500" y="1.500" width="12" height="11" fill="#fff" stroke="#555"/><path d="M2.500 4h3M2.500 6.500h8M2.500 9h8" stroke="#777" stroke-width="1"/><circle cx="6.500" cy="5" r="2" fill="#bfe0f4" stroke="#2f5fb0" stroke-width=".8"/><path d="M8 8l6 6" stroke="#d09020" stroke-width="2.600"/></svg>
<div class="r" style="left:1215px;top:103px;width:1px;height:19px;background:#6b7894"></div><div class="r" style="left:1216px;top:103px;width:1px;height:19px;background:#d4dbe8"></div>
<svg style="left:1222px;top:104.5px" width="16" height="16" viewBox="0 0 16 16"><rect x=".500" y="2.500" width="12" height="10" fill="#fff" stroke="#2f7fd0" stroke-width="1.200"/><circle cx="5.500" cy="6" r="2" fill="#bfe0f4" stroke="#2f5fb0" stroke-width=".8"/><path d="M7 8l6 5.500" stroke="#d09020" stroke-width="2.600"/></svg>
<div class="r" style="left:1001px;top:127px;width:914px;height:892px;background:#f0f0f0;border-right:1px solid #7b7b7b;border-top:1px solid #7b7b7b"></div>
<div class="r" style="left:1001px;top:99px;width:4px;height:918px;background:#8e8e8e;"></div>
<div class="r" style="left:1003px;top:99px;width:1px;height:918px;background:#6a6a6a;"></div>
<div class="r" style="left:1006px;top:128px;width:750px;height:851px;background:#fff;"></div>
<div class="r" style="left:1006px;top:128px;width:81px;height:851px;background:#f0f0f0;"></div>
<div class="r" style="left:1006px;top:128px;width:81px;height:19px;background:#f0f0f0;border-right:1px solid #9c9c9c;border-bottom:1px solid #7a7a7a"></div>
<div class="r" style="left:1087px;top:128px;width:60px;height:19px;background:#f0f0f0;border-right:1px solid #9c9c9c;border-bottom:1px solid #7a7a7a"></div>
<div class="r" style="left:1147px;top:128px;width:40px;height:19px;background:#f0f0f0;border-right:1px solid #9c9c9c;border-bottom:1px solid #7a7a7a"></div>
<div class="r" style="left:1187px;top:128px;width:344px;height:19px;background:#f0f0f0;border-right:1px solid #9c9c9c;border-bottom:1px solid #7a7a7a"></div>
<div class="r" style="left:1531px;top:128px;width:98px;height:19px;background:#f0f0f0;border-right:1px solid #9c9c9c;border-bottom:1px solid #7a7a7a"></div>
<div class="r" style="left:1629px;top:128px;width:105px;height:19px;background:#f0f0f0;border-right:1px solid #9c9c9c;border-bottom:1px solid #7a7a7a"></div>
<div class="r" style="left:1734px;top:128px;width:23px;height:19px;background:#f0f0f0;border-right:1px solid #9c9c9c;border-bottom:1px solid #7a7a7a"></div>
<span class="t" style="left:1035.65px;top:128.84px;font-size:12px;color:#000;letter-spacing:0.226px;">268</span>
<span class="t" style="left:1150.40px;top:128.84px;font-size:12px;color:#000;letter-spacing:0.104px;">Active</span>
<span class="t" style="left:1331.00px;top:128.84px;font-size:12px;color:#000;letter-spacing:-0.041px;">Procedure</span>
<span class="t" style="left:1552.00px;top:128.84px;font-size:12px;color:#000;letter-spacing:-0.041px;">Reference</span>
<span class="t" style="left:1652.00px;top:128.84px;font-size:12px;color:#000;letter-spacing:0.100px;">Variant/file</span>
<span class="t" style="left:1741.00px;top:128.84px;font-size:12px;color:#000;letter-spacing:-1.085px;">Me</span>
<div class="r" style="left:1006px;top:147px;width:81px;height:19px;background:#f0f0f0;border-right:1px solid #8a8a8a;border-bottom:1px solid #7a7a7a;border-top:1px solid #fff"></div>
<div class="r" style="left:1087px;top:147px;width:60px;height:19px;background:#f0f0f0;border-right:1px solid #e0e0e0;border-bottom:1px solid #dcdcdc"></div>
<div class="r" style="left:1147px;top:147px;width:40px;height:19px;background:#fff;border-right:1px solid #dcdcdc;border-bottom:1px solid #dcdcdc"></div>
<div class="r" style="left:1187px;top:147px;width:344px;height:19px;background:#fff;border-right:1px solid #dcdcdc;border-bottom:1px solid #dcdcdc"></div>
<div class="r" style="left:1531px;top:147px;width:98px;height:19px;background:#f0f0f0;border-right:1px solid #dcdcdc;border-bottom:1px solid #dcdcdc"></div>
<div class="r" style="left:1629px;top:147px;width:105px;height:19px;background:#f0f0f0;border-right:1px solid #dcdcdc;border-bottom:1px solid #dcdcdc"></div>
<div class="r" style="left:1734px;top:147px;width:22px;height:19px;background:#f0f0f0;border-bottom:1px solid #dcdcdc"></div>
<span class="t" style="left:1043.00px;top:147.34px;font-size:12px;color:#000;">1</span>
<svg style="left:1160px;top:150px" width="13" height="13"><rect x=".5" y=".5" width="12" height="12" fill="#fff" stroke="#000"/><path d="M3 3l7 7M10 3l-7 7" stroke="#000" stroke-width="1.8"/></svg>
<svg style="left:1194px;top:149.5px" width="8" height="11"><path d="M0 0l7 5.500-7 5.500z" fill="#000"/></svg>
<span class="t" style="left:1211.00px;top:146.67px;font-size:12.5px;color:#000;letter-spacing:0.262px;font-weight:bold;">Group Synthetic Population/DaySim Data Tools ...</span>
<span class="t" style="left:1535.20px;top:147.04px;font-size:12px;color:#000;letter-spacing:0.690px;">9 / 9</span>
<div class="r" style="left:1006px;top:166px;width:81px;height:19px;background:#f0f0f0;border-right:1px solid #8a8a8a;border-bottom:1px solid #7a7a7a;border-top:1px solid #fff"></div>
<div class="r" style="left:1087px;top:166px;width:60px;height:19px;background:#f0f0f0;border-right:1px solid #e0e0e0;border-bottom:1px solid #dcdcdc"></div>
<div class="r" style="left:1147px;top:166px;width:40px;height:19px;background:#fff;border-right:1px solid #dcdcdc;border-bottom:1px solid #dcdcdc"></div>
<div class="r" style="left:1187px;top:166px;width:344px;height:19px;background:#fff;border-right:1px solid #dcdcdc;border-bottom:1px solid #dcdcdc"></div>
<div class="r" style="left:1531px;top:166px;width:98px;height:19px;background:#f0f0f0;border-right:1px solid #dcdcdc;border-bottom:1px solid #dcdcdc"></div>
<div class="r" style="left:1629px;top:166px;width:105px;height:19px;background:#f0f0f0;border-right:1px solid #dcdcdc;border-bottom:1px solid #dcdcdc"></div>
<div class="r" style="left:1734px;top:166px;width:22px;height:19px;background:#f0f0f0;border-bottom:1px solid #dcdcdc"></div>
<span class="t" style="left:1039.25px;top:166.34px;font-size:12px;color:#000;letter-spacing:0.521px;">11</span>
<svg style="left:1160px;top:169px" width="13" height="13"><rect x=".5" y=".5" width="12" height="12" fill="#fff" stroke="#000"/><path d="M3 3l7 7M10 3l-7 7" stroke="#000" stroke-width="1.8"/></svg>
<svg style="left:1194px;top:168.5px" width="8" height="11"><path d="M0 0l7 5.500-7 5.500z" fill="#000"/></svg>
<span class="t" style="left:1211.00px;top:165.67px;font-size:12.5px;color:#000;letter-spacing:0.276px;font-weight:bold;">Group Initialize network ...</span>
<span class="t" style="left:1535.20px;top:166.04px;font-size:12px;color:#000;letter-spacing:0.690px;">5 / 5</span>
<div class="r" style="left:1006px;top:185px;width:81px;height:19px;background:#f0f0f0;border-right:1px solid #8a8a8a;border-bottom:1px solid #7a7a7a;border-top:1px solid #fff"></div>
<div class="r" style="left:1087px;top:185px;width:60px;height:19px;background:#f0f0f0;border-right:1px solid #e0e0e0;border-bottom:1px solid #dcdcdc"></div>
<div class="r" style="left:1147px;top:185px;width:40px;height:19px;background:#fff;border-right:1px solid #dcdcdc;border-bottom:1px solid #dcdcdc"></div>
<div class="r" style="left:1187px;top:185px;width:344px;height:19px;background:#fff;border-right:1px solid #dcdcdc;border-bottom:1px solid #dcdcdc"></div>
<div class="r" style="left:1531px;top:185px;width:98px;height:19px;background:#f0f0f0;border-right:1px solid #dcdcdc;border-bottom:1px solid #dcdcdc"></div>
<div class="r" style="left:1629px;top:185px;width:105px;height:19px;background:#f0f0f0;border-right:1px solid #dcdcdc;border-bottom:1px solid #dcdcdc"></div>
<div class="r" style="left:1734px;top:185px;width:22px;height:19px;background:#f0f0f0;border-bottom:1px solid #dcdcdc"></div>
<span class="t" style="left:1039.25px;top:185.34px;font-size:12px;color:#000;letter-spacing:0.076px;">17</span>
<svg style="left:1160px;top:188px" width="13" height="13"><rect x=".5" y=".5" width="12" height="12" fill="#fff" stroke="#000"/><path d="M3 3l7 7M10 3l-7 7" stroke="#000" stroke-width="1.8"/></svg>
<svg style="left:1194px;top:187.5px" width="8" height="11"><path d="M0 0l7 5.500-7 5.500z" fill="#000"/></svg>
<span class="t" style="left:1211.00px;top:184.67px;font-size:12.5px;color:#000;letter-spacing:0.230px;font-weight:bold;">Group Network Prep ...</span>
<span class="t" style="left:1535.20px;top:185.04px;font-size:12px;color:#000;letter-spacing:0.500px;">22 / 22</span>
<div class="r" style="left:1006px;top:204px;width:81px;height:19px;background:#f0f0f0;border-right:1px solid #8a8a8a;border-bottom:1px solid #7a7a7a;border-top:1px solid #fff"></div>
<div class="r" style="left:1087px;top:204px;width:60px;height:19px;background:#f0f0f0;border-right:1px solid #e0e0e0;border-bottom:1px solid #dcdcdc"></div>
<div class="r" style="left:1147px;top:204px;width:40px;height:19px;background:#fff;border-right:1px solid #dcdcdc;border-bottom:1px solid #dcdcdc"></div>
<div class="r" style="left:1187px;top:204px;width:344px;height:19px;background:#fff;border-right:1px solid #dcdcdc;border-bottom:1px solid #dcdcdc"></div>
<div class="r" style="left:1531px;top:204px;width:98px;height:19px;background:#f0f0f0;border-right:1px solid #dcdcdc;border-bottom:1px solid #dcdcdc"></div>
<div class="r" style="left:1629px;top:204px;width:105px;height:19px;background:#f0f0f0;border-right:1px solid #dcdcdc;border-bottom:1px solid #dcdcdc"></div>
<div class="r" style="left:1734px;top:204px;width:22px;height:19px;background:#f0f0f0;border-bottom:1px solid #dcdcdc"></div>
<span class="t" style="left:1039.25px;top:204.34px;font-size:12px;color:#000;letter-spacing:0.076px;">40</span>
<svg style="left:1160px;top:207px" width="13" height="13"><rect x=".5" y=".5" width="12" height="12" fill="#fff" stroke="#000"/><path d="M3 3l7 7M10 3l-7 7" stroke="#000" stroke-width="1.8"/></svg>
<svg style="left:1194px;top:206.5px" width="8" height="11"><path d="M0 0l7 5.500-7 5.500z" fill="#000"/></svg>
<span class="t" style="left:1211.00px;top:203.67px;font-size:12.5px;color:#000;letter-spacing:0.124px;font-weight:bold;">Group Network Skimming PrT ...</span>
<span class="t" style="left:1535.20px;top:204.04px;font-size:12px;color:#000;letter-spacing:0.500px;">31 / 31</span>
<div class="r" style="left:1006px;top:223px;width:81px;height:19px;background:#f0f0f0;border-right:1px solid #8a8a8a;border-bottom:1px solid #7a7a7a;border-top:1px solid #fff"></div>
<div class="r" style="left:1087px;top:223px;width:60px;height:19px;background:#f0f0f0;border-right:1px solid #e0e0e0;border-bottom:1px solid #dcdcdc"></div>
<div class="r" style="left:1147px;top:223px;width:40px;height:19px;background:#fff;border-right:1px solid #dcdcdc;border-bottom:1px solid #dcdcdc"></div>
<div class="r" style="left:1187px;top:223px;width:344px;height:19px;background:#fff;border-right:1px solid #dcdcdc;border-bottom:1px solid #dcdcdc"></div>
<div class="r" style="left:1531px;top:223px;width:98px;height:19px;background:#f0f0f0;border-right:1px solid #dcdcdc;border-bottom:1px solid #dcdcdc"></div>
<div class="r" style="left:1629px;top:223px;width:105px;height:19px;background:#f0f0f0;border-right:1px solid #dcdcdc;border-bottom:1px solid #dcdcdc"></div>
<div class="r" style="left:1734px;top:223px;width:22px;height:19px;background:#f0f0f0;border-bottom:1px solid #dcdcdc"></div>
<span class="t" style="left:1039.25px;top:223.34px;font-size:12px;color:#000;letter-spacing:0.076px;">72</span>
<svg style="left:1160px;top:226px" width="13" height="13"><rect x=".5" y=".5" width="12" height="12" fill="#fff" stroke="#000"/><path d="M3 3l7 7M10 3l-7 7" stroke="#000" stroke-width="1.8"/></svg>
<svg style="left:1194px;top:225.5px" width="8" height="11"><path d="M0 0l7 5.500-7 5.500z" fill="#000"/></svg>
<span class="t" style="left:1211.00px;top:222.67px;font-size:12.5px;color:#000;letter-spacing:0.112px;font-weight:bold;">Group Auxiliary Demand Generation ...</span>
<span class="t" style="left:1535.20px;top:223.04px;font-size:12px;color:#000;letter-spacing:0.690px;">2 / 2</span>
<div class="r" style="left:1006px;top:242px;width:81px;height:19px;background:#f0f0f0;border-right:1px solid #8a8a8a;border-bottom:1px solid #7a7a7a;border-top:1px solid #fff"></div>
<div class="r" style="left:1087px;top:242px;width:60px;height:19px;background:#f0f0f0;border-right:1px solid #e0e0e0;border-bottom:1px solid #dcdcdc"></div>
<div class="r" style="left:1147px;top:242px;width:40px;height:19px;background:#fff;border-right:1px solid #dcdcdc;border-bottom:1px solid #dcdcdc"></div>
<div class="r" style="left:1187px;top:242px;width:344px;height:19px;background:#fff;border-right:1px solid #dcdcdc;border-bottom:1px solid #dcdcdc"></div>
<div class="r" style="left:1531px;top:242px;width:98px;height:19px;background:#f0f0f0;border-right:1px solid #dcdcdc;border-bottom:1px solid #dcdcdc"></div>
<div class="r" style="left:1629px;top:242px;width:105px;height:19px;background:#f0f0f0;border-right:1px solid #dcdcdc;border-bottom:1px solid #dcdcdc"></div>
<div class="r" style="left:1734px;top:242px;width:22px;height:19px;background:#f0f0f0;border-bottom:1px solid #dcdcdc"></div>
<span class="t" style="left:1039.25px;top:242.34px;font-size:12px;color:#000;letter-spacing:0.076px;">75</span>
<svg style="left:1160px;top:245px" width="13" height="13"><rect x=".5" y=".5" width="12" height="12" fill="#fff" stroke="#000"/><path d="M3 3l7 7M10 3l-7 7" stroke="#000" stroke-width="1.8"/></svg>
<svg style="left:1194px;top:244.5px" width="8" height="11"><path d="M0 0l7 5.500-7 5.500z" fill="#000"/></svg>
<span class="t" style="left:1211.00px;top:241.67px;font-size:12.5px;color:#000;letter-spacing:0.157px;font-weight:bold;">Group Trip Distribution - Auxiliary Models ...</span>
<span class="t" style="left:1535.20px;top:242.04px;font-size:12px;color:#000;letter-spacing:0.500px;">40 / 40</span>
<div class="r" style="left:1006px;top:261px;width:81px;height:19px;background:#f0f0f0;border-right:1px solid #8a8a8a;border-bottom:1px solid #7a7a7a;border-top:1px solid #fff"></div>
<div class="r" style="left:1087px;top:261px;width:60px;height:19px;background:#f0f0f0;border-right:1px solid #e0e0e0;border-bottom:1px solid #dcdcdc"></div>
<div class="r" style="left:1147px;top:261px;width:40px;height:19px;background:#fff;border-right:1px solid #dcdcdc;border-bottom:1px solid #dcdcdc"></div>
<div class="r" style="left:1187px;top:261px;width:344px;height:19px;background:#fff;border-right:1px solid #dcdcdc;border-bottom:1px solid #dcdcdc"></div>
<div class="r" style="left:1531px;top:261px;width:98px;height:19px;background:#f0f0f0;border-right:1px solid #dcdcdc;border-bottom:1px solid #dcdcdc"></div>
<div class="r" style="left:1629px;top:261px;width:105px;height:19px;background:#f0f0f0;border-right:1px solid #dcdcdc;border-bottom:1px solid #dcdcdc"></div>
<div class="r" style="left:1734px;top:261px;width:22px;height:19px;background:#f0f0f0;border-bottom:1px solid #dcdcdc"></div>
<span class="t" style="left:1035.65px;top:261.34px;font-size:12px;color:#000;letter-spacing:0.523px;">116</span>
<svg style="left:1160px;top:264px" width="13" height="13"><rect x=".5" y=".5" width="12" height="12" fill="#fff" stroke="#000"/><path d="M3 3l7 7M10 3l-7 7" stroke="#000" stroke-width="1.8"/></svg>
<svg style="left:1194px;top:263.5px" width="8" height="11"><path d="M0 0l7 5.500-7 5.500z" fill="#000"/></svg>
<span class="t" style="left:1211.00px;top:260.67px;font-size:12.5px;color:#000;letter-spacing:0.128px;font-weight:bold;">Group Network Skimming PuT ...</span>
<span class="t" style="left:1535.20px;top:261.04px;font-size:12px;color:#000;letter-spacing:0.500px;">30 / 30</span>
<div class="r" style="left:1006px;top:280px;width:81px;height:19px;background:#f0f0f0;border-right:1px solid #8a8a8a;border-bottom:1px solid #7a7a7a;border-top:1px solid #fff"></div>
<div class="r" style="left:1087px;top:280px;width:60px;height:19px;background:#f0f0f0;border-right:1px solid #e0e0e0;border-bottom:1px solid #dcdcdc"></div>
<div class="r" style="left:1147px;top:280px;width:40px;height:19px;background:#fff;border-right:1px solid #dcdcdc;border-bottom:1px solid #dcdcdc"></div>
<div class="r" style="left:1187px;top:280px;width:344px;height:19px;background:#fff;border-right:1px solid #dcdcdc;border-bottom:1px solid #dcdcdc"></div>
<div class="r" style="left:1531px;top:280px;width:98px;height:19px;background:#f0f0f0;border-right:1px solid #dcdcdc;border-bottom:1px solid #dcdcdc"></div>
<div class="r" style="left:1629px;top:280px;width:105px;height:19px;background:#f0f0f0;border-right:1px solid #dcdcdc;border-bottom:1px solid #dcdcdc"></div>
<div class="r" style="left:1734px;top:280px;width:22px;height:19px;background:#f0f0f0;border-bottom:1px solid #dcdcdc"></div>
<span class="t" style="left:1035.65px;top:280.34px;font-size:12px;color:#000;letter-spacing:0.226px;">147</span>
<svg style="left:1160px;top:283px" width="13" height="13"><rect x=".5" y=".5" width="12" height="12" fill="#fff" stroke="#000"/><path d="M3 3l7 7M10 3l-7 7" stroke="#000" stroke-width="1.8"/></svg>
<svg style="left:1194px;top:282.5px" width="8" height="11"><path d="M0 0l7 5.500-7 5.500z" fill="#000"/></svg>
<span class="t" style="left:1211.00px;top:279.67px;font-size:12.5px;color:#000;letter-spacing:0.090px;font-weight:bold;">Group Demand Calculation - DaySim ...</span>
<span class="t" style="left:1535.20px;top:280.04px;font-size:12px;color:#000;letter-spacing:0.690px;">2 / 2</span>
<div class="r" style="left:1006px;top:299px;width:81px;height:19px;background:#f0f0f0;border-right:1px solid #8a8a8a;border-bottom:1px solid #7a7a7a;border-top:1px solid #fff"></div>
<div class="r" style="left:1087px;top:299px;width:60px;height:19px;background:#f0f0f0;border-right:1px solid #e0e0e0;border-bottom:1px solid #dcdcdc"></div>
<div class="r" style="left:1147px;top:299px;width:40px;height:19px;background:#fff;border-right:1px solid #dcdcdc;border-bottom:1px solid #dcdcdc"></div>
<div class="r" style="left:1187px;top:299px;width:344px;height:19px;background:#fff;border-right:1px solid #dcdcdc;border-bottom:1px solid #dcdcdc"></div>
<div class="r" style="left:1531px;top:299px;width:98px;height:19px;background:#f0f0f0;border-right:1px solid #dcdcdc;border-bottom:1px solid #dcdcdc"></div>
<div class="r" style="left:1629px;top:299px;width:105px;height:19px;background:#f0f0f0;border-right:1px solid #dcdcdc;border-bottom:1px solid #dcdcdc"></div>
<div class="r" style="left:1734px;top:299px;width:22px;height:19px;background:#f0f0f0;border-bottom:1px solid #dcdcdc"></div>
<span class="t" style="left:1035.65px;top:299.34px;font-size:12px;color:#000;letter-spacing:0.226px;">150</span>
<svg style="left:1160px;top:302px" width="13" height="13"><rect x=".5" y=".5" width="12" height="12" fill="#fff" stroke="#000"/><path d="M3 3l7 7M10 3l-7 7" stroke="#000" stroke-width="1.8"/></svg>
<svg style="left:1194px;top:301.5px" width="8" height="11"><path d="M0 0l7 5.500-7 5.500z" fill="#000"/></svg>
<span class="t" style="left:1211.00px;top:298.67px;font-size:12.5px;color:#000;letter-spacing:0.175px;font-weight:bold;">Group Network Assignment and Skim Update: AM ...</span>
<span class="t" style="left:1535.20px;top:299.04px;font-size:12px;color:#000;letter-spacing:0.500px;">24 / 24</span>
<div class="r" style="left:1006px;top:318px;width:81px;height:19px;background:#f0f0f0;border-right:1px solid #8a8a8a;border-bottom:1px solid #7a7a7a;border-top:1px solid #fff"></div>
<div class="r" style="left:1087px;top:318px;width:60px;height:19px;background:#f0f0f0;border-right:1px solid #e0e0e0;border-bottom:1px solid #dcdcdc"></div>
<div class="r" style="left:1147px;top:318px;width:40px;height:19px;background:#fff;border-right:1px solid #dcdcdc;border-bottom:1px solid #dcdcdc"></div>
<div class="r" style="left:1187px;top:318px;width:344px;height:19px;background:#fff;border-right:1px solid #dcdcdc;border-bottom:1px solid #dcdcdc"></div>
<div class="r" style="left:1531px;top:318px;width:98px;height:19px;background:#f0f0f0;border-right:1px solid #dcdcdc;border-bottom:1px solid #dcdcdc"></div>
<div class="r" style="left:1629px;top:318px;width:105px;height:19px;background:#f0f0f0;border-right:1px solid #dcdcdc;border-bottom:1px solid #dcdcdc"></div>
<div class="r" style="left:1734px;top:318px;width:22px;height:19px;background:#f0f0f0;border-bottom:1px solid #dcdcdc"></div>
<span class="t" style="left:1035.65px;top:318.34px;font-size:12px;color:#000;letter-spacing:0.226px;">175</span>
<svg style="left:1160px;top:321px" width="13" height="13"><rect x=".5" y=".5" width="12" height="12" fill="#fff" stroke="#000"/><path d="M3 3l7 7M10 3l-7 7" stroke="#000" stroke-width="1.8"/></svg>
<svg style="left:1194px;top:320.5px" width="8" height="11"><path d="M0 0l7 5.500-7 5.500z" fill="#000"/></svg>
<span class="t" style="left:1211.00px;top:317.67px;font-size:12.5px;color:#000;letter-spacing:0.184px;font-weight:bold;">Group Network Assignment and Skim Update: MD ...</span>
<span class="t" style="left:1535.20px;top:318.04px;font-size:12px;color:#000;letter-spacing:0.500px;">23 / 23</span>
<div class="r" style="left:1006px;top:337px;width:81px;height:19px;background:#f0f0f0;border-right:1px solid #8a8a8a;border-bottom:1px solid #7a7a7a;border-top:1px solid #fff"></div>
<div class="r" style="left:1087px;top:337px;width:60px;height:19px;background:#f0f0f0;border-right:1px solid #e0e0e0;border-bottom:1px solid #dcdcdc"></div>
<div class="r" style="left:1147px;top:337px;width:40px;height:19px;background:#fff;border-right:1px solid #dcdcdc;border-bottom:1px solid #dcdcdc"></div>
<div class="r" style="left:1187px;top:337px;width:344px;height:19px;background:#fff;border-right:1px solid #dcdcdc;border-bottom:1px solid #dcdcdc"></div>
<div class="r" style="left:1531px;top:337px;width:98px;height:19px;background:#f0f0f0;border-right:1px solid #dcdcdc;border-bottom:1px solid #dcdcdc"></div>
<div class="r" style="left:1629px;top:337px;width:105px;height:19px;background:#f0f0f0;border-right:1px solid #dcdcdc;border-bottom:1px solid #dcdcdc"></div>
<div class="r" style="left:1734px;top:337px;width:22px;height:19px;background:#f0f0f0;border-bottom:1px solid #dcdcdc"></div>
<span class="t" style="left:1035.65px;top:337.34px;font-size:12px;color:#000;letter-spacing:0.226px;">199</span>
<svg style="left:1160px;top:340px" width="13" height="13"><rect x=".5" y=".5" width="12" height="12" fill="#fff" stroke="#000"/><path d="M3 3l7 7M10 3l-7 7" stroke="#000" stroke-width="1.8"/></svg>
<svg style="left:1194px;top:339.5px" width="8" height="11"><path d="M0 0l7 5.500-7 5.500z" fill="#000"/></svg>
<span class="t" style="left:1211.00px;top:336.67px;font-size:12.5px;color:#000;letter-spacing:0.188px;font-weight:bold;">Group Network Assignment and Skim Update: PM ...</span>
<span class="t" style="left:1535.20px;top:337.04px;font-size:12px;color:#000;letter-spacing:0.500px;">24 / 24</span>
<div class="r" style="left:1006px;top:356px;width:81px;height:19px;background:#f0f0f0;border-right:1px solid #8a8a8a;border-bottom:1px solid #7a7a7a;border-top:1px solid #fff"></div>
<div class="r" style="left:1087px;top:356px;width:60px;height:19px;background:#f0f0f0;border-right:1px solid #e0e0e0;border-bottom:1px solid #dcdcdc"></div>
<div class="r" style="left:1147px;top:356px;width:40px;height:19px;background:#fff;border-right:1px solid #dcdcdc;border-bottom:1px solid #dcdcdc"></div>
<div class="r" style="left:1187px;top:356px;width:344px;height:19px;background:#fff;border-right:1px solid #dcdcdc;border-bottom:1px solid #dcdcdc"></div>
<div class="r" style="left:1531px;top:356px;width:98px;height:19px;background:#f0f0f0;border-right:1px solid #dcdcdc;border-bottom:1px solid #dcdcdc"></div>
<div class="r" style="left:1629px;top:356px;width:105px;height:19px;background:#f0f0f0;border-right:1px solid #dcdcdc;border-bottom:1px solid #dcdcdc"></div>
<div class="r" style="left:1734px;top:356px;width:22px;height:19px;background:#f0f0f0;border-bottom:1px solid #dcdcdc"></div>
<span class="t" style="left:1035.65px;top:356.34px;font-size:12px;color:#000;letter-spacing:0.226px;">224</span>
<svg style="left:1160px;top:359px" width="13" height="13"><rect x=".5" y=".5" width="12" height="12" fill="#fff" stroke="#000"/><path d="M3 3l7 7M10 3l-7 7" stroke="#000" stroke-width="1.8"/></svg>
<svg style="left:1194px;top:358.5px" width="8" height="11"><path d="M0 0l7 5.500-7 5.500z" fill="#000"/></svg>
<span class="t" style="left:1211.00px;top:355.67px;font-size:12.5px;color:#000;letter-spacing:0.156px;font-weight:bold;">Group Network Assignment and Skim Update: EV ...</span>
<span class="t" style="left:1535.20px;top:356.04px;font-size:12px;color:#000;letter-spacing:0.500px;">23 / 23</span>
<div class="r" style="left:1006px;top:375px;width:81px;height:19px;background:#f0f0f0;border-right:1px solid #8a8a8a;border-bottom:1px solid #7a7a7a;border-top:1px solid #fff"></div>
<div class="r" style="left:1087px;top:375px;width:60px;height:19px;background:#f0f0f0;border-right:1px solid #e0e0e0;border-bottom:1px solid #dcdcdc"></div>
<div class="r" style="left:1147px;top:375px;width:40px;height:19px;background:#fff;border-right:1px solid #dcdcdc;border-bottom:1px solid #dcdcdc"></div>
<div class="r" style="left:1187px;top:375px;width:344px;height:19px;background:#fff;border-right:1px solid #dcdcdc;border-bottom:1px solid #dcdcdc"></div>
<div class="r" style="left:1531px;top:375px;width:98px;height:19px;background:#f0f0f0;border-right:1px solid #dcdcdc;border-bottom:1px solid #dcdcdc"></div>
<div class="r" style="left:1629px;top:375px;width:105px;height:19px;background:#f0f0f0;border-right:1px solid #dcdcdc;border-bottom:1px solid #dcdcdc"></div>
<div class="r" style="left:1734px;top:375px;width:22px;height:19px;background:#f0f0f0;border-bottom:1px solid #dcdcdc"></div>
<span class="t" style="left:1035.65px;top:375.34px;font-size:12px;color:#000;letter-spacing:0.226px;">248</span>
<svg style="left:1160px;top:378px" width="13" height="13"><rect x=".5" y=".5" width="12" height="12" fill="#fff" stroke="#000"/><path d="M3 3l7 7M10 3l-7 7" stroke="#000" stroke-width="1.8"/></svg>
<svg style="left:1194px;top:377.5px" width="8" height="11"><path d="M0 0l7 5.500-7 5.500z" fill="#000"/></svg>
<span class="t" style="left:1211.00px;top:374.67px;font-size:12.5px;color:#000;letter-spacing:0.075px;font-weight:bold;">Group Compute Daily Flows and Convergence ...</span>
<span class="t" style="left:1535.20px;top:375.04px;font-size:12px;color:#000;letter-spacing:0.690px;">5 / 5</span>
<div class="r" style="left:1006px;top:394px;width:81px;height:19px;background:#f0f0f0;border-right:1px solid #8a8a8a;border-bottom:1px solid #7a7a7a;border-top:1px solid #fff"></div>
<div class="r" style="left:1087px;top:394px;width:60px;height:19px;background:#f0f0f0;border-right:1px solid #e0e0e0;border-bottom:1px solid #dcdcdc"></div>
<div class="r" style="left:1147px;top:394px;width:40px;height:19px;background:#fff;border-right:1px solid #dcdcdc;border-bottom:1px solid #dcdcdc"></div>
<div class="r" style="left:1187px;top:394px;width:344px;height:19px;background:#fff;border-right:1px solid #dcdcdc;border-bottom:1px solid #dcdcdc"></div>
<div class="r" style="left:1531px;top:394px;width:98px;height:19px;background:#f0f0f0;border-right:1px solid #dcdcdc;border-bottom:1px solid #dcdcdc"></div>
<div class="r" style="left:1629px;top:394px;width:105px;height:19px;background:#f0f0f0;border-right:1px solid #dcdcdc;border-bottom:1px solid #dcdcdc"></div>
<div class="r" style="left:1734px;top:394px;width:22px;height:19px;background:#f0f0f0;border-bottom:1px solid #dcdcdc"></div>
<span class="t" style="left:1035.65px;top:394.34px;font-size:12px;color:#000;letter-spacing:0.226px;">254</span>
<svg style="left:1160px;top:397px" width="13" height="13"><rect x=".5" y=".5" width="12" height="12" fill="#fff" stroke="#000"/><path d="M3 3l7 7M10 3l-7 7" stroke="#000" stroke-width="1.8"/></svg>
<svg style="left:1194px;top:396.5px" width="8" height="11"><path d="M0 0l7 5.500-7 5.500z" fill="#000"/></svg>
<span class="t" style="left:1211.00px;top:393.67px;font-size:12.5px;color:#000;letter-spacing:-0.048px;font-weight:bold;">Group Feedback check ...</span>
<span class="t" style="left:1535.20px;top:394.04px;font-size:12px;color:#000;letter-spacing:0.690px;">1 / 1</span>
<div class="r" style="left:1006px;top:413px;width:81px;height:19px;background:#f0f0f0;border-right:1px solid #8a8a8a;border-bottom:1px solid #7a7a7a;border-top:1px solid #fff"></div>
<div class="r" style="left:1087px;top:413px;width:60px;height:19px;background:#f0f0f0;border-right:1px solid #e0e0e0;border-bottom:1px solid #dcdcdc"></div>
<div class="r" style="left:1147px;top:413px;width:40px;height:19px;background:#fff;border-right:1px solid #dcdcdc;border-bottom:1px solid #dcdcdc"></div>
<div class="r" style="left:1187px;top:413px;width:344px;height:19px;background:#fff;border-right:1px solid #dcdcdc;border-bottom:1px solid #dcdcdc"></div>
<div class="r" style="left:1531px;top:413px;width:98px;height:19px;background:#f0f0f0;border-right:1px solid #dcdcdc;border-bottom:1px solid #dcdcdc"></div>
<div class="r" style="left:1629px;top:413px;width:105px;height:19px;background:#f0f0f0;border-right:1px solid #dcdcdc;border-bottom:1px solid #dcdcdc"></div>
<div class="r" style="left:1734px;top:413px;width:22px;height:19px;background:#f0f0f0;border-bottom:1px solid #dcdcdc"></div>
<span class="t" style="left:1035.65px;top:413.34px;font-size:12px;color:#000;letter-spacing:0.226px;">256</span>
<svg style="left:1160px;top:416px" width="13" height="13"><rect x=".5" y=".5" width="12" height="12" fill="#fff" stroke="#000"/><path d="M3 3l7 7M10 3l-7 7" stroke="#000" stroke-width="1.8"/></svg>
<svg style="left:1194px;top:415.5px" width="8" height="11"><path d="M0 0l7 5.500-7 5.500z" fill="#000"/></svg>
<span class="t" style="left:1211.00px;top:412.67px;font-size:12.5px;color:#000;letter-spacing:0.151px;font-weight:bold;">Group Network Assignment: Transit PK and OP ...</span>
<span class="t" style="left:1535.20px;top:413.04px;font-size:12px;color:#000;letter-spacing:0.690px;">8 / 8</span>
<div class="r" style="left:1006px;top:432px;width:81px;height:19px;background:#f0f0f0;border-right:1px solid #8a8a8a;border-bottom:1px solid #7a7a7a;border-top:1px solid #fff"></div>
<div class="r" style="left:1087px;top:432px;width:60px;height:19px;background:#f0f0f0;border-right:1px solid #e0e0e0;border-bottom:1px solid #dcdcdc"></div>
<div class="r" style="left:1147px;top:432px;width:40px;height:19px;background:#fff;border-right:1px solid #dcdcdc;border-bottom:1px solid #dcdcdc"></div>
<div class="r" style="left:1187px;top:432px;width:344px;height:19px;background:#fff;border-right:1px solid #dcdcdc;border-bottom:1px solid #dcdcdc"></div>
<div class="r" style="left:1531px;top:432px;width:98px;height:19px;background:#f0f0f0;border-right:1px solid #dcdcdc;border-bottom:1px solid #dcdcdc"></div>
<div class="r" style="left:1629px;top:432px;width:105px;height:19px;background:#f0f0f0;border-right:1px solid #dcdcdc;border-bottom:1px solid #dcdcdc"></div>
<div class="r" style="left:1734px;top:432px;width:22px;height:19px;background:#f0f0f0;border-bottom:1px solid #dcdcdc"></div>
<span class="t" style="left:1035.65px;top:432.34px;font-size:12px;color:#000;letter-spacing:0.226px;">265</span>
<svg style="left:1160px;top:435px" width="13" height="13"><rect x=".5" y=".5" width="12" height="12" fill="#fff" stroke="#000"/><path d="M3 3l7 7M10 3l-7 7" stroke="#000" stroke-width="1.8"/></svg>
<svg style="left:1194px;top:434.5px" width="8" height="11"><path d="M0 0l7 5.500-7 5.500z" fill="#000"/></svg>
<span class="t" style="left:1211.00px;top:431.67px;font-size:12.5px;color:#000;letter-spacing:0.127px;font-weight:bold;">Group Reports and Summaries ...</span>
<span class="t" style="left:1535.20px;top:432.04px;font-size:12px;color:#000;letter-spacing:0.690px;">3 / 3</span>
<svg style="left:1110px;top:149px" width="10" height="13"><path d="M1 1l7.500 5.500-7.500 5.500z" fill="none" stroke="#1030e0" stroke-width="1.200"/></svg>
<div class="r" style="left:1006px;top:979px;width:750px;height:17px;background:#f0f0f0;"></div>
<div class="r" style="left:1022px;top:981px;width:461px;height:13px;background:#cdcdcd;"></div>
<svg style="left:1010px;top:983px" width="7" height="10"><path d="M5.500 1l-4 4 4 4" stroke="#505050" stroke-width="2" fill="none"/></svg>
<svg style="left:1744px;top:983px" width="7" height="10"><path d="M1.500 1l4 4-4 4" stroke="#505050" stroke-width="2" fill="none"/></svg>
<div class="r" style="left:1756px;top:128px;width:8px;height:869px;background:#f0f0f0;"></div>
<div class="r" style="left:1758px;top:128px;width:1px;height:869px;background:#a0a0a0;"></div>
<div class="r" style="left:1761px;top:128px;width:1px;height:869px;background:#a0a0a0;"></div>
<div class="r" style="left:1005px;top:997px;width:909px;height:1px;background:#d0d0d0;"></div>
<div class="r" style="left:1308px;top:999px;width:1px;height:17px;background:#c8c8c8;"></div>
<div class="r" style="left:1764px;top:139px;width:143px;height:18px;background:linear-gradient(90deg,#000 0%,#000 18%,#bcbcbc 100%);"></div>
<span class="t" style="left:1766.00px;top:139.32px;font-size:11.5px;color:#fff;letter-spacing:0.029px;font-weight:bold;">Operations</span>
<div class="r" style="left:1764px;top:554.5px;width:143px;height:18px;background:linear-gradient(90deg,#000 0%,#000 18%,#bcbcbc 100%);"></div>
<span class="t" style="left:1766.00px;top:554.82px;font-size:11.5px;color:#fff;letter-spacing:0.250px;font-weight:bold;">View</span>
<div class="r" style="left:1764px;top:647.5px;width:143px;height:18px;background:linear-gradient(90deg,#000 0%,#000 18%,#bcbcbc 100%);"></div>
<span class="t" style="left:1766.00px;top:647.82px;font-size:11.5px;color:#fff;letter-spacing:0.008px;font-weight:bold;">Compute nodes</span>
<span class="t" style="left:1797.00px;top:166.19px;font-size:11px;color:#000;letter-spacing:-0.003px;">Create</span>
<svg style="left:1777px;top:166px" width="17" height="17" viewBox="0 0 17 17"><path d="M5.500 1.500h5v4h4v5h-4v4h-5v-4h-4v-5h4z" fill="#5aa0dc" stroke="#1f5fa8" stroke-width="1"/></svg>
<span class="t" style="left:1797.00px;top:191.19px;font-size:11px;color:#000;letter-spacing:-0.017px;">Create group</span>
<svg style="left:1777px;top:191px" width="17" height="17" viewBox="0 0 17 17"><path d="M1 3h5l1.500 1.500h6v8h-12.500z" fill="#e8b73c" stroke="#a67a14"/><path d="M3 5.500h11v7h-11z" fill="#f6d36a" stroke="#a67a14" stroke-width=".8"/><path d="M9.500 8.500h2v2h2v2h-2v2h-2v-2h-2v-2h2z" fill="#5aa0dc" stroke="#1f5fa8" stroke-width=".8"/></svg>
<span class="t" style="left:1797.00px;top:225.19px;font-size:11px;color:#9a9a9a;letter-spacing:-0.233px;">Switch</span>
<svg style="left:1777px;top:225px" width="17" height="17" viewBox="0 0 17 17"><path d="M1 3h14M5 8h10M1 13h14" stroke="#a0a0a0" stroke-width="3"/><path d="M1 6l3 2-3 2z" fill="#a0a0a0"/></svg>
<span class="t" style="left:1797.00px;top:249.19px;font-size:11px;color:#9a9a9a;letter-spacing:-0.239px;">Edit</span>
<svg style="left:1777px;top:249px" width="17" height="17" viewBox="0 0 17 17"><path d="M1.500 14.500l2-5 8-8 3 3-8 8z" fill="#a0a0a0"/></svg>
<span class="t" style="left:1797.00px;top:282.19px;font-size:11px;color:#9a9a9a;letter-spacing:-0.531px;">Up</span>
<svg style="left:1777px;top:282px" width="17" height="17" viewBox="0 0 17 17"><path d="M8 1l7 7h-4v7h-6v-7h-4z" fill="#a0a0a0"/></svg>
<span class="t" style="left:1797.00px;top:308.19px;font-size:11px;color:#9a9a9a;letter-spacing:-0.281px;">Down</span>
<svg style="left:1777px;top:308px" width="17" height="17" viewBox="0 0 17 17"><path d="M8 15l7-7h-4v-7h-6v7h-4z" fill="#a0a0a0"/></svg>
<span class="t" style="left:1797.00px;top:335.19px;font-size:11px;color:#9a9a9a;letter-spacing:-0.207px;">Duplicate</span>
<svg style="left:1777px;top:335px" width="17" height="17" viewBox="0 0 17 17"><path d="M1 1h7l2 2v7h-9zM6 6h7l2 2v7h-9z" fill="#a0a0a0"/></svg>
<span class="t" style="left:1797.00px;top:361.19px;font-size:11px;color:#9a9a9a;letter-spacing:-0.133px;">Delete</span>
<svg style="left:1777px;top:361px" width="17" height="17" viewBox="0 0 17 17"><path d="M2 4l2.500-2.500 3.500 3.500 3.500-3.500 2.500 2.500-3.500 3.500 3.500 3.500-2.500 2.500-3.500-3.500-3.500 3.500-2.500-2.500 3.500-3.500z" fill="#a0a0a0"/></svg>
<span class="t" style="left:1797.00px;top:399.19px;font-size:11px;color:#9a9a9a;letter-spacing:-0.065px;">Cut to clipboard</span>
<svg style="left:1777px;top:399px" width="17" height="17" viewBox="0 0 17 17"><path d="M5 1l5 10M11 1l-5 10" stroke="#a0a0a0" stroke-width="1.600" fill="none"/><circle cx="5" cy="13" r="2" stroke="#a0a0a0" stroke-width="1.300" fill="none"/><circle cx="11" cy="13" r="2" stroke="#a0a0a0" stroke-width="1.300" fill="none"/></svg>
<span class="t" style="left:1797.00px;top:432.19px;font-size:11px;color:#9a9a9a;letter-spacing:-0.094px;">Copy to clipboard</span>
<svg style="left:1777px;top:432px" width="17" height="17" viewBox="0 0 17 17"><path d="M1 2h7l2 2v6h-9zM6 7h7l2 2v6h-9z" fill="#a0a0a0"/></svg>
<span class="t" style="left:1797.00px;top:464.19px;font-size:11px;color:#000;letter-spacing:-0.144px;">Paste from clipboard</span>
<svg style="left:1777px;top:464px" width="17" height="17" viewBox="0 0 17 17"><path d="M1.500 3h11v11h-11z" fill="#e8b73c" stroke="#a67a14"/><path d="M4.500 1.500h5v3h-5z" fill="#f6e2a0" stroke="#a67a14" stroke-width=".8"/><path d="M8.500 8.500h5l2 2v5h-7z" fill="#fff" stroke="#2a6fc0"/><path d="M10 11h4M10 13h4" stroke="#2a6fc0" stroke-width=".8"/></svg>
<span class="t" style="left:1797.00px;top:501.19px;font-size:11px;color:#9a9a9a;letter-spacing:-0.097px;">Set all active</span>
<svg style="left:1777px;top:501px" width="17" height="17" viewBox="0 0 17 17"><path d="M4 1h8v5h-2v3h2v6h-8z" fill="#a0a0a0"/></svg>
<span class="t" style="left:1797.00px;top:527.19px;font-size:11px;color:#000;letter-spacing:-0.120px;">Set all inactive</span>
<svg style="left:1777px;top:527px" width="17" height="17" viewBox="0 0 17 17"><path d="M5 2v13" stroke="#888" stroke-width="2"/><path d="M5 2.500h6v5h-6" stroke="#222" stroke-width="1.400" fill="none"/><path d="M5 10h5v4h-5" stroke="#888" stroke-width="1" fill="#fff"/></svg>
<span class="t" style="left:1797.00px;top:586.19px;font-size:11px;color:#9a9a9a;letter-spacing:-0.240px;">Collapse all groups</span>
<svg style="left:1777px;top:586px" width="17" height="17" viewBox="0 0 17 17"><path d="M1 3l2-2h9l3 3v9l-2 2h-10l-2-2z" fill="#a0a0a0"/></svg>
<span class="t" style="left:1797.00px;top:620.19px;font-size:11px;color:#000;letter-spacing:-0.180px;">Expand all groups</span>
<svg style="left:1777px;top:620px" width="17" height="17" viewBox="0 0 17 17"><path d="M1 2h5l1.500 1.500h6v10h-12.500z" fill="#e8b73c" stroke="#a67a14"/><path d="M2.500 6.500h12l-1 7.500h-11z" fill="#f9d970" stroke="#a67a14" stroke-width=".8"/><path d="M3 4.500h10" stroke="#f6e2a0"/></svg>
<span class="t" style="left:1797.00px;top:670.19px;font-size:11px;color:#000;letter-spacing:-0.214px;">Manage compute</span>
<svg style="left:1777px;top:676px" width="17" height="17" viewBox="0 0 17 17"><rect x="1.500" y="2.500" width="11" height="8" fill="#fff" stroke="#333" stroke-width="1.200"/><path d="M4 13h6M7 10.500v2.500" stroke="#333" stroke-width="1.200"/><circle cx="11" cy="11" r="3.200" fill="none" stroke="#4a90d9" stroke-width="1.800" stroke-dasharray="2 1.200"/></svg>
<span class="t" style="left:1797.00px;top:683.19px;font-size:11px;color:#000;letter-spacing:0.108px;">nodes...</span>
<div class="r" style="left:0px;top:1019px;width:1920px;height:21px;background:#f0f0f0;border-top:1px solid #d0d0d0"></div>
<span class="t" style="left:4.00px;top:1021.84px;font-size:12px;color:#000;letter-spacing:-0.026px;">Node: Select by mouse-click.</span>
<div class="r" style="left:1325px;top:1021px;width:1px;height:17px;background:#c8c8c8;"></div>
<div class="r" style="left:1494px;top:1021px;width:1px;height:17px;background:#c8c8c8;"></div>
<div class="r" style="left:1518px;top:1021px;width:1px;height:17px;background:#c8c8c8;"></div>
<div class="r" style="left:1645px;top:1021px;width:1px;height:17px;background:#c8c8c8;"></div>
<div class="r" style="left:1754px;top:1021px;width:1px;height:17px;background:#c8c8c8;"></div>
<div class="r" style="left:1860px;top:1021px;width:1px;height:17px;background:#c8c8c8;"></div>
<span class="t" style="left:1523.00px;top:1022.19px;font-size:11px;color:#000;letter-spacing:-0.235px;">1:540410</span>
<span class="t" style="left:1650.00px;top:1022.19px;font-size:11px;color:#000;letter-spacing:-0.112px;">300095.6214</span>
<span class="t" style="left:1759.00px;top:1022.19px;font-size:11px;color:#000;letter-spacing:-0.196px;">1943746.5599</span>
<div class="r" style="left:1864px;top:1021px;width:22px;height:17px;background:#f3b04a;"></div>
<svg style="left:1867px;top:1022px" width="16" height="16" viewBox="0 0 16 16"><path d="M6 2h4v4h3l-5 5-5-5h3z" fill="#5a3a10"/><path d="M2 13h12" stroke="#5a3a10" stroke-width="2"/></svg>
</body></html>
